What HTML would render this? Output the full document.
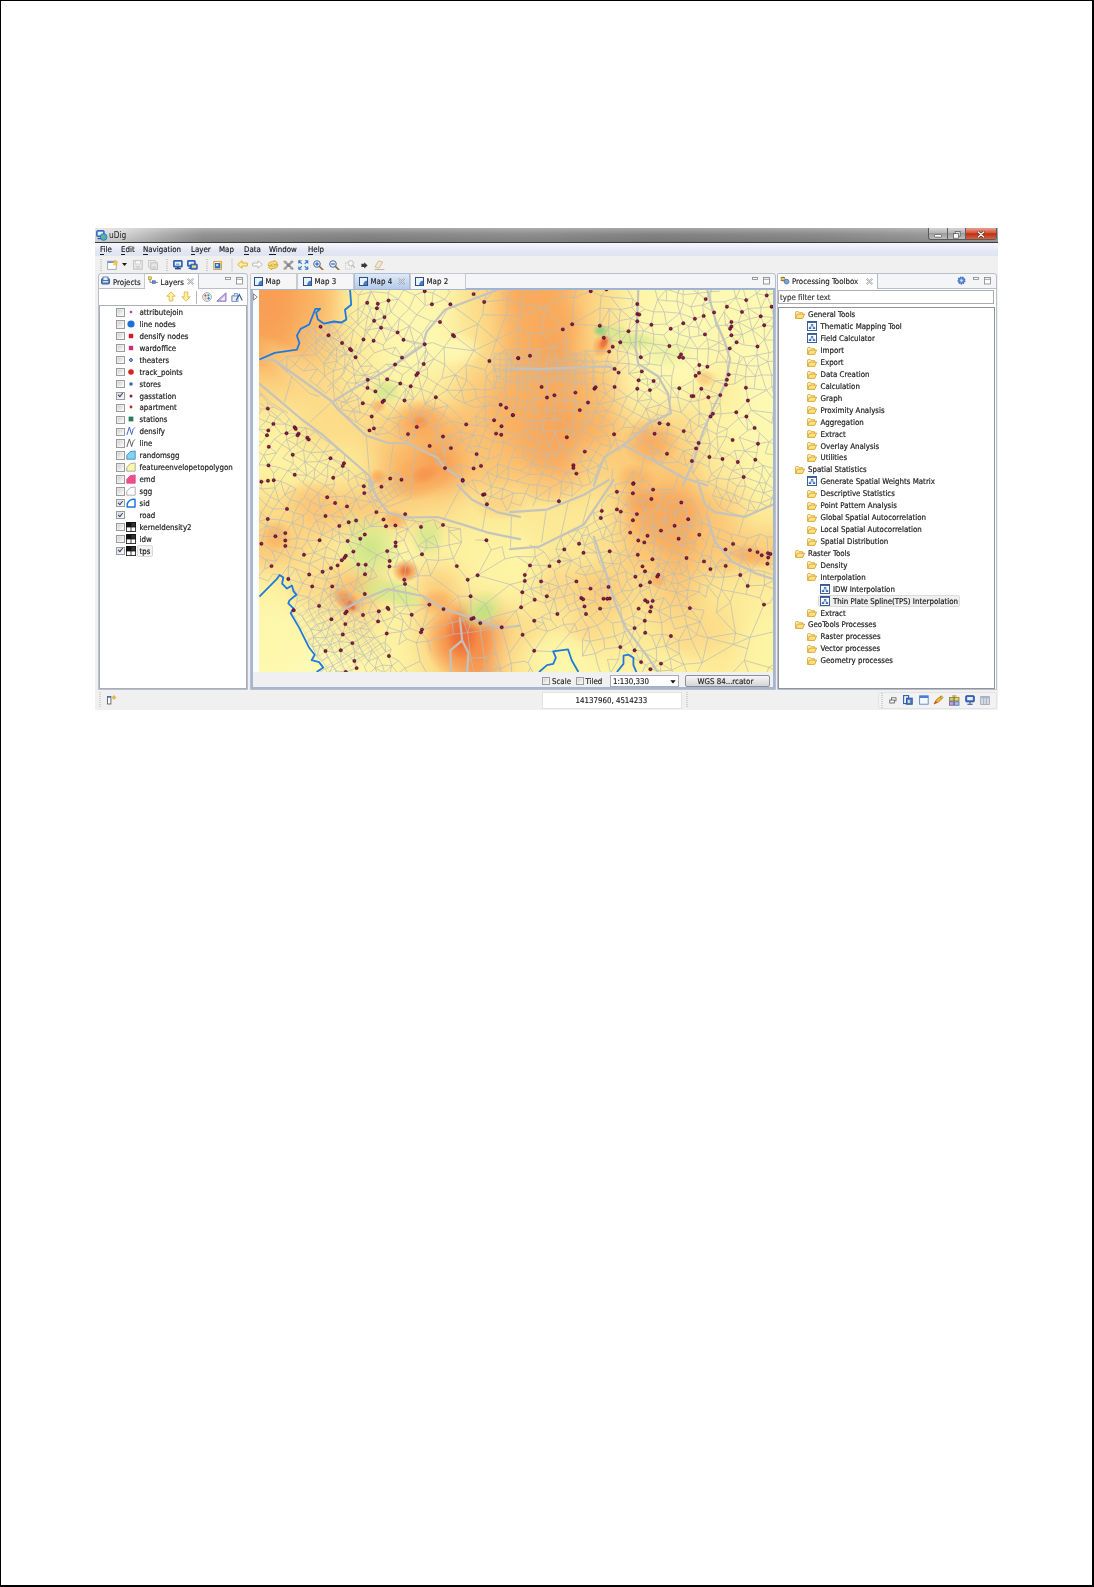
<!DOCTYPE html>
<html lang="en">
<head>
<meta charset="utf-8">
<title>uDig - Thin Plate Spline(TPS) Interpolation</title>
<style>
html,body{margin:0;padding:0;}
body{width:1094px;height:1587px;position:relative;overflow:hidden;background:#fff;
 font-family:"DejaVu Sans Condensed","Liberation Sans",sans-serif;font-size:7.85px;color:#222;}
#page{position:absolute;left:0;top:0;width:1091px;height:1584px;border-style:solid;border-color:#000;border-width:1px 2px 2px 1px;background:#fff;}
#app{position:absolute;left:95px;top:228px;width:903px;height:482px;background:#f0f0f0;overflow:hidden;filter:blur(0.42px);}
#app div,#app span,#app svg{position:absolute;}
#titlebar{left:0;top:0;width:903px;height:15px;
 background:linear-gradient(rgba(255,255,255,.28),rgba(255,255,255,0) 45%,rgba(0,0,0,.10)),linear-gradient(to right,#e0e0e0 0,#d4d4d4 3%,#b0b0b0 7.5%,#939393 12%,#878787 30%,#8e8e8e 48%,#838383 62%,#8b8b8b 80%,#989898 91%,#a2a2a2 100%);
 border-bottom:1px solid #3a3a3a;box-sizing:border-box;}
#titlebar .t{left:14px;top:2px;font-size:8.3px;color:#222;}
#menubar{left:0;top:15px;width:903px;height:13px;background:linear-gradient(#f7f8fc,#e3e7f3 60%,#dfe4f1);}
#menubar span{-webkit-text-stroke:0.15px #1a1a1a;top:1.8px;font-size:7.85px;color:#1a1a1a;white-space:nowrap;}
#menubar u{text-decoration:underline;text-decoration-thickness:0.6px;text-underline-offset:0.5px;}
#toolbar{left:0;top:28px;width:903px;height:17px;background:#f0f0f0;}
.frame{background:#fff;border:1px solid #b4b9c4;box-sizing:border-box;}
.tab{box-sizing:border-box;border:1px solid #b4b9c4;border-bottom:none;border-radius:2px 2px 0 0;}
.tt{-webkit-text-stroke:0.15px #222;font-size:7.85px;white-space:nowrap;color:#222;line-height:10px;}
.row{-webkit-text-stroke:0.18px #1c1c1c;white-space:nowrap;font-size:7.85px;line-height:10px;color:#1c1c1c;}
.cb{border:1px solid #9a9b9b;background:linear-gradient(135deg,#c9c9c9,#f4f4f4 75%);box-shadow:inset 0 0 0 0.6px #f4f4f4;}
.cb.on::after{content:"";position:absolute;left:1px;top:0.5px;width:3.5px;height:2px;border-left:1.2px solid #35457e;border-bottom:1.2px solid #35457e;transform:rotate(-50deg);}
</style>
</head>
<body>
<div id="page"></div>
<div id="app">
<div id="titlebar"><span class="t">uDig</span></div>
<div id="menubar"><span style="left:5px">File</span><div style="left:5.2px;top:10.6px;width:3.7px;height:0.7px;background:#1a1a1a"></div><span style="left:26px">Edit</span><div style="left:26.2px;top:10.6px;width:4.1px;height:0.7px;background:#1a1a1a"></div><span style="left:48px">Navigation</span><div style="left:48.2px;top:10.6px;width:4.9px;height:0.7px;background:#1a1a1a"></div><span style="left:96px">Layer</span><div style="left:96.2px;top:10.6px;width:3.5px;height:0.7px;background:#1a1a1a"></div><span style="left:124px">Map</span><span style="left:149px">Data</span><div style="left:149.2px;top:10.6px;width:5.0px;height:0.7px;background:#1a1a1a"></div><span style="left:174px">Window</span><div style="left:174.2px;top:10.6px;width:6.6px;height:0.7px;background:#1a1a1a"></div><span style="left:213px">Help</span><div style="left:213.2px;top:10.6px;width:4.9px;height:0.7px;background:#1a1a1a"></div></div>
<div id="toolbar"></div>
<svg style="left:4.5px;top:30.5px;" width="2" height="13" viewBox="0 0 2 13"><path d="M1 0V13" stroke="#a9a9a9" stroke-width="1" stroke-dasharray="1 1.2"/></svg>
<svg style="left:70.5px;top:30.5px;" width="2" height="13" viewBox="0 0 2 13"><path d="M1 0V13" stroke="#a9a9a9" stroke-width="1" stroke-dasharray="1 1.2"/></svg>
<svg style="left:110.5px;top:30.5px;" width="2" height="13" viewBox="0 0 2 13"><path d="M1 0V13" stroke="#a9a9a9" stroke-width="1" stroke-dasharray="1 1.2"/></svg>
<svg style="left:135.5px;top:30.5px;" width="2" height="13" viewBox="0 0 2 13"><path d="M1 0V13" stroke="#a9a9a9" stroke-width="1" stroke-dasharray="1 1.2"/></svg>
<svg style="left:12px;top:31.5px;" width="11" height="10" viewBox="0 0 11 10"><rect x="0.6" y="1.2" width="8.6" height="8.2" fill="#fdfdf6" stroke="#9ba7bd" stroke-width="0.9"/><rect x="0.6" y="1.2" width="8.6" height="1.8" fill="#6d8fc6"/><path d="M8.3 0L9.2 1.8L11 2.2L9.6 3.4L10 5.2L8.3 4.2L6.6 5.2L7 3.4L5.6 2.2L7.4 1.8Z" fill="#f5cf4a" stroke="#d9a520" stroke-width="0.4"/></svg>
<svg style="left:27px;top:35px;" width="5" height="3" viewBox="0 0 5 3"><path d="M0 0H5L2.5 3Z" fill="#1a1a1a"/></svg>
<svg style="left:37.5px;top:31.5px;" width="10" height="10" viewBox="0 0 10 10"><rect x="0.6" y="0.6" width="8.6" height="8.6" fill="#eaeaea" stroke="#bdbdbd" stroke-width="0.9"/><rect x="2.4" y="0.8" width="5" height="3.2" fill="#f8f8f8" stroke="#c6c6c6" stroke-width="0.6"/><rect x="2.6" y="5.8" width="4.6" height="3.2" fill="#d5d5d5"/></svg>
<svg style="left:52.5px;top:31.5px;" width="10" height="10" viewBox="0 0 10 10"><rect x="0.6" y="0.6" width="6.6" height="6.6" fill="#eeeeee" stroke="#c4c4c4" stroke-width="0.9"/><rect x="2.8" y="2.8" width="6.6" height="6.6" fill="#e6e6e6" stroke="#bdbdbd" stroke-width="0.9"/><rect x="4.4" y="6.4" width="3.4" height="2.8" fill="#d2d2d2"/></svg>
<svg style="left:77.5px;top:31.5px;" width="10" height="10" viewBox="0 0 10 10"><rect x="0.6" y="0.6" width="8.6" height="6.4" rx="0.3" fill="#3d74c8" stroke="#24509c" stroke-width="0.9"/><rect x="1.8" y="1.8" width="6.2" height="3.8" fill="#e6effc"/><path d="M3 4.2H6.4" stroke="#54688c" stroke-width="0.8"/><path d="M2 8.6H7.8" stroke="#1d4288" stroke-width="1.5"/><path d="M4.9 7V8.2" stroke="#1d4288" stroke-width="1.6"/></svg>
<svg style="left:92px;top:31.5px;" width="11" height="10" viewBox="0 0 11 10"><rect x="0.6" y="0.6" width="7.6" height="5.6" rx="0.3" fill="#3d74c8" stroke="#24509c" stroke-width="0.9"/><rect x="1.8" y="1.8" width="5.2" height="3" fill="#e6effc"/><rect x="3.8" y="4.2" width="6.4" height="5" rx="0.3" fill="#4a80d2" stroke="#24509c" stroke-width="0.9"/><rect x="5" y="5.4" width="4" height="2.4" fill="#f0d98a"/><path d="M1.6 8.2H4" stroke="#1d4288" stroke-width="1.3"/></svg>
<svg style="left:117.5px;top:31.5px;" width="10" height="10" viewBox="0 0 10 10"><rect x="0.8" y="1.4" width="7.6" height="8" fill="#fdf7e0" stroke="#c49a3a" stroke-width="0.9"/><rect x="2.2" y="3.4" width="4.8" height="4.6" fill="#3f78d0" stroke="#244f9c" stroke-width="0.7"/><rect x="3" y="4.3" width="2.2" height="1.6" fill="#dbe8fb"/><path d="M8 0L8.7 1.4L10 1.7L9 2.6L9.3 4L8 3.2L6.8 4L7.1 2.6L6.1 1.7L7.4 1.4Z" fill="#f2c234"/></svg>
<svg style="left:142px;top:32.3px;" width="11" height="9" viewBox="0 0 11 9"><path d="M0.7 4.5L5 0.7V3H10.3V6H5V8.3Z" fill="#fdf0a6" stroke="#dcaa28" stroke-width="0.9" stroke-linejoin="round"/></svg>
<svg style="left:157px;top:32.3px;" width="11" height="9" viewBox="0 0 11 9"><path d="M10.3 4.5L6 0.7V3H0.7V6H6V8.3Z" fill="#fafafa" stroke="#b6b6b6" stroke-width="0.9" stroke-linejoin="round"/></svg>
<svg style="left:171.5px;top:31.8px;" width="12" height="10" viewBox="0 0 12 10"><path d="M1 5.6Q1.2 1.6 5.4 1.6H7.2V0.4L10.6 2.8L7.2 5.2V4H5.6Q3.6 4 3.4 5.6Z" fill="#fce88e" stroke="#cfa024" stroke-width="0.8" stroke-linejoin="round"/><path d="M11 4.6Q10.8 8.6 6.6 8.6H4.8V9.8L1.4 7.4L4.8 5V6.2H6.4Q8.4 6.2 8.6 4.6Z" fill="#f9dc70" stroke="#cfa024" stroke-width="0.8" stroke-linejoin="round"/></svg>
<svg style="left:187.5px;top:31.8px;" width="11" height="10" viewBox="0 0 11 10"><path d="M1.4 1.6L9.6 8.8M9.6 1.6L1.4 8.8" stroke="#9d9d9d" stroke-width="2" stroke-linecap="round"/><circle cx="2.6" cy="2.2" r="1.5" fill="#a4a4a4"/><circle cx="8.4" cy="2" r="1.3" fill="#9a9a9a"/><circle cx="5.5" cy="5.2" r="1.9" fill="#858585"/><circle cx="2.8" cy="8.2" r="1.2" fill="#a0a0a0"/><circle cx="8.4" cy="8.2" r="1.3" fill="#a0a0a0"/></svg>
<svg style="left:203px;top:31.8px;" width="10.5" height="10" viewBox="0 0 10.5 10"><g stroke="#2f7ad4" stroke-width="1.1" fill="none"><path d="M0.8 3.6V0.8H3.6M0.8 0.8L3.8 3.8"/><path d="M9.7 3.6V0.8H6.9M9.7 0.8L6.7 3.8"/><path d="M0.8 6.4V9.2H3.6M0.8 9.2L3.8 6.2"/><path d="M9.7 6.4V9.2H6.9M9.7 9.2L6.7 6.2"/></g></svg>
<svg style="left:218px;top:31.8px;" width="11" height="10.5" viewBox="0 0 11 10.5"><circle cx="4" cy="4" r="3.3" fill="#eaf2fd" stroke="#3d6db8" stroke-width="1"/><path d="M2.2 4H5.8M4 2.2V5.8" stroke="#2450a0" stroke-width="1.1"/><path d="M6.4 6.4L10 10" stroke="#8a6a3a" stroke-width="1.5" stroke-linecap="round"/></svg>
<svg style="left:233.5px;top:31.8px;" width="11" height="10.5" viewBox="0 0 11 10.5"><circle cx="4" cy="4" r="3.3" fill="#eaf2fd" stroke="#3d6db8" stroke-width="1"/><path d="M2.2 4H5.8" stroke="#2450a0" stroke-width="1.1"/><path d="M6.4 6.4L10 10" stroke="#8a6a3a" stroke-width="1.5" stroke-linecap="round"/></svg>
<svg style="left:249.5px;top:31.8px;" width="10.5" height="10.5" viewBox="0 0 10.5 10.5"><rect x="0.6" y="2.6" width="6" height="6.6" fill="none" stroke="#bdbdbd" stroke-width="0.8" stroke-dasharray="1 1"/><circle cx="5.8" cy="3.2" r="2.6" fill="#f6f6f6" stroke="#b4b4b4" stroke-width="0.8"/><path d="M7.6 5.2L9.8 7.8" stroke="#b0b0b0" stroke-width="1.1"/></svg>
<svg style="left:265.5px;top:33.5px;" width="7" height="7" viewBox="0 0 7 7"><path d="M0.4 1.8H3.2V0.3L6.6 3.4L3.2 6.5V5H0.4Z" fill="#3a3a3a"/></svg>
<svg style="left:278.5px;top:31.8px;" width="11" height="10.5" viewBox="0 0 11 10.5"><path d="M4.6 0.8L8.8 2L5 8.2L0.8 7Z" fill="#f1e6d2" stroke="#c9b48c" stroke-width="0.8" stroke-linejoin="round"/><path d="M0.6 9.6H10.4" stroke="#b9a888" stroke-width="0.9"/></svg>
<svg style="left:1px;top:1.5px;" width="12" height="11" viewBox="0 0 12 11"><rect x="0.6" y="0.6" width="7.6" height="6" rx="0.8" fill="#4a86d8" stroke="#2b5aa6" stroke-width="0.9"/><rect x="1.8" y="1.8" width="5.2" height="3.4" fill="#e4eefc"/><circle cx="7.6" cy="7" r="3.4" fill="#43a6e8" stroke="#2c6fb4" stroke-width="0.7"/><path d="M5.2 6Q6.6 4.4 8.4 5.6Q9.6 7 8.2 8.6Q6.4 9.2 5.8 7.6Z" fill="#6cc04a"/><path d="M1.6 8.6H5" stroke="#2b5aa6" stroke-width="1.2"/></svg>
<div style="left:833px;top:0px;width:69px;height:12px;border:1px solid #5a5a5a;border-top:none;border-radius:0 0 3px 3px;box-sizing:border-box;background:linear-gradient(#d4d4d4,#b4b4b4 45%,#9e9e9e 50%,#bcbcbc);"></div>
<div style="left:852px;top:0px;width:1px;height:11.5px;background:#5f5f5f;"></div>
<div style="left:870px;top:0px;width:1px;height:11.5px;background:#5f5f5f;"></div>
<div style="left:871px;top:0px;width:30px;height:11px;background:linear-gradient(#e6a091,#d2553b 45%,#c02f12 52%,#d5623f);border-radius:0 0 2px 0;"></div>
<svg style="left:838.5px;top:5.5px;" width="8" height="4" viewBox="0 0 8 4"><rect x="0.5" y="0.5" width="7" height="2.6" rx="0.6" fill="#fff" stroke="#555" stroke-width="0.7"/></svg>
<svg style="left:857.5px;top:2.5px;" width="8" height="8" viewBox="0 0 8 8"><rect x="2.2" y="0.6" width="5" height="4.6" fill="#ddd" stroke="#555" stroke-width="0.7"/><rect x="0.6" y="2.6" width="5" height="4.6" fill="#fff" stroke="#555" stroke-width="0.7"/></svg>
<svg style="left:882px;top:2.5px;" width="8" height="7" viewBox="0 0 8 7"><path d="M1.2 1L6.8 6M6.8 1L1.2 6" stroke="#5a2a22" stroke-width="2.4" stroke-linecap="round"/><path d="M1.2 1L6.8 6M6.8 1L1.2 6" stroke="#fff" stroke-width="1.3" stroke-linecap="round"/></svg>
<div style="left:3px;top:45px;width:150px;height:417px;background:#f4f5f7;border:1px solid #b9bec8;box-sizing:border-box;border-radius:3px 3px 0 0;"></div>
<div style="left:4px;top:60px;width:148px;height:1px;background:#b9bec8;"></div>
<div class="tab" style="left:49px;top:45px;width:55px;height:16px;background:#fff;"></div>
<div style="left:48.5px;top:46px;width:1px;height:14px;background:#c5c9d1;"></div>
<div style="left:4px;top:61px;width:148px;height:16px;background:#fff;"></div>
<div style="left:4px;top:77px;width:148px;height:384px;background:#fff;border:1px solid #a9adb5;box-sizing:border-box;"></div>
<svg style="left:5.5px;top:48px;" width="9" height="9" viewBox="0 0 9 9"><rect x="0.5" y="2.5" width="8" height="5.5" rx="1" fill="#5b86c9" stroke="#33578f" stroke-width="0.9"/><rect x="2" y="1" width="5" height="3.4" fill="#e8eefb" stroke="#33578f" stroke-width="0.7"/><rect x="2" y="5" width="5" height="1.4" fill="#cfe0fa"/></svg>
<span class="tt" style="left:18px;top:49.7px;">Projects</span>
<svg style="left:52.5px;top:48px;" width="10" height="9" viewBox="0 0 10 9"><rect x="0.4" y="0.8" width="3.2" height="2.6" fill="#f3d35c" stroke="#b58f17" stroke-width="0.6"/><path d="M2 3.5V6.3H4.2" stroke="#555" stroke-width="0.7" fill="none"/><rect x="4.3" y="4.8" width="3" height="2.6" fill="#5d8fd6" stroke="#2f5796" stroke-width="0.6"/><path d="M8 6.4H9.8" stroke="#555" stroke-width="0.8"/></svg>
<span class="tt" style="left:65.5px;top:49.7px;">Layers</span>
<svg style="left:91.5px;top:50px;" width="7" height="7" viewBox="0 0 7 7"><path d="M0.6 1.4L1.4 0.6L3.5 2.7L5.6 0.6L6.4 1.4L4.3 3.5L6.4 5.6L5.6 6.4L3.5 4.3L1.4 6.4L0.6 5.6L2.7 3.5Z" fill="#fbfbfb" stroke="#7d7d7d" stroke-width="0.7" stroke-linejoin="round"/></svg>
<svg style="left:129.5px;top:48.5px;" width="18" height="8" viewBox="0 0 18 8"><rect x="0.5" y="0.5" width="5" height="2" fill="#fff" stroke="#858585" stroke-width="0.8"/><rect x="11.5" y="0.5" width="6" height="6.5" fill="#fff" stroke="#858585" stroke-width="0.8"/><path d="M11.5 2.3H17.5" stroke="#858585" stroke-width="0.8"/></svg>
<svg style="left:71px;top:63px;" width="10" height="11" viewBox="0 0 10 11"><path d="M5 0.8L9.2 5.2H6.8V10H3.2V5.2H0.8Z" fill="#fdf1ac" stroke="#dfae2c" stroke-width="0.8" stroke-linejoin="round"/></svg>
<svg style="left:86px;top:63px;" width="10" height="11" viewBox="0 0 10 11"><path d="M5 10.2L9.2 5.8H6.8V1H3.2V5.8H0.8Z" fill="#fdf1ac" stroke="#dfae2c" stroke-width="0.8" stroke-linejoin="round"/></svg>
<div style="left:101px;top:62.5px;width:1px;height:13px;background:#b5b5b5;"></div>
<svg style="left:107px;top:63.5px;" width="10" height="10" viewBox="0 0 10 10"><circle cx="5" cy="5" r="4.4" fill="#e9edf6" stroke="#9aa6c4" stroke-width="0.9"/><circle cx="3.4" cy="3.6" r="1.1" fill="#e03b3b"/><circle cx="6.4" cy="3.4" r="1.1" fill="#3bb04a"/><circle cx="6.6" cy="6.4" r="1.1" fill="#2f62d6"/><circle cx="3.6" cy="6.6" r="1.1" fill="#e8c32b"/></svg>
<svg style="left:121px;top:64px;" width="11" height="10" viewBox="0 0 11 10"><path d="M0.8 9.2L10 0.8V9.2Z" fill="#c9b8e6" stroke="#8a74c2" stroke-width="1" stroke-linejoin="round"/><path d="M4.5 8.2L8.8 4V8.2Z" fill="#f4f0fb"/></svg>
<svg style="left:136px;top:63.5px;" width="12" height="11" viewBox="0 0 12 11"><path d="M1 9.5V3.8H3.2V1.5H6.5V3.8" fill="#dfe8f6" stroke="#6d87b3" stroke-width="0.8"/><rect x="1" y="4" width="6" height="5.5" fill="#e6eefb" stroke="#6d87b3" stroke-width="0.8"/><path d="M5 8.5L8.3 2.5L11.3 8.5" fill="none" stroke="#3a5f9e" stroke-width="1.2"/></svg>
<div class="cb" style="left:21.3px;top:80.2px;width:6.4px;height:6.4px;"></div>
<svg style="left:31px;top:79px;" width="10" height="10" viewBox="0 0 10 10"><circle cx="5" cy="5" r="1.3" fill="#c2339b"/></svg>
<span class="row" style="left:44.5px;top:80px;">attributejoin</span>
<div class="cb" style="left:21.3px;top:92.13px;width:6.4px;height:6.4px;"></div>
<svg style="left:31px;top:90.93px;" width="10" height="10" viewBox="0 0 10 10"><circle cx="5" cy="5" r="3.6" fill="#1f6fd9"/></svg>
<span class="row" style="left:44.5px;top:91.93px;">line nodes</span>
<div class="cb" style="left:21.3px;top:104.06px;width:6.4px;height:6.4px;"></div>
<svg style="left:31px;top:102.86px;" width="10" height="10" viewBox="0 0 10 10"><rect x="2.8" y="2.8" width="4.4" height="4.4" fill="#d4172a"/></svg>
<span class="row" style="left:44.5px;top:103.86px;">densify nodes</span>
<div class="cb" style="left:21.3px;top:115.99px;width:6.4px;height:6.4px;"></div>
<svg style="left:31px;top:114.79px;" width="10" height="10" viewBox="0 0 10 10"><rect x="2.8" y="2.8" width="4.4" height="4.4" fill="#cc2b7b"/></svg>
<span class="row" style="left:44.5px;top:115.79px;">wardoffice</span>
<div class="cb" style="left:21.3px;top:127.92px;width:6.4px;height:6.4px;"></div>
<svg style="left:31px;top:126.72px;" width="10" height="10" viewBox="0 0 10 10"><circle cx="5" cy="5" r="1.4" fill="#dfe8ff" stroke="#1b3f9c" stroke-width="1"/></svg>
<span class="row" style="left:44.5px;top:127.72px;">theaters</span>
<div class="cb" style="left:21.3px;top:139.85px;width:6.4px;height:6.4px;"></div>
<svg style="left:31px;top:138.65px;" width="10" height="10" viewBox="0 0 10 10"><circle cx="5" cy="5" r="2.8" fill="#d92222"/></svg>
<span class="row" style="left:44.5px;top:139.65px;">track_points</span>
<div class="cb" style="left:21.3px;top:151.78px;width:6.4px;height:6.4px;"></div>
<svg style="left:31px;top:150.58px;" width="10" height="10" viewBox="0 0 10 10"><rect x="3.5" y="3.5" width="3" height="3" fill="#2f5fae"/></svg>
<span class="row" style="left:44.5px;top:151.58px;">stores</span>
<div class="cb on" style="left:21.3px;top:163.71px;width:6.4px;height:6.4px;"></div>
<svg style="left:31px;top:162.51px;" width="10" height="10" viewBox="0 0 10 10"><circle cx="5" cy="5" r="1.5" fill="#8c1c3c"/></svg>
<span class="row" style="left:44.5px;top:163.51px;">gasstation</span>
<div class="cb" style="left:21.3px;top:175.64px;width:6.4px;height:6.4px;"></div>
<svg style="left:31px;top:174.44px;" width="10" height="10" viewBox="0 0 10 10"><circle cx="5" cy="5" r="1.4" fill="#c62121"/></svg>
<span class="row" style="left:44.5px;top:175.44px;">apartment</span>
<div class="cb" style="left:21.3px;top:187.57px;width:6.4px;height:6.4px;"></div>
<svg style="left:31px;top:186.37px;" width="10" height="10" viewBox="0 0 10 10"><rect x="2.6" y="2.6" width="4.8" height="4.8" fill="#2d7a5a"/></svg>
<span class="row" style="left:44.5px;top:187.37px;">stations</span>
<div class="cb" style="left:21.3px;top:199.5px;width:6.4px;height:6.4px;"></div>
<svg style="left:31px;top:198.3px;" width="10" height="10" viewBox="0 0 10 10"><path d="M0.8 9L3.4 1L5.6 8.6L7.2 3.4L9 1.4" fill="none" stroke="#2c58c4" stroke-width="0.9"/></svg>
<span class="row" style="left:44.5px;top:199.3px;">densify</span>
<div class="cb" style="left:21.3px;top:211.43px;width:6.4px;height:6.4px;"></div>
<svg style="left:31px;top:210.23px;" width="10" height="10" viewBox="0 0 10 10"><path d="M0.8 9L3.4 1L5.6 8.6L7.2 3.4L9 1.4" fill="none" stroke="#555555" stroke-width="0.9"/></svg>
<span class="row" style="left:44.5px;top:211.23px;">line</span>
<div class="cb" style="left:21.3px;top:223.36px;width:6.4px;height:6.4px;"></div>
<svg style="left:31px;top:222.16px;" width="10" height="10" viewBox="0 0 10 10"><path d="M0.8 9.2V5.4L4 1.8L9.2 0.9V9.2Z" fill="#7fd6ea" stroke="#3c74c9" stroke-width="0.8" stroke-linejoin="round"/></svg>
<span class="row" style="left:44.5px;top:223.16px;">randomsgg</span>
<div class="cb" style="left:21.3px;top:235.29px;width:6.4px;height:6.4px;"></div>
<svg style="left:31px;top:234.09px;" width="10" height="10" viewBox="0 0 10 10"><path d="M0.8 9.2V5.4L4 1.8L9.2 0.9V9.2Z" fill="#fbf6a8" stroke="#9a9a9a" stroke-width="0.8" stroke-linejoin="round"/></svg>
<span class="row" style="left:44.5px;top:235.09px;">featureenvelopetopolygon</span>
<div class="cb" style="left:21.3px;top:247.22px;width:6.4px;height:6.4px;"></div>
<svg style="left:31px;top:246.02px;" width="10" height="10" viewBox="0 0 10 10"><path d="M0.8 9.2V5.4L4 1.8L9.2 0.9V9.2Z" fill="#ef4f8a" stroke="#e0407c" stroke-width="0.8" stroke-linejoin="round"/></svg>
<span class="row" style="left:44.5px;top:247.02px;">emd</span>
<div class="cb" style="left:21.3px;top:259.15px;width:6.4px;height:6.4px;"></div>
<svg style="left:31px;top:257.95px;" width="10" height="10" viewBox="0 0 10 10"><path d="M0.8 9.2V5.4L4 1.8L9.2 0.9V9.2Z" fill="#ffffff" stroke="#9a9a9a" stroke-width="0.8" stroke-linejoin="round"/></svg>
<span class="row" style="left:44.5px;top:258.95px;">sgg</span>
<div class="cb on" style="left:21.3px;top:271.08px;width:6.4px;height:6.4px;"></div>
<svg style="left:31px;top:269.88px;" width="10" height="10" viewBox="0 0 10 10"><path d="M1.2 9V6Q2.4 2.2 6.6 1.2H9V9Z" fill="#ffffff" stroke="#1f78e0" stroke-width="1.5" stroke-linejoin="round"/></svg>
<span class="row" style="left:44.5px;top:270.88px;">sid</span>
<div class="cb on" style="left:21.3px;top:283.01px;width:6.4px;height:6.4px;"></div>
<span class="row" style="left:44.5px;top:282.81px;">road</span>
<div class="cb" style="left:21.3px;top:294.94px;width:6.4px;height:6.4px;"></div>
<svg style="left:31px;top:293.74px;" width="10" height="10" viewBox="0 0 10 10"><rect x="0" y="0" width="10" height="10" fill="#fff"/><rect x="0" y="0" width="5" height="5" fill="#111"/><rect x="5" y="0" width="5" height="5" fill="#333"/><rect x="5" y="5" width="5" height="5" fill="#fff"/><rect x="0.4" y="0.4" width="9.2" height="9.2" fill="none" stroke="#111" stroke-width="0.8"/><path d="M5 0V10M0 5H10" stroke="#111" stroke-width="0.8"/></svg>
<span class="row" style="left:44.5px;top:294.74px;">kerneldensity2</span>
<div class="cb" style="left:21.3px;top:306.87px;width:6.4px;height:6.4px;"></div>
<svg style="left:31px;top:305.67px;" width="10" height="10" viewBox="0 0 10 10"><rect x="0" y="0" width="10" height="10" fill="#fff"/><rect x="0" y="0" width="5" height="5" fill="#111"/><rect x="5" y="0" width="5" height="5" fill="#333"/><rect x="5" y="5" width="5" height="5" fill="#fff"/><rect x="0.4" y="0.4" width="9.2" height="9.2" fill="none" stroke="#111" stroke-width="0.8"/><path d="M5 0V10M0 5H10" stroke="#111" stroke-width="0.8"/></svg>
<span class="row" style="left:44.5px;top:306.67px;">idw</span>
<div style="left:42px;top:317.1px;width:15.5px;height:11.5px;background:#f3f3f3;border:1px solid #d9d9d9;border-radius:2px;box-sizing:border-box;"></div>
<div class="cb on" style="left:21.3px;top:318.8px;width:6.4px;height:6.4px;"></div>
<svg style="left:31px;top:317.6px;" width="10" height="10" viewBox="0 0 10 10"><rect x="0" y="0" width="10" height="10" fill="#fff"/><rect x="0" y="0" width="5" height="5" fill="#111"/><rect x="5" y="0" width="5" height="5" fill="#333"/><rect x="5" y="5" width="5" height="5" fill="#fff"/><rect x="0.4" y="0.4" width="9.2" height="9.2" fill="none" stroke="#111" stroke-width="0.8"/><path d="M5 0V10M0 5H10" stroke="#111" stroke-width="0.8"/></svg>
<span class="row" style="left:44.5px;top:318.6px;">tps</span>
<div style="left:155px;top:45px;width:526px;height:417px;background:#f4f5f7;border:1px solid #b9bec8;box-sizing:border-box;border-radius:3px 3px 0 0;"></div>
<div style="left:156px;top:60px;width:524px;height:1px;background:#9fb3d1;"></div>
<div class="tab" style="left:155px;top:45px;width:47px;height:16px;background:#f6f6f6;border-color:#c6cad2;"></div>
<div class="tab" style="left:202px;top:45px;width:57px;height:16px;background:#f6f6f6;border-color:#c6cad2;"></div>
<div class="tab" style="left:259px;top:45px;width:56px;height:16px;background:linear-gradient(#dfe9f7,#b3cbea);border-color:#a9bcd8;"></div>
<div class="tab" style="left:315px;top:45px;width:56px;height:16px;background:#f6f6f6;border-color:#c6cad2;"></div>
<svg style="left:159px;top:48.5px;" width="9" height="9" viewBox="0 0 9 9"><rect x="0.5" y="0.5" width="8" height="8" fill="#3f7fd0" stroke="#2c4f86" stroke-width="1"/><path d="M1 1H8V3.6Q4.5 4 4.2 8H1Z" fill="#eaf2fc"/><rect x="0.5" y="0.5" width="8" height="8" fill="none" stroke="#2c4f86" stroke-width="1"/></svg>
<span class="tt" style="left:170.5px;top:49.4px;">Map</span>
<svg style="left:207.5px;top:48.5px;" width="9" height="9" viewBox="0 0 9 9"><rect x="0.5" y="0.5" width="8" height="8" fill="#3f7fd0" stroke="#2c4f86" stroke-width="1"/><path d="M1 1H8V3.6Q4.5 4 4.2 8H1Z" fill="#eaf2fc"/><rect x="0.5" y="0.5" width="8" height="8" fill="none" stroke="#2c4f86" stroke-width="1"/></svg>
<span class="tt" style="left:219.5px;top:49.4px;">Map 3</span>
<svg style="left:263.5px;top:48.5px;" width="9" height="9" viewBox="0 0 9 9"><rect x="0.5" y="0.5" width="8" height="8" fill="#3f7fd0" stroke="#2c4f86" stroke-width="1"/><path d="M1 1H8V3.6Q4.5 4 4.2 8H1Z" fill="#eaf2fc"/><rect x="0.5" y="0.5" width="8" height="8" fill="none" stroke="#2c4f86" stroke-width="1"/></svg>
<span class="tt" style="left:275.5px;top:49.4px;">Map 4</span>
<svg style="left:319.5px;top:48.5px;" width="9" height="9" viewBox="0 0 9 9"><rect x="0.5" y="0.5" width="8" height="8" fill="#3f7fd0" stroke="#2c4f86" stroke-width="1"/><path d="M1 1H8V3.6Q4.5 4 4.2 8H1Z" fill="#eaf2fc"/><rect x="0.5" y="0.5" width="8" height="8" fill="none" stroke="#2c4f86" stroke-width="1"/></svg>
<span class="tt" style="left:331.5px;top:49.4px;">Map 2</span>
<svg style="left:303px;top:50px;" width="7" height="7" viewBox="0 0 7 7"><path d="M0.6 1.4L1.4 0.6L3.5 2.7L5.6 0.6L6.4 1.4L4.3 3.5L6.4 5.6L5.6 6.4L3.5 4.3L1.4 6.4L0.6 5.6L2.7 3.5Z" fill="#fbfbfb" stroke="#7d7d7d" stroke-width="0.7" stroke-linejoin="round"/></svg>
<svg style="left:657px;top:48.5px;" width="18" height="8" viewBox="0 0 18 8"><rect x="0.5" y="0.5" width="5" height="2" fill="#fff" stroke="#858585" stroke-width="0.8"/><rect x="11.5" y="0.5" width="6" height="6.5" fill="#fff" stroke="#858585" stroke-width="0.8"/><path d="M11.5 2.3H17.5" stroke="#858585" stroke-width="0.8"/></svg>
<div style="left:156px;top:61px;width:524px;height:400px;background:#f0f0f0;border:1px solid #9fb3d1;border-width:1px 2px 2px 2px;box-sizing:border-box;border-color:#a3b6d3;"></div>
<div style="left:158px;top:62px;width:6px;height:382px;background:#fbfbfb;"></div>
<svg style="left:158px;top:65px;" width="5" height="8" viewBox="0 0 5 8"><path d="M0.6 0.8L4.2 4L0.6 7.2Z" fill="#fff" stroke="#555" stroke-width="0.7"/></svg>
<div style="left:158px;top:444px;width:520px;height:15px;background:#f0f0f0;"></div>
<div class="cb" style="left:446.5px;top:448.5px;width:6px;height:6px;"></div>
<span class="tt" style="left:457px;top:448.5px;">Scale</span>
<div class="cb" style="left:480.5px;top:448.5px;width:6px;height:6px;"></div>
<span class="tt" style="left:490.5px;top:448.5px;">Tiled</span>
<div style="left:515px;top:446.5px;width:69px;height:12.5px;background:#fff;border:1px solid #abadb3;box-sizing:border-box;"></div>
<span class="tt" style="left:518px;top:449.3px;">1:130,330</span>
<svg style="left:574.5px;top:451.5px;" width="6" height="4" viewBox="0 0 6 4"><path d="M0.3 0.3H5.7L3 3.6Z" fill="#111"/></svg>
<div style="left:589.5px;top:446.5px;width:85px;height:12px;background:linear-gradient(#f6f6f6,#e6e6e6 50%,#d4d4d4);border:1px solid #8e8f8f;border-radius:2px;box-sizing:border-box;"></div>
<span class="tt" style="left:602.5px;top:448.9px;">WGS 84...rcator</span>
<svg style="left:164px;top:62px" width="514" height="382" viewBox="259 290 514 382"><defs><radialGradient id="g_o1"><stop offset="0" stop-color="#fbc476" stop-opacity="1"/><stop offset="0.45" stop-color="#fbc476" stop-opacity="0.75"/><stop offset="1" stop-color="#fbc476" stop-opacity="0"/></radialGradient><radialGradient id="g_o2"><stop offset="0" stop-color="#f9a95c" stop-opacity="1"/><stop offset="0.45" stop-color="#f9a95c" stop-opacity="0.75"/><stop offset="1" stop-color="#f9a95c" stop-opacity="0"/></radialGradient><radialGradient id="g_o3"><stop offset="0" stop-color="#f58a45" stop-opacity="1"/><stop offset="0.45" stop-color="#f58a45" stop-opacity="0.75"/><stop offset="1" stop-color="#f58a45" stop-opacity="0"/></radialGradient><radialGradient id="g_r1"><stop offset="0" stop-color="#ea5a30" stop-opacity="1"/><stop offset="0.45" stop-color="#ea5a30" stop-opacity="0.75"/><stop offset="1" stop-color="#ea5a30" stop-opacity="0"/></radialGradient><radialGradient id="g_r2"><stop offset="0" stop-color="#d93a22" stop-opacity="1"/><stop offset="0.45" stop-color="#d93a22" stop-opacity="0.75"/><stop offset="1" stop-color="#d93a22" stop-opacity="0"/></radialGradient><radialGradient id="g_g1"><stop offset="0" stop-color="#d6e98c" stop-opacity="1"/><stop offset="0.45" stop-color="#d6e98c" stop-opacity="0.75"/><stop offset="1" stop-color="#d6e98c" stop-opacity="0"/></radialGradient><radialGradient id="g_g2"><stop offset="0" stop-color="#bfe07f" stop-opacity="1"/><stop offset="0.45" stop-color="#bfe07f" stop-opacity="0.75"/><stop offset="1" stop-color="#bfe07f" stop-opacity="0"/></radialGradient><radialGradient id="g_g3"><stop offset="0" stop-color="#8fcf7a" stop-opacity="1"/><stop offset="0.45" stop-color="#8fcf7a" stop-opacity="0.75"/><stop offset="1" stop-color="#8fcf7a" stop-opacity="0"/></radialGradient><radialGradient id="g_y1"><stop offset="0" stop-color="#fdf8aa" stop-opacity="1"/><stop offset="0.45" stop-color="#fdf8aa" stop-opacity="0.75"/><stop offset="1" stop-color="#fdf8aa" stop-opacity="0"/></radialGradient><radialGradient id="g_y2"><stop offset="0" stop-color="#fef9b4" stop-opacity="1"/><stop offset="0.45" stop-color="#fef9b4" stop-opacity="0.75"/><stop offset="1" stop-color="#fef9b4" stop-opacity="0"/></radialGradient><radialGradient id="g_po"><stop offset="0" stop-color="#fcd88a" stop-opacity="1"/><stop offset="0.45" stop-color="#fcd88a" stop-opacity="0.75"/><stop offset="1" stop-color="#fcd88a" stop-opacity="0"/></radialGradient><clipPath id="mclip"><rect x="259" y="290" width="514" height="382"/></clipPath></defs><g clip-path="url(#mclip)"><rect x="259" y="290" width="514" height="382" fill="#fde89a"/><filter id="hb" x="-10%" y="-10%" width="120%" height="120%"><feGaussianBlur stdDeviation="13"/></filter><g filter="url(#hb)"><rect x="218.5" y="249.5" width="41" height="41" fill="#f89f55"/><rect x="258.5" y="249.5" width="41" height="41" fill="#f89f55"/><rect x="298.5" y="249.5" width="41" height="41" fill="#fab564"/><rect x="338.5" y="249.5" width="41" height="41" fill="#fdf3a2"/><rect x="378.5" y="249.5" width="41" height="41" fill="#fdf7af"/><rect x="418.5" y="249.5" width="41" height="41" fill="#fdf6ad"/><rect x="458.5" y="249.5" width="41" height="41" fill="#fcdc88"/><rect x="498.5" y="249.5" width="41" height="41" fill="#f9ac5d"/><rect x="538.5" y="249.5" width="41" height="41" fill="#f9ac5d"/><rect x="578.5" y="249.5" width="41" height="41" fill="#fcd884"/><rect x="618.5" y="249.5" width="41" height="41" fill="#fdf5a9"/><rect x="658.5" y="249.5" width="41" height="41" fill="#fdf9b4"/><rect x="698.5" y="249.5" width="41" height="41" fill="#fdf9b4"/><rect x="738.5" y="249.5" width="41" height="41" fill="#fdfab8"/><rect x="778.5" y="249.5" width="41" height="41" fill="#fdfab8"/><rect x="218.5" y="289.5" width="41" height="41" fill="#f89f55"/><rect x="258.5" y="289.5" width="41" height="41" fill="#f89f55"/><rect x="298.5" y="289.5" width="41" height="41" fill="#fab564"/><rect x="338.5" y="289.5" width="41" height="41" fill="#fdf3a2"/><rect x="378.5" y="289.5" width="41" height="41" fill="#fdf7af"/><rect x="418.5" y="289.5" width="41" height="41" fill="#fdf6ad"/><rect x="458.5" y="289.5" width="41" height="41" fill="#fcdc88"/><rect x="498.5" y="289.5" width="41" height="41" fill="#f9ac5d"/><rect x="538.5" y="289.5" width="41" height="41" fill="#f9ac5d"/><rect x="578.5" y="289.5" width="41" height="41" fill="#fcd884"/><rect x="618.5" y="289.5" width="41" height="41" fill="#fdf5a9"/><rect x="658.5" y="289.5" width="41" height="41" fill="#fdf9b4"/><rect x="698.5" y="289.5" width="41" height="41" fill="#fdf9b4"/><rect x="738.5" y="289.5" width="41" height="41" fill="#fdfab8"/><rect x="778.5" y="289.5" width="41" height="41" fill="#fdfab8"/><rect x="218.5" y="329.5" width="41" height="41" fill="#f8a659"/><rect x="258.5" y="329.5" width="41" height="41" fill="#f8a659"/><rect x="298.5" y="329.5" width="41" height="41" fill="#fbc876"/><rect x="338.5" y="329.5" width="41" height="41" fill="#fdec9a"/><rect x="378.5" y="329.5" width="41" height="41" fill="#fdf6ad"/><rect x="418.5" y="329.5" width="41" height="41" fill="#fdf8b1"/><rect x="458.5" y="329.5" width="41" height="41" fill="#fce18d"/><rect x="498.5" y="329.5" width="41" height="41" fill="#f9af60"/><rect x="538.5" y="329.5" width="41" height="41" fill="#f8a257"/><rect x="578.5" y="329.5" width="41" height="41" fill="#fcd481"/><rect x="618.5" y="329.5" width="41" height="41" fill="#fdf8b1"/><rect x="658.5" y="329.5" width="41" height="41" fill="#fdf9b4"/><rect x="698.5" y="329.5" width="41" height="41" fill="#fdf6ab"/><rect x="738.5" y="329.5" width="41" height="41" fill="#fdf9b6"/><rect x="778.5" y="329.5" width="41" height="41" fill="#fdf9b6"/><rect x="218.5" y="369.5" width="41" height="41" fill="#fcd481"/><rect x="258.5" y="369.5" width="41" height="41" fill="#fcd481"/><rect x="298.5" y="369.5" width="41" height="41" fill="#fcdc88"/><rect x="338.5" y="369.5" width="41" height="41" fill="#fce895"/><rect x="378.5" y="369.5" width="41" height="41" fill="#fdf4a4"/><rect x="418.5" y="369.5" width="41" height="41" fill="#fdec9a"/><rect x="458.5" y="369.5" width="41" height="41" fill="#fbc876"/><rect x="498.5" y="369.5" width="41" height="41" fill="#f9af60"/><rect x="538.5" y="369.5" width="41" height="41" fill="#f9ac5d"/><rect x="578.5" y="369.5" width="41" height="41" fill="#fabd6b"/><rect x="618.5" y="369.5" width="41" height="41" fill="#fdf5a9"/><rect x="658.5" y="369.5" width="41" height="41" fill="#fdf6ab"/><rect x="698.5" y="369.5" width="41" height="41" fill="#fdec9a"/><rect x="738.5" y="369.5" width="41" height="41" fill="#fdf9b4"/><rect x="778.5" y="369.5" width="41" height="41" fill="#fdf9b4"/><rect x="218.5" y="409.5" width="41" height="41" fill="#fdf3a2"/><rect x="258.5" y="409.5" width="41" height="41" fill="#fdf3a2"/><rect x="298.5" y="409.5" width="41" height="41" fill="#fcdc88"/><rect x="338.5" y="409.5" width="41" height="41" fill="#fcdc88"/><rect x="378.5" y="409.5" width="41" height="41" fill="#fbc572"/><rect x="418.5" y="409.5" width="41" height="41" fill="#fab262"/><rect x="458.5" y="409.5" width="41" height="41" fill="#fbc16f"/><rect x="498.5" y="409.5" width="41" height="41" fill="#f9af60"/><rect x="538.5" y="409.5" width="41" height="41" fill="#f8a257"/><rect x="578.5" y="409.5" width="41" height="41" fill="#fab262"/><rect x="618.5" y="409.5" width="41" height="41" fill="#fcdc88"/><rect x="658.5" y="409.5" width="41" height="41" fill="#fcd481"/><rect x="698.5" y="409.5" width="41" height="41" fill="#fdf4a4"/><rect x="738.5" y="409.5" width="41" height="41" fill="#fdf8b1"/><rect x="778.5" y="409.5" width="41" height="41" fill="#fdf8b1"/><rect x="218.5" y="449.5" width="41" height="41" fill="#fdf3a2"/><rect x="258.5" y="449.5" width="41" height="41" fill="#fdf3a2"/><rect x="298.5" y="449.5" width="41" height="41" fill="#fdf3a2"/><rect x="338.5" y="449.5" width="41" height="41" fill="#fce895"/><rect x="378.5" y="449.5" width="41" height="41" fill="#fab564"/><rect x="418.5" y="449.5" width="41" height="41" fill="#f7964e"/><rect x="458.5" y="449.5" width="41" height="41" fill="#fbc572"/><rect x="498.5" y="449.5" width="41" height="41" fill="#fbc16f"/><rect x="538.5" y="449.5" width="41" height="41" fill="#f9af60"/><rect x="578.5" y="449.5" width="41" height="41" fill="#fcd481"/><rect x="618.5" y="449.5" width="41" height="41" fill="#fbc876"/><rect x="658.5" y="449.5" width="41" height="41" fill="#fbc876"/><rect x="698.5" y="449.5" width="41" height="41" fill="#fdea98"/><rect x="738.5" y="449.5" width="41" height="41" fill="#fdf5a9"/><rect x="778.5" y="449.5" width="41" height="41" fill="#fdf5a9"/><rect x="218.5" y="489.5" width="41" height="41" fill="#fcdc88"/><rect x="258.5" y="489.5" width="41" height="41" fill="#fcdc88"/><rect x="298.5" y="489.5" width="41" height="41" fill="#fbc16f"/><rect x="338.5" y="489.5" width="41" height="41" fill="#fbc876"/><rect x="378.5" y="489.5" width="41" height="41" fill="#fcd481"/><rect x="418.5" y="489.5" width="41" height="41" fill="#fcdc88"/><rect x="458.5" y="489.5" width="41" height="41" fill="#fce895"/><rect x="498.5" y="489.5" width="41" height="41" fill="#fce895"/><rect x="538.5" y="489.5" width="41" height="41" fill="#fce895"/><rect x="578.5" y="489.5" width="41" height="41" fill="#fce895"/><rect x="618.5" y="489.5" width="41" height="41" fill="#fab564"/><rect x="658.5" y="489.5" width="41" height="41" fill="#f8a257"/><rect x="698.5" y="489.5" width="41" height="41" fill="#fbc876"/><rect x="738.5" y="489.5" width="41" height="41" fill="#fdec9a"/><rect x="778.5" y="489.5" width="41" height="41" fill="#fdec9a"/><rect x="218.5" y="529.5" width="41" height="41" fill="#fbc876"/><rect x="258.5" y="529.5" width="41" height="41" fill="#fbc876"/><rect x="298.5" y="529.5" width="41" height="41" fill="#fce390"/><rect x="338.5" y="529.5" width="41" height="41" fill="#fdf3a2"/><rect x="378.5" y="529.5" width="41" height="41" fill="#fdf4a6"/><rect x="418.5" y="529.5" width="41" height="41" fill="#fdf3a2"/><rect x="458.5" y="529.5" width="41" height="41" fill="#fdf3a2"/><rect x="498.5" y="529.5" width="41" height="41" fill="#fdf3a2"/><rect x="538.5" y="529.5" width="41" height="41" fill="#fce895"/><rect x="578.5" y="529.5" width="41" height="41" fill="#fce895"/><rect x="618.5" y="529.5" width="41" height="41" fill="#fbc572"/><rect x="658.5" y="529.5" width="41" height="41" fill="#fab262"/><rect x="698.5" y="529.5" width="41" height="41" fill="#fbc876"/><rect x="738.5" y="529.5" width="41" height="41" fill="#fbcc7a"/><rect x="778.5" y="529.5" width="41" height="41" fill="#fbcc7a"/><rect x="218.5" y="569.5" width="41" height="41" fill="#fdf3a2"/><rect x="258.5" y="569.5" width="41" height="41" fill="#fdf3a2"/><rect x="298.5" y="569.5" width="41" height="41" fill="#fcdc88"/><rect x="338.5" y="569.5" width="41" height="41" fill="#fab564"/><rect x="378.5" y="569.5" width="41" height="41" fill="#fdf3a2"/><rect x="418.5" y="569.5" width="41" height="41" fill="#fbc876"/><rect x="458.5" y="569.5" width="41" height="41" fill="#fdf3a2"/><rect x="498.5" y="569.5" width="41" height="41" fill="#fdf3a2"/><rect x="538.5" y="569.5" width="41" height="41" fill="#fcdc88"/><rect x="578.5" y="569.5" width="41" height="41" fill="#fbc876"/><rect x="618.5" y="569.5" width="41" height="41" fill="#fcdc88"/><rect x="658.5" y="569.5" width="41" height="41" fill="#fbc876"/><rect x="698.5" y="569.5" width="41" height="41" fill="#fce895"/><rect x="738.5" y="569.5" width="41" height="41" fill="#fdec9a"/><rect x="778.5" y="569.5" width="41" height="41" fill="#fdec9a"/><rect x="218.5" y="609.5" width="41" height="41" fill="#fdf7af"/><rect x="258.5" y="609.5" width="41" height="41" fill="#fdf7af"/><rect x="298.5" y="609.5" width="41" height="41" fill="#fdf3a2"/><rect x="338.5" y="609.5" width="41" height="41" fill="#fce895"/><rect x="378.5" y="609.5" width="41" height="41" fill="#fdf3a2"/><rect x="418.5" y="609.5" width="41" height="41" fill="#fbc876"/><rect x="458.5" y="609.5" width="41" height="41" fill="#f38245"/><rect x="498.5" y="609.5" width="41" height="41" fill="#fcdc88"/><rect x="538.5" y="609.5" width="41" height="41" fill="#fdea98"/><rect x="578.5" y="609.5" width="41" height="41" fill="#fcdc88"/><rect x="618.5" y="609.5" width="41" height="41" fill="#fce895"/><rect x="658.5" y="609.5" width="41" height="41" fill="#fcdc88"/><rect x="698.5" y="609.5" width="41" height="41" fill="#fcdc88"/><rect x="738.5" y="609.5" width="41" height="41" fill="#fdf4a4"/><rect x="778.5" y="609.5" width="41" height="41" fill="#fdf4a4"/><rect x="218.5" y="649.5" width="41" height="41" fill="#fdfab8"/><rect x="258.5" y="649.5" width="41" height="41" fill="#fdfab8"/><rect x="298.5" y="649.5" width="41" height="41" fill="#fdfab8"/><rect x="338.5" y="649.5" width="41" height="41" fill="#fdf6ad"/><rect x="378.5" y="649.5" width="41" height="41" fill="#fdf3a2"/><rect x="418.5" y="649.5" width="41" height="41" fill="#fcdc88"/><rect x="458.5" y="649.5" width="41" height="41" fill="#f7964e"/><rect x="498.5" y="649.5" width="41" height="41" fill="#fce895"/><rect x="538.5" y="649.5" width="41" height="41" fill="#fdf7af"/><rect x="578.5" y="649.5" width="41" height="41" fill="#fdf4a4"/><rect x="618.5" y="649.5" width="41" height="41" fill="#fdf3a2"/><rect x="658.5" y="649.5" width="41" height="41" fill="#fdf3a2"/><rect x="698.5" y="649.5" width="41" height="41" fill="#fdea98"/><rect x="738.5" y="649.5" width="41" height="41" fill="#fdf4a4"/><rect x="778.5" y="649.5" width="41" height="41" fill="#fdf4a4"/><rect x="218.5" y="689.5" width="41" height="41" fill="#fdfab8"/><rect x="258.5" y="689.5" width="41" height="41" fill="#fdfab8"/><rect x="298.5" y="689.5" width="41" height="41" fill="#fdfab8"/><rect x="338.5" y="689.5" width="41" height="41" fill="#fdf6ad"/><rect x="378.5" y="689.5" width="41" height="41" fill="#fdf3a2"/><rect x="418.5" y="689.5" width="41" height="41" fill="#fcdc88"/><rect x="458.5" y="689.5" width="41" height="41" fill="#f7964e"/><rect x="498.5" y="689.5" width="41" height="41" fill="#fce895"/><rect x="538.5" y="689.5" width="41" height="41" fill="#fdf7af"/><rect x="578.5" y="689.5" width="41" height="41" fill="#fdf4a4"/><rect x="618.5" y="689.5" width="41" height="41" fill="#fdf3a2"/><rect x="658.5" y="689.5" width="41" height="41" fill="#fdf3a2"/><rect x="698.5" y="689.5" width="41" height="41" fill="#fdea98"/><rect x="738.5" y="689.5" width="41" height="41" fill="#fdf4a4"/><rect x="778.5" y="689.5" width="41" height="41" fill="#fdf4a4"/></g><ellipse cx="330.0" cy="395.0" rx="95" ry="20" fill="url(#g_po)" opacity="0.55" transform="rotate(37 330.0 395.0)"/><ellipse cx="290.0" cy="365.0" rx="45" ry="18" fill="url(#g_po)" opacity="0.4" transform="rotate(37 290.0 365.0)"/><ellipse cx="386.0" cy="391.0" rx="16" ry="14" fill="url(#g_g1)" opacity="1.0"/><ellipse cx="378.0" cy="406.0" rx="9" ry="7" fill="url(#g_o2)" opacity="0.8"/><ellipse cx="420.0" cy="422.0" rx="30" ry="24" fill="url(#g_o2)" opacity="1.0"/><ellipse cx="420.0" cy="422.0" rx="10" ry="8" fill="url(#g_o3)" opacity="0.6"/><ellipse cx="458.0" cy="350.0" rx="24" ry="18" fill="url(#g_y2)" opacity="0.9"/><ellipse cx="418.0" cy="478.0" rx="34" ry="22" fill="url(#g_o2)" opacity="0.95" transform="rotate(-20 418.0 478.0)"/><ellipse cx="425.0" cy="474.0" rx="16" ry="10" fill="url(#g_o3)" opacity="0.6" transform="rotate(-20 425.0 474.0)"/><ellipse cx="378.0" cy="477.0" rx="10" ry="9" fill="url(#g_o2)" opacity="0.9"/><ellipse cx="395.0" cy="520.0" rx="14" ry="11" fill="url(#g_o2)" opacity="0.8"/><ellipse cx="312.0" cy="500.0" rx="30" ry="20" fill="url(#g_o1)" opacity="0.7"/><ellipse cx="276.0" cy="536.0" rx="16" ry="16" fill="url(#g_o2)" opacity="0.7"/><ellipse cx="307.0" cy="590.0" rx="22" ry="18" fill="url(#g_po)" opacity="0.6"/><ellipse cx="530.0" cy="298.0" rx="30" ry="18" fill="url(#g_o2)" opacity="0.6"/><ellipse cx="561.0" cy="322.0" rx="28" ry="26" fill="url(#g_o2)" opacity="0.5"/><ellipse cx="541.0" cy="443.0" rx="32" ry="30" fill="url(#g_o2)" opacity="0.7"/><ellipse cx="565.0" cy="380.0" rx="34" ry="36" fill="url(#g_o2)" opacity="0.35"/><ellipse cx="500.0" cy="410.0" rx="24" ry="30" fill="url(#g_o2)" opacity="0.35"/><ellipse cx="612.0" cy="333.0" rx="20" ry="9" fill="url(#g_g1)" opacity="0.9" transform="rotate(-5 612.0 333.0)"/><ellipse cx="600.5" cy="330.5" rx="8" ry="6.5" fill="url(#g_g3)" opacity="1.0"/><ellipse cx="603.8" cy="342.8" rx="4.5" ry="8" fill="url(#g_r2)" opacity="1.0" transform="rotate(28 603.8 342.8)"/><ellipse cx="603.8" cy="342.8" rx="2.5" ry="5" fill="url(#g_r2)" opacity="0.9" transform="rotate(28 603.8 342.8)"/><ellipse cx="602.5" cy="345.0" rx="10" ry="13" fill="url(#g_o3)" opacity="0.75" transform="rotate(28 602.5 345.0)"/><ellipse cx="683.0" cy="364.0" rx="34" ry="26" fill="url(#g_y2)" opacity="0.8"/><ellipse cx="634.0" cy="341.0" rx="26" ry="11" fill="url(#g_g1)" opacity="0.95"/><ellipse cx="668.0" cy="352.0" rx="30" ry="18" fill="url(#g_g1)" opacity="0.4"/><ellipse cx="707.0" cy="379.0" rx="12" ry="10" fill="url(#g_po)" opacity="0.8"/><ellipse cx="651.0" cy="442.0" rx="30" ry="26" fill="url(#g_o2)" opacity="0.95"/><ellipse cx="636.0" cy="478.0" rx="20" ry="16" fill="url(#g_o2)" opacity="0.6"/><ellipse cx="704.0" cy="378.0" rx="10" ry="9" fill="url(#g_o1)" opacity="0.7"/><ellipse cx="750.0" cy="320.0" rx="50" ry="36" fill="url(#g_y1)" opacity="0.6"/><ellipse cx="765.0" cy="470.0" rx="22" ry="40" fill="url(#g_y1)" opacity="0.6"/><ellipse cx="370.0" cy="549.0" rx="32" ry="36" fill="url(#g_g1)" opacity="1.0"/><ellipse cx="370.0" cy="549.0" rx="14" ry="16" fill="url(#g_g2)" opacity="0.35"/><ellipse cx="386.0" cy="591.0" rx="36" ry="15" fill="url(#g_g1)" opacity="1.0" transform="rotate(5 386.0 591.0)"/><ellipse cx="405.0" cy="598.0" rx="22" ry="12" fill="url(#g_g1)" opacity="0.9" transform="rotate(20 405.0 598.0)"/><ellipse cx="428.0" cy="537.0" rx="18" ry="23" fill="url(#g_g1)" opacity="0.95"/><ellipse cx="352.0" cy="520.0" rx="10" ry="10" fill="url(#g_g1)" opacity="0.5"/><ellipse cx="405.5" cy="571.0" rx="14" ry="12" fill="url(#g_o3)" opacity="1.0"/><ellipse cx="405.5" cy="571.0" rx="6" ry="6" fill="url(#g_r1)" opacity="0.6"/><ellipse cx="347.0" cy="601.0" rx="18" ry="10" fill="url(#g_o3)" opacity="1.0" transform="rotate(40 347.0 601.0)"/><ellipse cx="351.0" cy="606.0" rx="7" ry="5" fill="url(#g_r1)" opacity="0.9" transform="rotate(40 351.0 606.0)"/><ellipse cx="460.0" cy="640.0" rx="36" ry="40" fill="url(#g_o3)" opacity="1.0"/><ellipse cx="462.0" cy="634.0" rx="17" ry="26" fill="url(#g_r1)" opacity="0.7"/><ellipse cx="438.0" cy="602.0" rx="20" ry="14" fill="url(#g_o2)" opacity="0.7"/><ellipse cx="482.0" cy="610.0" rx="25" ry="20" fill="url(#g_g1)" opacity="1.0" transform="rotate(-25 482.0 610.0)"/><ellipse cx="484.0" cy="611.0" rx="13" ry="10" fill="url(#g_g2)" opacity="0.85" transform="rotate(-25 484.0 611.0)"/><ellipse cx="272.0" cy="645.0" rx="34" ry="44" fill="url(#g_y1)" opacity="0.9"/><ellipse cx="500.0" cy="505.0" rx="30" ry="16" fill="url(#g_o1)" opacity="0.5"/><ellipse cx="560.0" cy="655.0" rx="40" ry="26" fill="url(#g_y1)" opacity="0.8"/><ellipse cx="660.0" cy="517.0" rx="38" ry="32" fill="url(#g_o2)" opacity="0.8"/><ellipse cx="672.0" cy="537.0" rx="28" ry="20" fill="url(#g_o2)" opacity="0.6" transform="rotate(20 672.0 537.0)"/><ellipse cx="640.0" cy="500.0" rx="20" ry="16" fill="url(#g_o3)" opacity="0.35"/><ellipse cx="547.0" cy="488.0" rx="26" ry="16" fill="url(#g_o1)" opacity="0.6"/><ellipse cx="750.0" cy="556.0" rx="26" ry="12" fill="url(#g_o2)" opacity="0.8" transform="rotate(10 750.0 556.0)"/><ellipse cx="725.0" cy="565.0" rx="16" ry="10" fill="url(#g_o1)" opacity="0.6"/><ellipse cx="658.0" cy="580.0" rx="10" ry="9" fill="url(#g_o2)" opacity="0.8"/><ellipse cx="559.0" cy="587.0" rx="24" ry="20" fill="url(#g_po)" opacity="0.7"/><ellipse cx="584.0" cy="628.0" rx="20" ry="16" fill="url(#g_po)" opacity="0.6"/><ellipse cx="663.0" cy="613.0" rx="16" ry="12" fill="url(#g_po)" opacity="0.7"/><ellipse cx="690.0" cy="640.0" rx="30" ry="22" fill="url(#g_po)" opacity="0.6"/><ellipse cx="600.0" cy="545.0" rx="20" ry="14" fill="url(#g_po)" opacity="0.5"/><ellipse cx="520.0" cy="560.0" rx="14" ry="30" fill="url(#g_y1)" opacity="0.5"/><path d="M494.3 353.1L493.7 387.1M500.1 353.2L499.5 387.2M505.9 353.3L505.3 387.3M511.7 353.4L511.1 387.4M517.5 353.5L516.9 387.5M523.3 353.6L522.7 387.6M529.1 353.7L528.5 387.7M534.9 353.8L534.3 387.8M540.7 353.9L540.1 387.9M546.5 354.0L545.9 388.0M552.3 354.1L551.7 388.1M558.1 354.2L557.5 388.2M563.9 354.3L563.3 388.3M569.7 354.4L569.1 388.4M575.5 354.5L574.9 388.5M581.3 354.6L580.7 388.6M587.1 354.7L586.5 388.7M592.9 354.8L592.3 388.8M494.3 353.1L598.3 354.9M494.2 358.9L598.2 360.7M494.1 364.7L598.1 366.5M494.0 370.5L598.0 372.3M493.9 376.3L597.9 378.1M493.8 382.1L597.8 383.9M494.2 353.8L493.8 373.8M500.0 353.9L499.6 373.9M505.8 354.0L505.4 374.0M511.6 354.1L511.2 374.1M494.2 353.8L516.2 354.2M494.1 359.6L516.1 360.0M494.0 365.4L516.0 365.8M493.9 371.2L515.9 371.6M341.2 580.5L290.3 612.3M344.6 586.0L293.7 617.8M348.1 591.5L297.2 623.3M351.5 597.0L300.6 628.8M355.0 602.5L304.1 634.3M358.4 608.0L307.5 639.8M361.9 613.6L311.0 645.4M365.3 619.1L314.4 650.9M368.7 624.6L317.9 656.4M372.2 630.1L321.3 661.9M375.6 635.6L324.7 667.4M379.1 641.1L328.2 672.9M382.5 646.6L331.6 678.4M341.2 580.5L385.7 651.7M335.7 583.9L380.2 655.2M330.2 587.4L374.7 658.6M324.6 590.8L369.2 662.1M319.1 594.3L363.6 665.5M313.6 597.7L358.1 668.9M308.1 601.2L352.6 672.4M302.6 604.6L347.1 675.8M297.1 608.0L341.6 679.3M291.6 611.5L336.1 682.7M330.9 324.3L318.8 337.7M334.6 327.6L322.5 341.0M338.3 331.0L326.3 344.3M342.0 334.3L330.0 347.7M345.7 337.7L333.7 351.0M349.5 341.0L337.4 354.4M353.2 344.3L341.1 357.7M330.9 324.3L353.2 344.3M327.5 328.0L349.8 348.1M324.2 331.7L346.5 351.8M320.8 335.4L343.1 355.5" fill="none" stroke="#bcbcb6" stroke-width="0.55" opacity="0.7"/><path d="M320.0 326.7L329.0 335.7L342.2 343.1L350.4 349.7L355.4 357.1L367.7 379.3L368.5 388.4L375.9 391.7L382.5 401.5M366.9 302.8L374.3 320.9L380.9 327.5L397.3 332.4L403.9 339.8L424.5 343.9M377.6 303.6L385.0 317.6L374.3 320.9L362.8 339.8L355.4 357.1M388.3 300.3L385.0 317.6L373.5 340.7M337.3 339.0L360.3 317.6L370.2 292.9M301.1 332.4L309.3 325.8L334.0 348.9L327.4 360.4L320.8 353.8L304.4 337.4L301.1 332.4M304.4 327.5L337.3 357.1L347.1 353.8M347.1 363.7L360.3 373.6L380.0 380.1M327.4 386.7L343.8 373.6L347.1 363.7L357.0 343.9M276.4 362.0L309.3 393.3L319.2 396.6M340.6 403.2L357.0 394.9L360.3 413.0L342.2 409.8L340.6 403.2M394.9 364.5L402.3 357.9L419.5 345.6M387.4 379.3L400.6 383.4L410.5 386.7L404.7 400.7M410.5 386.7L417.9 373.6L423.6 363.7L427.8 353.8L424.5 343.9M383.3 401.5L394.9 386.7L400.6 383.4M259.9 403.2L268.2 408.9L281.3 420.0M261.6 393.3L271.5 403.2L287.9 413.0M367.2 302.8L371.4 291.7M367.2 302.8L357.9 309.1M367.2 302.8L371.4 307.9M377.8 303.8L376.9 308.2M377.8 303.8L388.5 300.5M377.8 303.8L371.4 291.7M376.9 308.2L384.5 317.1M376.9 308.2L374.1 320.8M376.9 308.2L371.4 307.9M388.5 300.5L388.1 293.1M388.5 300.5L398.3 299.2M388.5 300.5L390.8 311.9M384.5 317.1L374.1 320.8M384.5 317.1L381.1 327.7M384.5 317.1L390.8 311.9M384.5 317.1L391.7 328.2M374.1 320.8L381.1 327.7M374.1 320.8L367.6 316.1M374.1 320.8L365.3 330.3M381.1 327.7L373.6 340.8M381.1 327.7L365.3 330.3M381.1 327.7L391.7 328.2M381.1 327.7L386.2 340.9M397.6 332.4L403.5 339.8M397.6 332.4L399.3 318.4M397.6 332.4L391.7 328.2M397.6 332.4L386.2 340.9M397.6 332.4L409.4 326.1M403.5 339.8L409.4 326.1M403.5 339.8L414.2 343.6M363.5 339.5L353.4 329.9M363.5 339.5L365.3 330.3M363.5 339.5L359.5 353.6M373.6 340.8L365.3 330.3M373.6 340.8L368.7 344.7M373.6 340.8L383.2 345.1M342.1 343.0L350.0 348.9M342.1 343.0L328.5 335.3M342.1 343.0L337.4 331.1M342.1 343.0L353.4 329.9M342.1 343.0L336.5 348.3M342.1 343.0L345.2 353.4M350.0 348.9L353.4 329.9M350.0 348.9L345.2 353.4M350.0 348.9L359.5 353.6M355.6 357.3L345.2 353.4M355.6 357.3L359.5 353.6M355.6 357.3L352.2 361.3M355.6 357.3L360.8 366.4M328.5 335.3L330.4 323.5M328.5 335.3L316.1 342.3M328.5 335.3L337.4 331.1M328.5 335.3L322.3 348.0M328.5 335.3L336.5 348.3M320.6 326.7L314.6 326.9M320.6 326.7L330.4 323.5M320.6 326.7L323.3 331.4M424.7 291.2L415.2 295.1M424.7 291.2L433.1 293.1M424.7 291.2L425.1 305.4M431.9 304.3L433.1 293.1M431.9 304.3L425.1 305.4M431.9 304.3L444.6 299.4M450.4 304.3L440.0 322.0M450.4 304.3L444.6 299.4M450.4 304.3L477.9 324.2M473.6 294.1L484.2 302.0M473.6 294.1L489.1 282.7M484.2 302.0L489.1 282.7M484.2 302.0L482.6 314.7M484.2 302.0L496.4 287.4M484.2 302.0L508.1 299.3M440.0 322.0L452.9 334.9M440.0 322.0L430.9 320.9M452.9 334.9L444.1 347.2M452.9 334.9L477.9 324.2M452.9 334.9L473.7 350.6M424.7 344.2L421.7 334.1M424.7 344.2L414.2 343.6M424.7 344.2L432.5 342.5M424.7 344.2L425.8 350.3M402.0 357.6L395.1 364.5M402.0 357.6L395.6 347.4M402.0 357.6L414.2 343.6M402.0 357.6L391.8 354.1M402.0 357.6L411.1 368.2M395.1 364.5L386.2 364.1M395.1 364.5L393.9 369.6M395.1 364.5L411.1 368.2M423.7 364.0L417.8 373.1M423.7 364.0L425.8 350.3M423.7 364.0L418.5 362.2M423.7 364.0L433.9 358.9M423.7 364.0L427.5 368.5M417.8 373.1L410.7 386.2M417.8 373.1L418.5 362.2M417.8 373.1L427.5 368.5M417.8 373.1L411.1 368.2M417.8 373.1L427.3 377.6M417.8 373.1L421.3 389.1M367.7 379.8L367.5 387.9M367.7 379.8L364.2 375.6M367.7 379.8L355.8 383.2M367.7 379.8L378.1 370.8M367.7 379.8L380.2 386.4M387.2 379.3L400.3 383.5M387.2 379.3L378.1 370.8M387.2 379.3L393.9 369.6M387.2 379.3L380.2 386.4M400.3 383.5L402.6 374.7M400.3 383.5L389.4 394.1M400.3 383.5L405.7 389.1M410.7 386.2L405.7 389.1M410.7 386.2L421.3 389.1M410.7 386.2L413.6 399.1M367.5 387.9L375.4 391.4M367.5 387.9L355.8 383.2M367.5 387.9L360.0 398.6M375.4 391.4L380.2 386.4M384.0 400.5L389.4 394.1M384.0 400.5L376.9 412.0M384.0 400.5L394.2 409.0M362.8 403.2L360.0 398.6M362.8 403.2L353.2 409.3M362.8 403.2L371.1 405.1M404.5 400.5L405.7 389.1M404.5 400.5L399.6 398.1M404.5 400.5L413.6 399.1M404.5 400.5L409.1 405.2M435.8 397.3L431.9 393.2M435.8 397.3L425.2 403.9M435.8 397.3L447.2 390.1M435.8 397.3L434.0 409.2M435.8 397.3L448.2 405.6M489.4 361.0L473.7 350.6M489.4 361.0L496.6 340.0M489.4 361.0L485.3 369.7M489.4 361.0L495.1 368.4M489.4 361.0L505.9 349.9M518.3 358.1L530.0 355.8M518.3 358.1L508.7 358.7M518.3 358.1L517.6 368.9M518.3 358.1L526.7 369.3M500.7 404.7L506.2 407.7M500.7 404.7L494.1 420.2M500.7 404.7L485.3 406.6M500.7 404.7L497.0 397.5M500.7 404.7L505.7 398.8M506.2 407.7L512.8 415.1M506.2 407.7L505.7 398.8M506.2 407.7L515.1 407.5M512.8 415.1L504.4 418.4M512.8 415.1L515.1 407.5M512.8 415.1L524.3 421.0M494.1 420.2L485.4 419.2M494.1 420.2L504.4 418.4M494.1 420.2L487.0 426.3M501.5 426.2L496.1 433.6M501.5 426.2L501.2 434.8M501.5 426.2L504.4 418.4M501.5 426.2L506.5 431.5M496.1 433.6L501.2 434.8M496.1 433.6L487.0 426.3M496.1 433.6L493.2 441.2M501.2 434.8L506.5 431.5M501.2 434.8L504.0 442.5M466.2 424.4L475.6 416.3M466.2 424.4L459.9 431.7M466.2 424.4L457.5 415.1M466.2 424.4L451.6 421.5M466.2 424.4L476.5 425.4M416.8 426.9L408.0 434.1M416.8 426.9L412.8 420.4M416.8 426.9L427.6 420.3M416.8 426.9L414.4 437.5M408.0 434.1L406.6 441.4M408.0 434.1L398.2 424.4M408.0 434.1L400.7 438.9M408.0 434.1L414.4 437.5M443.0 436.5L450.9 448.1M443.0 436.5L437.4 439.6M443.0 436.5L444.3 451.0M443.0 436.5L450.0 435.1M443.0 436.5L434.6 426.9M429.7 445.9L420.3 447.6M429.7 445.9L433.9 452.0M429.7 445.9L437.4 439.6M450.9 448.1L444.3 451.0M450.9 448.1L450.0 435.1M450.9 448.1L456.2 454.3M450.9 448.1L462.3 440.7M476.6 454.1L481.0 465.9M476.6 454.1L473.6 468.4M476.6 454.1L465.2 450.5M476.6 454.1L468.0 446.2M476.6 454.1L479.3 446.5M476.6 454.1L488.0 459.6M481.0 465.9L473.6 468.4M481.0 465.9L488.0 459.6M481.0 465.9L487.2 472.2M473.6 468.4L459.8 464.8M445.0 468.1L436.2 463.6M445.0 468.1L445.3 460.8M445.0 468.1L450.2 468.6M462.7 480.0L450.2 468.6M462.7 480.0L459.8 464.8M462.7 480.0L467.7 484.2M371.7 416.5L373.9 428.4M371.7 416.5L364.9 414.3M371.7 416.5L376.9 412.0M373.9 428.4L382.3 427.2M373.9 428.4L376.4 434.8M369.5 430.4L356.4 422.3M369.5 430.4L376.4 434.8M267.8 408.6L267.5 402.4M267.8 408.6L261.4 409.3M267.8 408.6L273.5 407.0M267.8 408.6L269.6 414.8M273.4 423.9L268.3 430.4M273.4 423.9L265.9 421.4M273.4 423.9L275.8 418.0M273.4 423.9L285.7 424.2M273.4 423.9L281.3 433.8M268.3 430.4L267.0 435.3M268.3 430.4L258.4 428.8M267.0 435.3L258.4 428.8M267.0 435.3L262.2 442.4M286.5 433.3L294.7 427.2M286.5 433.3L298.6 433.6M286.5 433.3L285.7 424.2M286.5 433.3L281.3 433.8M286.5 433.3L286.5 439.5M294.7 427.2L298.6 433.6M294.7 427.2L289.0 418.7M294.7 427.2L285.7 424.2M294.7 427.2L306.0 427.8M298.6 433.6L307.3 437.8M298.6 433.6L286.5 439.5M298.6 433.6L306.0 427.8M298.6 433.6L296.6 444.7M307.3 437.8L306.0 427.8M307.3 437.8L296.6 444.7M307.3 437.8L315.3 431.6M307.3 437.8L303.5 450.3M307.3 437.8L315.6 445.2M268.8 446.7L274.3 439.1M268.8 446.7L263.6 455.3M268.8 446.7L276.4 452.8M292.7 454.8L290.1 449.8M292.7 454.8L303.5 450.3M292.7 454.8L293.2 463.5M292.7 454.8L304.9 462.0M268.5 465.4L263.6 455.3M268.5 465.4L258.9 464.8M268.5 465.4L276.4 452.8M268.5 465.4L279.3 467.5M268.5 465.4L273.6 473.5M294.7 474.8L287.9 470.7M294.7 474.8L298.2 468.5M294.7 474.8L306.8 475.3M294.7 474.8L302.7 482.7M330.5 458.3L344.0 463.2M330.5 458.3L342.8 465.9M330.5 458.3L323.8 452.0M330.5 458.3L319.0 461.6M330.5 458.3L338.1 449.3M330.5 458.3L327.6 465.2M344.0 463.2L342.8 465.9M344.0 463.2L344.7 453.8M342.8 465.9L336.1 469.6M342.8 465.9L348.9 469.7M342.8 465.9L341.8 474.4M333.2 477.8L336.1 469.6M333.2 477.8L341.8 474.4M333.2 477.8L334.8 484.1M261.4 481.7L268.0 480.7M261.4 481.7L252.2 472.3M261.4 481.7L253.0 484.6M261.4 481.7L261.3 489.1M273.7 480.2L273.6 473.5M273.7 480.2L280.6 481.1M273.7 480.2L275.1 487.7M590.7 291.2L574.0 297.9M590.7 291.2L601.1 295.7M606.5 289.4L601.1 295.7M606.5 289.4L613.7 285.9M637.3 304.0L637.3 313.9M637.3 304.0L632.9 298.9M637.3 304.0L631.8 307.3M637.3 304.0L644.9 309.3M637.3 313.9L631.8 307.3M637.3 313.9L630.8 318.5M637.3 313.9L644.9 309.3M637.3 321.3L651.4 324.7M637.3 321.3L628.5 331.2M637.3 321.3L630.8 318.5M637.3 321.3L643.6 330.8M651.4 324.7L643.6 330.8M651.4 324.7L653.7 311.8M651.4 324.7L653.7 334.2M651.4 324.7L666.4 324.1M628.5 331.2L620.3 342.3M628.5 331.2L619.4 331.5M628.5 331.2L630.8 318.5M628.5 331.2L631.0 342.8M628.5 331.2L643.6 330.8M620.3 342.3L609.4 339.4M620.3 342.3L619.4 331.5M620.3 342.3L617.3 351.1M620.3 342.3L631.0 342.8M620.3 342.3L627.4 352.5M612.7 346.7L609.2 351.6M612.7 346.7L609.4 339.4M612.7 346.7L617.3 351.1M609.2 351.6L585.8 350.8M609.2 351.6L606.6 360.9M599.8 325.7L603.8 337.8M599.8 325.7L572.2 324.2M599.8 325.7L600.1 308.0M599.8 325.7L609.5 308.6M599.8 325.7L608.4 327.3M603.8 337.8L608.4 327.3M603.8 337.8L609.4 339.4M572.2 324.2L562.8 329.4M572.2 324.2L574.0 297.9M572.2 324.2L600.1 308.0M562.8 329.4L545.6 307.0M562.8 329.4L540.9 332.7M562.8 329.4L567.1 338.8M530.0 355.8L529.1 348.5M530.0 355.8L526.7 369.3M530.0 355.8L538.8 349.7M530.0 355.8L536.1 360.9M541.6 386.9L537.6 378.1M541.6 386.9L547.1 380.8M541.6 386.9L547.5 391.9M547.0 397.5L554.4 395.3M547.0 397.5L534.6 399.7M547.0 397.5L547.5 391.9M547.0 397.5L546.7 410.3M554.4 395.3L547.5 391.9M554.4 395.3L553.8 402.6M554.4 395.3L565.3 389.6M554.4 395.3L565.9 400.6M575.4 392.6L565.3 389.6M575.4 392.6L565.9 400.6M575.4 392.6L576.5 382.6M575.4 392.6L575.5 401.7M594.4 388.7L587.0 389.9M594.4 388.7L605.8 393.9M594.4 388.7L598.6 404.2M594.4 388.7L593.6 371.0M594.4 388.7L603.1 383.1M614.6 386.9L618.6 372.6M614.6 386.9L605.8 393.9M614.6 386.9L614.0 400.6M614.6 386.9L627.5 396.3M614.6 386.9L603.1 383.1M588.0 402.5L579.8 410.1M588.0 402.5L575.5 401.7M588.0 402.5L587.0 389.9M588.0 402.5L586.8 413.3M588.0 402.5L598.6 404.2M588.0 402.5L594.9 411.9M579.8 410.1L575.5 401.7M579.8 410.1L574.7 410.0M579.8 410.1L586.8 413.3M566.8 437.3L566.5 430.1M566.8 437.3L573.6 432.3M566.8 437.3L560.3 446.7M584.8 451.6L577.3 442.9M584.8 451.6L589.0 447.7M584.8 451.6L582.0 455.9M584.8 451.6L591.3 460.0M614.1 434.3L613.3 424.3M614.1 434.3L622.8 427.8M614.1 434.3L615.7 439.6M573.4 465.2L573.4 467.9M573.4 465.2L568.3 459.2M573.4 465.2L579.7 461.6M573.4 467.9L576.4 473.6M573.4 467.9L566.1 472.6M576.4 473.6L587.1 470.3M576.4 473.6L566.1 472.6M576.4 473.6L582.6 486.1M633.4 483.2L633.3 470.9M633.4 483.2L627.6 481.3M633.4 483.2L643.5 479.7M633.4 483.2L635.6 488.2M614.6 368.9L618.6 372.6M614.6 368.9L606.6 360.9M614.6 368.9L603.3 373.5M614.6 368.9L618.2 363.0M618.6 372.6L629.1 363.7M640.8 357.3L631.0 342.8M640.8 357.3L627.4 352.5M640.8 357.3L639.8 341.7M640.8 357.3L650.3 353.4M640.8 357.3L649.1 363.9M641.8 371.4L638.6 380.3M641.8 371.4L628.6 373.8M641.8 371.4L638.4 365.6M641.8 371.4L649.1 363.9M641.8 371.4L647.4 378.4M638.6 380.3L637.3 388.7M638.6 380.3L647.5 385.6M638.6 380.3L628.6 373.8M638.6 380.3L647.4 378.4M637.3 388.7L627.5 396.3M637.3 388.7L644.5 392.0M637.3 388.7L637.8 401.3M649.9 390.1L647.5 385.6M649.9 390.1L644.5 392.0M649.9 390.1L656.6 387.4M649.9 390.1L651.5 399.0M653.6 381.0L661.4 375.7M653.6 381.0L659.0 384.9M653.6 381.0L647.5 385.6M653.6 381.0L656.6 387.4M653.6 381.0L647.4 378.4M654.6 433.8L659.6 423.2M654.6 433.8L650.0 420.5M654.6 433.8L646.2 431.8M654.6 433.8L650.3 446.7M654.6 433.8L667.3 433.1M654.6 433.8L664.8 442.4M659.6 423.2L668.2 424.2M659.6 423.2L656.6 414.4M659.6 423.2L650.0 420.5M659.6 423.2L666.3 416.4M668.2 424.2L683.7 431.1M668.2 424.2L667.3 433.1M683.7 431.1L689.9 420.0M683.7 431.1L678.0 437.4M683.7 431.1L691.6 432.7M683.7 431.1L686.5 441.0M667.0 453.8L657.3 449.7M667.0 453.8L671.2 445.8M667.0 453.8L662.6 463.1M667.0 453.8L677.9 462.1M696.1 448.4L698.6 443.0M696.1 448.4L686.5 441.0M696.1 448.4L683.4 450.9M696.1 448.4L692.0 455.8M696.1 448.4L704.5 455.2M698.6 443.0L691.6 432.7M698.6 443.0L686.5 441.0M698.6 443.0L707.1 429.2M698.6 443.0L710.2 443.6M691.9 461.0L692.0 455.8M691.9 461.0L686.1 465.7M691.9 461.0L699.2 462.2M691.9 461.0L693.3 473.3M709.4 457.0L710.2 443.6M709.4 457.0L704.5 455.2M709.4 457.0L714.3 458.4M709.4 457.0L709.0 467.0M722.5 459.0L718.2 451.3M722.5 459.0L714.3 458.4M722.5 459.0L729.7 454.7M722.5 459.0L723.6 465.1M737.8 462.0L732.4 470.6M737.8 462.0L742.1 468.4M737.8 462.0L734.7 450.3M737.8 462.0L744.6 450.9M737.8 462.0L729.7 454.7M755.3 459.7L752.4 468.7M755.3 459.7L763.0 465.4M755.3 459.7L744.6 450.9M755.3 459.7L757.1 452.7M758.0 443.7L739.2 437.4M758.0 443.7L744.6 450.9M758.0 443.7L759.5 432.9M758.0 443.7L757.1 452.7M758.0 443.7L769.0 441.8M732.6 440.0L726.4 436.5M743.7 477.0L732.4 470.6M743.7 477.0L728.6 479.5M743.7 477.0L742.1 468.4M743.7 477.0L737.4 486.2M743.7 477.0L752.4 468.7M743.7 477.0L745.3 486.1M743.7 477.0L759.2 482.4M754.6 427.9L746.4 416.5M754.6 427.9L747.9 430.4M754.6 427.9L759.5 432.9M746.4 416.5L738.5 418.5M746.4 416.5L751.2 410.2M746.4 416.5L747.9 430.4M736.3 412.3L747.9 400.5M736.3 412.3L721.1 413.8M736.3 412.3L738.5 418.5M747.9 400.5L745.9 387.7M747.9 400.5L754.3 397.0M747.9 400.5L751.2 410.2M745.9 387.7L745.6 376.7M745.9 387.7L754.2 388.9M712.9 413.8L710.6 416.5M712.9 413.8L710.8 403.3M712.9 413.8L720.0 403.8M712.9 413.8L721.1 413.8M710.6 416.5L699.5 413.0M710.6 416.5L707.4 422.5M710.6 416.5L718.1 426.0M720.3 395.1L708.4 397.3M720.3 395.1L726.0 384.7M720.3 395.1L710.5 391.1M720.3 395.1L720.0 403.8M708.4 397.3L701.3 388.7M708.4 397.3L698.6 400.7M708.4 397.3L710.8 403.3M693.4 396.1L701.3 388.7M693.4 396.1L679.3 388.2M693.4 396.1L693.3 380.6M693.4 396.1L689.8 401.5M693.4 396.1L698.6 400.7M701.3 388.7L698.6 400.7M701.3 388.7L710.5 391.1M679.3 388.2L671.2 387.9M679.3 388.2L677.7 397.4M679.3 388.2L693.3 380.6M695.6 375.8L699.0 372.9M695.6 375.8L693.2 368.7M695.6 375.8L693.3 380.6M699.0 372.9L699.3 365.0M699.0 372.9L707.4 366.7M699.0 372.9L693.2 368.7M699.0 372.9L714.7 380.9M699.3 365.0L707.4 366.7M699.3 365.0L697.4 359.0M699.3 365.0L693.2 368.7M707.4 366.7L708.6 348.8M707.4 366.7L716.1 362.3M681.0 354.4L679.3 357.3M681.0 354.4L683.0 357.8M681.0 354.4L676.7 344.2M681.0 354.4L685.1 347.5M679.3 357.3L683.0 357.8M679.3 357.3L665.4 352.7M683.0 357.8L697.4 359.0M683.0 357.8L693.2 368.7M669.4 346.0L665.4 352.7M669.4 346.0L676.7 344.2M669.4 346.0L653.4 344.0M669.4 346.0L663.8 334.9M670.7 328.7L678.1 326.0M670.7 328.7L678.8 334.3M670.7 328.7L666.4 324.1M670.7 328.7L663.8 334.9M683.3 323.3L679.8 313.2M683.3 323.3L678.1 326.0M683.3 323.3L688.5 326.2M694.9 318.8L703.7 315.9M694.9 318.8L679.8 313.2M694.9 318.8L690.9 306.9M694.9 318.8L688.5 326.2M694.9 318.8L698.6 327.5M703.7 315.9L698.6 327.5M703.7 315.9L711.7 328.3M703.7 315.9L702.6 305.0M705.7 299.1L697.9 293.3M705.7 299.1L702.6 305.0M705.7 299.1L710.8 291.7M705.7 299.1L710.7 302.1M714.1 312.4L702.6 305.0M714.1 312.4L710.7 302.1M714.1 312.4L715.8 325.7M726.9 306.7L742.0 311.9M726.9 306.7L724.5 301.8M726.9 306.7L724.1 311.7M726.9 306.7L735.8 297.7M742.0 311.9L735.8 297.7M742.0 311.9L738.5 322.2M742.0 311.9L748.2 308.5M742.0 311.9L749.6 318.9M746.2 300.1L735.8 297.7M746.2 300.1L742.3 285.5M746.2 300.1L748.2 308.5M746.2 300.1L756.4 293.6M766.7 295.4L771.6 306.7M766.7 295.4L756.4 293.6M766.7 295.4L761.0 307.8M766.7 295.4L767.0 283.8M766.7 295.4L779.4 291.2M760.7 316.3L764.2 325.2M760.7 316.3L748.2 308.5M760.7 316.3L749.6 318.9M760.7 316.3L752.2 329.7M760.7 316.3L761.0 307.8M760.7 316.3L773.6 317.6M764.2 325.2L752.2 329.7M764.2 325.2L764.4 339.9M764.2 325.2L773.6 317.6M764.2 325.2L772.8 326.3M757.5 346.5L744.2 345.0M757.5 346.5L752.2 329.7M757.5 346.5L756.8 355.0M757.5 346.5L764.4 339.9M736.6 342.3L729.7 348.4M736.6 342.3L731.4 335.3M736.6 342.3L742.5 334.5M736.6 342.3L744.2 345.0M729.7 348.4L718.9 342.5M729.7 348.4L718.9 351.4M729.7 348.4L726.5 362.0M729.7 348.4L740.2 355.7M731.4 335.3L730.1 328.7M731.4 335.3L718.9 342.5M731.4 335.3L742.5 334.5M730.1 328.7L731.4 326.5M730.1 328.7L725.7 325.2M731.4 326.5L731.4 322.0M731.4 326.5L725.7 325.2M731.4 326.5L738.5 322.2M731.4 326.5L742.5 334.5M731.4 322.0L724.1 311.7M731.4 322.0L725.7 325.2M731.4 322.0L738.5 322.2M728.7 374.6L726.9 379.8M728.7 374.6L726.5 362.0M728.7 374.6L735.9 374.1M726.9 379.8L726.0 384.7M726.9 379.8L714.7 380.9M726.0 384.7L714.7 380.9M726.0 384.7L734.6 384.0M705.0 334.4L698.6 327.5M705.0 334.4L698.8 335.9M705.0 334.4L711.7 328.3M705.0 334.4L707.5 339.1M771.6 306.7L761.0 307.8M771.6 306.7L773.6 317.6M771.6 306.7L782.9 301.2M771.6 306.7L784.0 313.2M363.8 486.2L364.3 493.1M363.8 486.2L358.4 485.2M363.8 486.2L367.1 480.5M363.8 486.2L372.5 490.8M364.3 493.1L356.2 499.3M364.3 493.1L370.6 501.8M364.3 493.1L372.5 490.8M327.2 497.3L318.0 493.2M327.2 497.3L331.8 490.3M327.2 497.3L320.5 507.0M327.2 497.3L337.3 496.7M335.1 503.0L320.5 507.0M335.1 503.0L337.3 496.7M335.1 503.0L339.7 509.9M347.0 506.4L339.7 509.9M347.0 506.4L344.4 495.9M347.0 506.4L350.9 510.9M347.0 506.4L356.2 499.3M287.0 508.9L278.9 501.0M287.0 508.9L273.1 509.0M287.0 508.9L290.3 499.7M287.0 508.9L294.2 512.9M287.0 508.9L279.9 519.9M325.5 516.0L320.5 507.0M325.5 516.0L313.9 514.3M325.5 516.0L316.2 521.0M325.5 516.0L331.1 515.5M267.8 519.0L261.3 512.9M267.8 519.0L273.1 509.0M267.8 519.0L258.8 521.3M267.8 519.0L266.7 525.7M267.8 519.0L279.9 519.9M376.4 512.1L365.1 516.9M376.4 512.1L370.4 526.6M376.4 512.1L370.6 501.8M376.4 512.1L382.2 505.0M376.4 512.1L389.7 513.3M383.5 519.5L370.4 526.6M383.5 519.5L389.7 513.3M386.0 526.2L395.4 525.4M386.0 526.2L370.4 526.6M395.4 525.4L396.9 533.7M395.4 525.4L407.8 529.0M405.2 514.1L402.9 518.9M405.2 514.1L416.1 521.4M421.0 526.9L423.3 522.2M421.0 526.9L416.1 521.4M421.0 526.9L421.1 532.8M443.0 524.9L433.8 519.6M443.0 524.9L437.4 529.1M443.0 524.9L448.7 527.1M483.0 494.8L486.9 504.2M483.0 494.8L477.9 493.3M483.0 494.8L491.3 486.7M483.0 494.8L491.0 496.9M486.9 504.2L491.0 496.9M486.4 540.2L475.2 540.0M486.4 540.2L491.2 549.9M339.3 525.9L348.7 522.2M339.3 525.9L332.8 529.2M339.3 525.9L331.1 515.5M339.3 525.9L339.0 533.0M339.3 525.9L344.5 518.1M348.7 522.2L356.1 520.5M348.7 522.2L344.5 518.1M348.7 522.2L352.2 535.3M356.1 520.5L352.2 535.3M356.1 520.5L350.9 510.9M356.1 520.5L363.7 529.6M285.3 533.1L275.4 536.3M285.3 533.1L285.3 540.5M285.3 533.1L277.6 528.7M285.3 533.1L292.3 522.9M275.4 536.3L285.3 540.5M275.4 536.3L266.7 525.7M275.4 536.3L263.2 536.6M275.4 536.3L277.6 528.7M285.3 540.5L297.5 537.9M285.3 545.9L281.2 553.0M285.3 545.9L295.3 548.3M285.3 545.9L290.4 558.1M261.4 543.7L251.7 543.1M261.4 543.7L263.2 536.6M261.4 543.7L271.5 550.3M319.6 540.2L307.1 540.4M319.6 540.2L321.8 534.9M319.6 540.2L314.0 552.8M319.6 540.2L326.6 547.1M347.7 541.0L353.4 551.6M347.7 541.0L340.2 542.8M347.7 541.0L339.0 533.0M347.7 541.0L352.2 535.3M347.7 541.0L360.5 545.2M360.3 538.7L364.8 534.5M360.3 538.7L352.2 535.3M360.3 538.7L360.5 545.2M304.0 554.8L302.0 548.3M304.0 554.8L299.5 560.9M304.0 554.8L314.0 552.8M353.4 551.6L345.8 555.8M353.4 551.6L354.0 558.7M353.4 551.6L360.5 545.2M345.8 555.8L341.8 560.2M345.8 555.8L354.0 558.7M341.8 560.2L337.6 565.4M341.8 560.2L336.5 552.3M341.8 560.2L334.8 559.1M337.6 565.4L339.7 575.6M331.0 568.1L322.6 571.8M331.0 568.1L323.9 557.3M331.0 568.1L334.8 559.1M331.0 568.1L326.6 579.5M331.0 568.1L339.7 575.6M322.6 571.8L309.2 563.8M322.6 571.8L323.9 557.3M322.6 571.8L315.3 576.8M322.6 571.8L326.6 579.5M309.2 574.5L295.6 568.6M309.2 574.5L309.2 563.8M309.2 574.5L302.8 583.4M309.2 574.5L315.3 576.8M271.5 566.1L265.9 559.7M271.5 566.1L264.7 568.7M271.5 566.1L276.1 561.0M288.3 579.0L288.4 566.3M288.3 579.0L295.6 568.6M288.3 579.0L302.8 583.4M288.3 579.0L297.3 594.7M312.2 586.4L302.8 583.4M312.2 586.4L315.3 576.8M312.2 586.4L308.7 597.2M312.2 586.4L323.5 589.5M332.2 586.4L337.8 591.3M332.2 586.4L329.7 595.6M332.2 586.4L326.6 579.5M332.2 586.4L323.5 589.5M332.2 586.4L336.9 584.6M358.3 564.4L365.7 564.7M358.3 564.4L365.0 574.3M358.3 564.4L357.5 579.1M358.3 564.4L339.7 575.6M358.3 564.4L354.0 558.7M365.7 564.7L365.0 574.3M365.7 564.7L372.5 569.1M365.7 564.7L376.8 554.8M365.0 574.3L357.5 579.1M365.0 574.3L369.8 579.6M365.0 574.3L372.5 569.1M387.2 551.1L389.7 561.0M387.2 551.1L395.6 546.1M387.2 551.1L376.8 554.8M387.2 551.1L399.2 554.1M389.7 561.0L376.8 554.8M389.7 561.0L399.2 554.1M389.4 566.4L387.7 572.6M389.4 566.4L394.6 567.3M395.6 542.4L395.6 546.1M395.6 542.4L396.9 533.7M395.6 542.4L404.1 540.1M395.6 546.1L399.2 554.1M422.0 554.3L426.5 548.0M422.0 554.3L426.4 559.5M422.0 554.3L412.4 558.2M422.0 554.3L417.9 546.1M404.3 579.7L405.0 583.9M404.3 579.7L418.1 575.8M404.3 579.7L406.0 563.7M405.0 583.9L393.8 587.8M405.0 583.9L407.2 605.4M405.0 583.9L417.5 590.3M456.8 566.1L467.7 579.7M456.8 566.1L453.5 558.5M477.6 575.3L467.7 579.7M477.6 575.3L491.2 549.9M477.6 575.3L504.8 558.9M477.6 575.3L510.0 584.5M467.7 579.7L470.6 596.2M470.6 596.2L471.4 618.9M470.6 596.2L458.3 596.3M470.6 596.2L485.5 604.1M364.8 594.0L361.1 585.3M364.8 594.0L354.3 588.8M364.8 594.0L361.1 599.3M364.8 594.0L372.6 601.6M319.1 605.9L329.7 595.6M319.1 605.9L308.9 609.3M319.1 605.9L328.3 610.0M319.1 605.9L318.6 613.8M319.1 605.9L308.7 597.2M319.1 605.9L323.5 589.5M293.7 610.3L302.2 616.4M293.7 610.3L296.8 601.9M346.7 611.5L345.2 606.2M346.7 611.5L339.5 610.4M346.7 611.5L351.7 613.9M346.7 611.5L341.5 619.0M363.0 615.0L362.9 604.3M363.0 615.0L356.7 609.1M363.0 615.0L368.4 612.8M363.0 615.0L355.0 619.7M363.0 615.0L366.2 624.0M378.8 611.3L387.5 607.8M378.8 611.3L378.1 621.4M378.8 611.3L372.6 601.6M378.8 611.3L368.4 612.8M378.8 611.3L373.2 619.1M378.8 611.3L383.6 620.9M387.5 607.8L394.1 616.7M378.1 621.4L373.2 619.1M378.1 621.4L383.6 620.9M378.1 621.4L369.4 629.9M411.7 614.8L429.4 604.6M411.7 614.8L422.0 629.6M411.7 614.8L399.8 613.2M411.7 614.8L409.7 628.5M411.7 614.8L407.2 605.4M429.4 604.6L422.0 629.6M429.4 604.6L407.2 605.4M429.4 604.6L417.5 590.3M443.5 609.1L422.0 629.6M443.5 609.1L452.4 622.7M443.5 609.1L458.3 596.3M471.4 618.9L480.3 623.1M471.4 618.9L463.0 619.9M471.4 618.9L467.7 632.7M471.4 618.9L485.5 604.1M480.3 623.1L480.4 630.9M480.3 623.1L490.8 617.4M480.3 623.1L491.6 629.2M501.7 627.3L490.8 617.4M501.7 627.3L491.6 629.2M501.7 627.3L508.8 653.7M501.7 627.3L516.1 610.6M331.4 619.2L328.3 610.0M331.4 619.2L339.5 610.4M331.4 619.2L324.6 621.8M331.4 619.2L335.2 622.8M331.4 619.2L329.0 627.6M345.3 624.1L342.8 634.5M345.3 624.1L351.7 613.9M345.3 624.1L341.5 619.0M345.3 624.1L355.0 619.7M345.3 624.1L353.4 631.3M342.8 634.5L352.4 643.1M342.8 634.5L335.2 622.8M342.8 634.5L333.8 634.1M342.8 634.5L353.4 631.3M342.8 634.5L338.7 641.0M352.4 643.1L340.8 650.3M352.4 643.1L338.7 641.0M352.4 643.1L357.7 640.4M352.4 643.1L359.8 647.4M352.4 643.1L354.9 651.5M325.5 651.0L320.0 645.0M325.5 651.0L330.5 644.8M325.5 651.0L333.9 652.5M325.5 651.0L327.9 656.5M340.8 650.3L338.7 641.0M340.8 650.3L333.9 652.5M340.8 650.3L347.9 655.8M340.8 650.3L340.9 660.9M386.7 633.5L387.8 627.4M386.7 633.5L374.6 638.1M386.7 633.5L401.4 631.6M386.7 633.5L385.2 642.5M422.0 629.6L421.0 632.3M422.0 629.6L452.4 622.7M421.0 632.3L409.7 628.5M421.0 632.3L416.4 642.7M421.0 632.3L428.0 641.1M388.9 656.0L391.2 649.3M388.9 656.0L398.7 660.7M388.9 656.0L391.7 665.7M354.4 660.9L356.6 668.1M354.4 660.9L354.9 651.5M354.4 660.9L347.9 655.8M354.4 660.9L363.9 655.6M356.6 668.1L345.8 672.0M345.8 672.0L340.9 660.9M345.8 672.0L335.9 670.8M345.8 672.0L341.0 679.2M345.8 672.0L352.4 684.0M632.9 493.3L622.6 492.0M632.9 493.3L635.6 488.2M632.9 493.3L625.0 504.9M632.9 493.3L641.3 501.2M616.9 491.8L614.4 485.0M616.9 491.8L607.6 495.6M616.9 491.8L622.6 492.0M616.9 491.8L619.0 499.6M653.1 489.6L651.4 499.0M653.1 489.6L650.0 484.3M653.1 489.6L646.5 492.3M653.1 489.6L662.0 489.1M651.4 499.0L644.1 511.0M651.4 499.0L658.6 507.5M651.4 499.0L641.3 501.2M681.3 502.5L673.4 490.3M681.3 502.5L669.0 501.8M681.3 502.5L675.1 512.5M681.3 502.5L691.4 498.8M681.3 502.5L686.5 508.1M558.9 501.2L548.0 501.1M558.9 501.2L560.9 493.0M601.8 510.9L600.8 518.0M601.8 510.9L593.2 512.8M601.8 510.9L601.9 504.1M600.8 518.0L593.2 512.8M600.8 518.0L595.1 521.6M600.8 518.0L606.5 526.8M600.8 518.0L613.5 513.1M616.9 509.4L620.8 511.6M616.9 509.4L613.5 513.1M616.9 509.4L619.0 499.6M620.8 511.6L636.9 514.1M620.8 511.6L616.5 521.3M620.8 511.6L620.3 521.6M620.8 511.6L625.0 504.9M636.9 514.1L632.9 520.2M636.9 514.1L643.7 521.8M636.9 514.1L625.0 504.9M632.9 520.2L629.2 525.5M688.2 519.2L675.1 512.5M688.2 519.2L686.5 508.1M688.2 519.2L683.2 525.9M688.2 519.2L693.3 518.4M688.2 519.2L690.2 527.6M674.6 525.7L664.5 519.2M674.6 525.7L675.1 512.5M674.6 525.7L669.8 531.9M674.6 525.7L683.2 525.9M674.6 525.7L678.2 533.3M661.0 530.6L653.0 525.7M661.0 530.6L664.5 519.2M661.0 530.6L656.1 534.5M661.0 530.6L669.8 531.9M661.0 530.6L664.5 539.0M647.5 535.8L644.3 542.4M647.5 535.8L641.2 528.9M647.5 535.8L653.0 525.7M647.5 535.8L656.1 534.5M647.5 535.8L654.6 543.5M630.2 532.6L638.3 540.5M630.2 532.6L629.2 525.5M630.2 532.6L626.3 535.8M638.3 540.5L644.3 542.4M638.3 540.5L641.2 528.9M638.3 540.5L633.0 549.3M644.3 542.4L637.8 554.8M644.3 542.4L654.6 543.5M644.3 542.4L652.6 553.8M678.6 538.7L678.2 533.3M678.6 538.7L676.3 544.1M678.6 538.7L682.6 544.5M699.3 534.8L690.2 527.6M699.3 534.8L702.5 522.5M699.3 534.8L694.6 542.2M699.3 534.8L706.4 543.5M733.1 543.9L725.5 549.4M733.1 543.9L730.6 533.8M733.1 543.9L726.0 540.6M733.1 543.9L730.4 553.3M733.1 543.9L742.4 548.9M725.5 549.4L712.4 546.1M725.5 549.4L730.4 553.3M749.9 550.1L757.5 552.1M749.9 550.1L742.4 548.9M749.9 550.1L742.7 557.6M749.9 550.1L754.8 543.3M757.5 552.1L761.7 555.3M757.5 552.1L754.8 543.3M761.7 555.3L767.9 553.1M761.7 555.3L751.6 569.7M767.9 553.1L770.4 554.0M767.9 553.1L768.2 557.5M767.9 553.1L767.2 537.1M770.4 554.0L768.2 557.5M770.4 554.0L776.3 536.6M770.4 554.0L784.5 551.3M768.2 557.5L767.4 563.7M767.4 563.7L782.2 565.8M767.4 563.7L779.9 577.5M725.7 565.9L720.0 559.8M725.7 565.9L716.1 567.0M725.7 565.9L729.0 561.0M725.7 565.9L723.8 577.3M710.4 569.1L704.0 561.4M710.4 569.1L710.8 557.2M710.4 569.1L704.1 575.1M710.4 569.1L716.1 567.0M710.4 569.1L713.8 577.0M704.0 561.4L701.8 554.1M704.0 561.4L698.8 562.9M704.0 561.4L710.8 557.2M686.5 558.0L681.4 554.6M686.5 558.0L678.6 562.6M686.5 558.0L693.8 549.9M686.5 558.0L687.4 568.6M686.5 558.0L698.8 562.9M740.3 575.0L747.7 585.9M740.3 575.0L723.8 577.3M740.3 575.0L739.2 565.3M740.3 575.0L733.5 591.9M740.3 575.0L751.6 569.7M747.7 585.9L751.6 569.7M747.7 585.9L746.1 594.3M747.7 585.9L764.5 585.1M764.0 604.6L759.8 597.9M764.0 604.6L750.1 637.3M764.0 604.6L769.9 603.0M689.9 608.1L687.1 598.0M689.9 608.1L704.1 610.4M689.9 608.1L700.3 622.1M689.9 608.1L680.5 605.0M689.9 608.1L684.7 615.3M579.1 543.7L572.7 539.1M579.1 543.7L581.9 535.9M579.1 543.7L584.7 545.3M564.3 549.4L555.8 549.2M564.3 549.4L558.8 556.4M564.3 549.4L560.9 537.4M564.3 549.4L571.6 560.5M564.3 549.4L572.7 539.1M583.5 552.8L579.5 557.4M583.5 552.8L584.7 545.3M583.5 552.8L591.6 565.5M583.5 552.8L596.6 552.9M609.7 551.3L596.6 552.9M609.7 551.3L599.1 562.1M609.7 551.3L612.4 563.7M609.7 551.3L619.7 554.2M558.9 561.4L550.1 560.8M558.9 561.4L558.8 556.4M558.9 561.4L560.0 567.1M558.9 561.4L571.6 560.5M549.5 566.1L539.1 565.1M549.5 566.1L542.3 571.5M549.5 566.1L550.1 560.8M549.5 566.1L554.2 570.4M530.0 565.4L524.8 575.0M530.0 565.4L517.1 556.5M530.0 565.4L535.5 576.2M530.0 565.4L535.1 556.9M530.0 565.4L539.1 565.1M524.8 575.0L524.8 580.9M524.8 580.9L522.3 592.3M524.8 580.9L510.0 584.5M524.8 580.9L530.7 588.5M524.8 580.9L535.5 576.2M541.1 581.4L535.5 576.2M541.1 581.4L540.6 586.9M541.1 581.4L542.3 571.5M541.1 581.4L548.3 583.1M522.3 592.3L534.7 599.7M522.3 592.3L521.1 607.3M522.3 592.3L510.0 584.5M522.3 592.3L530.7 588.5M534.7 599.7L521.1 607.3M534.7 599.7L530.7 588.5M534.7 599.7L544.9 603.2M546.8 596.2L541.8 594.8M546.8 596.2L544.9 603.2M546.8 596.2L549.9 591.3M546.8 596.2L554.3 598.9M521.1 607.3L534.2 620.7M521.1 607.3L516.1 610.6M557.4 614.0L549.6 612.5M557.4 614.0L554.3 598.9M557.4 614.0L567.6 605.3M534.2 620.7L537.1 628.2M534.2 620.7L541.4 617.0M534.2 620.7L543.9 623.3M522.6 634.7L534.2 650.8M522.6 634.7L508.8 653.7M522.6 634.7L516.1 610.6M522.6 634.7L537.1 628.2M534.2 650.8L528.0 662.7M534.2 650.8L547.3 631.2M534.2 650.8L553.6 651.7M576.4 581.4L565.6 575.4M576.4 581.4L567.7 584.0M576.4 581.4L579.6 588.3M590.5 588.6L579.6 588.3M590.5 588.6L585.4 575.4M590.5 588.6L594.9 591.9M590.5 588.6L600.0 580.6M608.5 586.9L607.2 598.7M608.5 586.9L600.0 580.6M608.5 586.9L600.7 588.5M608.5 586.9L609.2 578.5M608.5 586.9L613.9 595.8M581.3 598.0L584.5 606.4M581.3 598.0L574.2 593.1M581.3 598.0L574.8 602.3M581.3 598.0L579.6 588.3M581.3 598.0L595.4 601.2M603.5 598.7L607.2 598.7M603.5 598.7L594.9 591.9M603.5 598.7L600.7 588.5M607.2 598.7L610.9 608.0M607.2 598.7L613.9 595.8M584.5 606.4L586.0 614.0M584.5 606.4L578.2 608.7M584.5 606.4L595.4 601.2M600.1 608.6L590.1 616.9M600.1 608.6L595.4 601.2M600.1 608.6L606.1 619.1M600.1 608.6L610.9 608.0M586.0 614.0L578.2 608.7M586.0 614.0L581.5 617.4M586.0 614.0L590.1 616.9M637.8 554.8L628.7 556.7M637.8 554.8L633.0 549.3M637.8 554.8L639.0 560.6M652.4 559.2L652.6 553.8M652.4 559.2L647.7 561.3M652.4 559.2L659.8 558.8M652.4 559.2L658.2 564.6M645.0 571.3L635.4 576.7M645.0 571.3L649.9 582.2M645.0 571.3L640.6 585.4M645.0 571.3L652.8 573.5M635.4 576.7L640.6 585.4M635.4 576.7L626.1 571.5M635.4 576.7L627.1 580.7M635.4 576.7L634.0 567.4M658.3 574.8L658.2 564.6M658.3 574.8L652.8 573.5M658.3 574.8L663.8 570.4M658.3 574.8L663.2 577.2M649.9 582.2L640.6 585.4M649.9 582.2L652.8 573.5M649.9 582.2L658.6 587.7M649.9 582.2L649.5 587.2M640.6 585.4L632.9 590.0M640.6 585.4L639.9 592.2M640.6 585.4L649.5 587.2M645.2 600.2L647.5 601.9M645.2 600.2L638.6 608.6M645.2 600.2L639.9 592.2M647.5 601.9L652.7 600.9M647.5 601.9L651.2 606.9M652.7 600.9L651.2 606.9M652.7 600.9L658.6 587.7M652.7 600.9L649.5 587.2M652.7 600.9L664.2 597.5M651.2 606.9L650.2 611.5M651.2 606.9L658.7 610.8M638.6 608.6L633.1 615.8M638.6 608.6L645.5 613.9M650.2 611.5L645.5 613.9M644.8 620.7L634.6 628.1M644.8 620.7L645.2 632.8M644.8 620.7L633.1 615.8M644.8 620.7L645.5 613.9M644.8 620.7L661.7 622.7M634.6 628.1L622.3 621.7M634.6 628.1L624.5 631.7M634.6 628.1L630.1 642.0M634.6 628.1L633.1 615.8M634.6 628.1L640.4 638.1M645.2 632.8L640.4 638.1M645.2 632.8L651.6 635.6M670.9 636.0L662.3 633.9M670.9 636.0L665.6 646.0M670.9 636.0L678.8 640.6M620.3 647.1L604.6 648.9M620.3 647.1L614.9 636.3M620.3 647.1L618.6 659.3M620.3 647.1L624.5 631.7M620.3 647.1L630.1 642.0M620.3 647.1L630.5 655.9M634.6 650.3L641.1 662.1M634.6 650.3L630.1 642.0M634.6 650.3L630.5 655.9M634.6 650.3L640.4 638.1M634.6 650.3L643.2 651.4M641.1 662.1L630.5 655.9M641.1 662.1L643.2 651.4M641.1 662.1L645.5 665.1M661.0 663.6L650.4 669.3M661.0 663.6L656.7 660.3M661.0 663.6L660.3 670.9M661.0 663.6L670.1 658.5M661.0 663.6L671.8 670.2M650.4 669.3L645.5 665.1M650.4 669.3L656.7 660.3M650.4 669.3L660.3 670.9M254.2 282.8L268.8 284.3M268.8 284.3L282.8 281.2M255.3 301.2L247.6 306.5M247.6 306.5L252.7 314.4M282.8 281.2L298.4 283.8M252.7 314.4L249.0 323.6M298.4 283.8L305.9 288.9M256.3 328.8L257.0 343.0M313.4 280.3L326.5 279.0M313.4 280.3L319.4 287.0M305.9 288.9L319.4 287.0M257.0 343.0L249.8 352.7M249.8 352.7L256.6 359.1M326.5 279.0L319.4 287.0M326.5 279.0L335.1 286.2M256.6 359.1L251.3 366.2M251.3 366.2L256.9 372.7M341.6 281.7L335.1 286.2M341.6 281.7L350.7 287.4M270.5 356.5L277.7 363.9M256.9 372.7L250.6 381.7M250.6 381.7L257.4 387.0M250.6 381.7L247.3 397.0M350.7 287.4L365.6 286.4M350.7 287.4L358.3 295.4M314.6 326.9L307.1 333.3M314.6 326.9L316.1 342.3M307.1 333.3L301.8 340.0M307.1 333.3L316.1 342.3M301.8 340.0L308.7 347.2M287.0 356.4L277.7 363.9M287.0 356.4L301.7 355.4M287.0 356.4L295.1 364.3M287.0 356.4L286.7 371.4M277.7 363.9L286.7 371.4M257.4 387.0L261.4 394.8M371.6 279.5L365.6 286.4M371.6 279.5L393.9 281.5M365.6 286.4L358.3 295.4M365.6 286.4L371.4 291.7M358.3 295.4L371.4 291.7M358.3 295.4L357.9 309.1M330.4 323.5L323.3 331.4M330.4 323.5L343.0 323.4M330.4 323.5L337.4 331.1M323.3 331.4L316.1 342.3M316.1 342.3L308.7 347.2M316.1 342.3L322.3 348.0M316.1 342.3L315.9 354.7M308.7 347.2L301.7 355.4M308.7 347.2L315.9 354.7M301.7 355.4L295.1 364.3M301.7 355.4L315.9 354.7M301.7 355.4L310.5 362.8M295.1 364.3L286.7 371.4M295.1 364.3L303.6 371.1M371.4 291.7L388.1 293.1M357.9 309.1L349.3 315.1M357.9 309.1L367.6 316.1M357.9 309.1L358.1 324.7M349.3 315.1L343.0 323.4M349.3 315.1L358.1 324.7M343.0 323.4L337.4 331.1M343.0 323.4L353.4 329.9M322.3 348.0L315.9 354.7M322.3 348.0L330.1 353.2M315.9 354.7L323.6 363.4M310.5 362.8L303.6 371.1M310.5 362.8L317.4 368.9M303.6 371.1L317.4 368.9M371.4 307.9L367.6 316.1M367.6 316.1L358.1 324.7M367.6 316.1L365.3 330.3M358.1 324.7L353.4 329.9M358.1 324.7L365.3 330.3M336.5 348.3L330.1 353.2M336.5 348.3L345.2 353.4M336.5 348.3L336.7 361.5M330.1 353.2L323.6 363.4M330.1 353.2L336.7 361.5M323.6 363.4L336.7 361.5M323.6 363.4L333.4 370.8M323.6 363.4L324.9 375.6M317.4 368.9L309.6 380.0M317.4 368.9L324.9 375.6M309.6 380.0L316.9 385.8M345.2 353.4L336.7 361.5M345.2 353.4L352.2 361.3M345.2 353.4L344.6 367.7M336.7 361.5L333.4 370.8M336.7 361.5L344.6 367.7M333.4 370.8L324.9 375.6M333.4 370.8L344.6 367.7M333.4 370.8L333.0 385.4M324.9 375.6L316.9 385.8M324.9 375.6L333.0 385.4M316.9 385.8L325.7 393.4M368.7 344.7L359.5 353.6M368.7 344.7L374.5 352.9M359.5 353.6L366.8 360.1M352.2 361.3L344.6 367.7M352.2 361.3L354.3 374.9M344.6 367.7L341.0 377.3M344.6 367.7L354.3 374.9M341.0 377.3L333.0 385.4M341.0 377.3L346.8 382.7M333.0 385.4L325.7 393.4M333.0 385.4L341.7 393.3M333.0 385.4L334.5 399.0M383.2 345.1L386.2 340.9M383.2 345.1L384.0 349.6M374.5 352.9L366.8 360.1M374.5 352.9L384.0 349.6M366.8 360.1L360.8 366.4M366.8 360.1L372.1 365.9M360.8 366.4L354.3 374.9M360.8 366.4L372.1 365.9M354.3 374.9L346.8 382.7M354.3 374.9L364.2 375.6M354.3 374.9L355.8 383.2M346.8 382.7L341.7 393.3M346.8 382.7L355.8 383.2M346.8 382.7L352.1 392.2M341.7 393.3L346.5 403.1M334.5 399.0L346.5 403.1M334.5 399.0L339.4 409.3M393.9 281.5L388.1 293.1M388.1 293.1L398.3 299.2M403.6 290.1L398.3 299.2M403.6 290.1L415.2 295.1M398.3 299.2L390.8 311.9M398.3 299.2L409.3 308.5M390.8 311.9L399.3 318.4M415.2 295.1L409.3 308.5M415.2 295.1L425.1 305.4M409.3 308.5L399.3 318.4M409.3 308.5L416.8 314.7M399.3 318.4L391.7 328.2M399.3 318.4L409.4 326.1M391.7 328.2L386.2 340.9M440.7 282.1L433.1 293.1M440.7 282.1L459.4 281.6M440.7 282.1L449.9 292.2M433.1 293.1L444.6 299.4M425.1 305.4L416.8 314.7M416.8 314.7L409.4 326.1M416.8 314.7L430.9 320.9M409.4 326.1L421.7 334.1M409.4 326.1L414.2 343.6M395.6 347.4L384.0 349.6M395.6 347.4L391.8 354.1M459.4 281.6L468.3 288.3M449.9 292.2L444.6 299.4M430.9 320.9L421.7 334.1M421.7 334.1L414.2 343.6M414.2 343.6L418.5 362.2M432.5 342.5L444.1 347.2M425.8 350.3L418.5 362.2M425.8 350.3L433.9 358.9M418.5 362.2L411.1 368.2M489.1 282.7L496.4 287.4M444.1 347.2L433.9 358.9M444.1 347.2L444.7 364.4M444.1 347.2L473.7 350.6M433.9 358.9L427.5 368.5M433.9 358.9L444.7 364.4M427.5 368.5L427.3 377.6M482.6 314.7L477.9 324.2M482.6 314.7L506.2 315.3M477.9 324.2L473.7 350.6M477.9 324.2L496.6 340.0M444.7 364.4L455.3 374.9M444.7 364.4L441.8 378.5M473.7 350.6L465.9 364.8M473.7 350.6L496.6 340.0M465.9 364.8L455.3 374.9M465.9 364.8L466.7 380.1M465.9 364.8L485.3 369.7M455.3 374.9L466.7 380.1M455.3 374.9L441.8 378.5M455.3 374.9L447.2 390.1M455.3 374.9L461.4 390.4M496.6 340.0L505.9 349.9M496.6 340.0L506.2 315.3M496.6 340.0L518.6 328.5M466.7 380.1L475.6 389.1M466.7 380.1L461.4 390.4M247.3 397.0L261.4 394.8M247.3 397.0L252.8 403.4M261.4 394.8L252.8 403.4M261.4 394.8L267.5 402.4M252.8 403.4L247.4 410.8M252.8 403.4L261.4 409.3M247.4 410.8L257.2 417.8M247.4 410.8L250.2 423.3M267.5 402.4L273.5 407.0M261.4 409.3L257.2 417.8M257.2 417.8L250.2 423.3M257.2 417.8L265.9 421.4M257.2 417.8L258.4 428.8M250.2 423.3L258.4 428.8M273.5 407.0L283.3 411.7M269.6 414.8L265.9 421.4M269.6 414.8L275.8 418.0M265.9 421.4L258.4 428.8M258.4 428.8L253.2 438.0M253.2 438.0L248.9 446.9M253.2 438.0L262.2 442.4M248.9 446.9L255.6 450.1M248.9 446.9L249.7 460.2M283.3 411.7L275.8 418.0M283.3 411.7L289.0 418.7M275.8 418.0L285.7 424.2M262.2 442.4L255.6 450.1M255.6 450.1L249.7 460.2M255.6 450.1L263.6 455.3M249.7 460.2L258.9 464.8M249.7 460.2L252.2 472.3M289.0 418.7L285.7 424.2M281.3 433.8L274.3 439.1M274.3 439.1L282.0 444.7M263.6 455.3L258.9 464.8M263.6 455.3L276.4 452.8M258.9 464.8L252.2 472.3M252.2 472.3L253.0 484.6M286.5 439.5L282.0 444.7M286.5 439.5L296.6 444.7M286.5 439.5L290.1 449.8M282.0 444.7L276.4 452.8M282.0 444.7L290.1 449.8M253.0 484.6L248.7 490.8M253.0 484.6L261.3 489.1M248.7 490.8L257.5 496.1M306.0 427.8L315.3 431.6M296.6 444.7L290.1 449.8M296.6 444.7L303.5 450.3M290.1 449.8L282.8 458.2M282.8 458.2L293.2 463.5M279.3 467.5L273.6 473.5M279.3 467.5L287.9 470.7M261.3 489.1L275.1 487.7M261.3 489.1L270.3 496.8M257.5 496.1L253.0 505.3M257.5 496.1L266.2 505.1M253.0 505.3L261.3 512.9M253.0 505.3L248.6 519.5M315.3 431.6L320.9 437.2M303.5 450.3L310.8 452.6M303.5 450.3L304.9 462.0M293.2 463.5L287.9 470.7M293.2 463.5L298.2 468.5M287.9 470.7L280.6 481.1M287.9 470.7L298.2 468.5M280.6 481.1L275.1 487.7M280.6 481.1L290.1 485.6M280.6 481.1L284.9 494.8M275.1 487.7L270.3 496.8M275.1 487.7L278.9 501.0M270.3 496.8L266.2 505.1M270.3 496.8L278.9 501.0M266.2 505.1L261.3 512.9M266.2 505.1L273.1 509.0M261.3 512.9L258.8 521.3M320.9 437.2L315.6 445.2M320.9 437.2L330.2 442.8M315.6 445.2L310.8 452.6M315.6 445.2L323.8 452.0M310.8 452.6L304.9 462.0M310.8 452.6L323.8 452.0M310.8 452.6L319.0 461.6M304.9 462.0L298.2 468.5M304.9 462.0L319.0 461.6M304.9 462.0L314.8 468.9M304.9 462.0L306.8 475.3M298.2 468.5L306.8 475.3M290.1 485.6L284.9 494.8M290.1 485.6L296.2 489.2M284.9 494.8L278.9 501.0M284.9 494.8L296.2 489.2M284.9 494.8L290.3 499.7M278.9 501.0L273.1 509.0M330.2 442.8L323.8 452.0M330.2 442.8L338.1 449.3M323.8 452.0L319.0 461.6M323.8 452.0L338.1 449.3M319.0 461.6L314.8 468.9M319.0 461.6L327.6 465.2M314.8 468.9L306.8 475.3M314.8 468.9L320.8 473.8M314.8 468.9L314.1 479.0M306.8 475.3L302.7 482.7M306.8 475.3L314.1 479.0M302.7 482.7L309.1 487.6M296.2 489.2L290.3 499.7M290.3 499.7L299.9 502.4M338.1 449.3L344.7 453.8M327.6 465.2L320.8 473.8M327.6 465.2L336.1 469.6M327.6 465.2L327.8 476.7M320.8 473.8L314.1 479.0M320.8 473.8L327.8 476.7M314.1 479.0L309.1 487.6M314.1 479.0L324.8 485.6M309.1 487.6L304.3 497.2M309.1 487.6L318.0 493.2M304.3 497.2L299.9 502.4M304.3 497.2L310.8 501.3M299.9 502.4L294.2 512.9M299.9 502.4L308.2 510.7M294.2 512.9L292.3 522.9M294.2 512.9L303.7 515.2M336.1 469.6L341.8 474.4M327.8 476.7L324.8 485.6M324.8 485.6L318.0 493.2M324.8 485.6L334.8 484.1M324.8 485.6L331.8 490.3M318.0 493.2L310.8 501.3M318.0 493.2L320.5 507.0M310.8 501.3L308.2 510.7M310.8 501.3L320.5 507.0M308.2 510.7L313.9 514.3M308.2 510.7L303.7 515.2M348.9 469.7L341.8 474.4M348.9 469.7L348.2 480.9M348.9 469.7L355.2 476.2M341.8 474.4L348.2 480.9M334.8 484.1L331.8 490.3M331.8 490.3L337.3 496.7M320.5 507.0L313.9 514.3M313.9 514.3L316.2 521.0M348.2 480.9L348.1 482.7M348.2 480.9L355.2 476.2M337.3 496.7L344.4 495.9M254.2 635.8L256.0 640.2M254.2 635.8L257.0 623.2M254.2 635.8L249.6 633.0M357.5 579.1L350.1 583.4M357.5 579.1L361.1 585.3M357.5 579.1L354.3 588.8M350.1 583.4L343.5 585.9M350.1 583.4L354.3 588.8M343.5 585.9L337.8 591.3M343.5 585.9L349.8 596.7M343.5 585.9L339.7 575.6M343.5 585.9L336.9 584.6M337.8 591.3L329.7 595.6M337.8 591.3L339.5 598.2M337.8 591.3L336.9 584.6M329.7 595.6L339.5 598.2M329.7 595.6L331.9 602.5M329.7 595.6L323.5 589.5M308.9 609.3L302.2 616.4M308.9 609.3L313.6 619.2M308.9 609.3L308.7 597.2M302.2 616.4L306.0 622.7M256.0 640.2L251.5 646.1M251.5 646.1L255.8 651.5M369.8 579.6L361.1 585.3M369.8 579.6L372.5 569.1M369.8 579.6L377.2 576.7M361.1 585.3L354.3 588.8M354.3 588.8L349.8 596.7M349.8 596.7L339.5 598.2M349.8 596.7L353.4 602.3M349.8 596.7L345.2 606.2M339.5 598.2L331.9 602.5M339.5 598.2L345.2 606.2M331.9 602.5L328.3 610.0M331.9 602.5L339.5 610.4M328.3 610.0L318.6 613.8M328.3 610.0L339.5 610.4M318.6 613.8L313.6 619.2M318.6 613.8L324.6 621.8M313.6 619.2L306.0 622.7M313.6 619.2L316.9 624.3M306.0 622.7L310.7 629.1M255.8 651.5L258.4 661.6M361.1 599.3L353.4 602.3M361.1 599.3L362.9 604.3M353.4 602.3L345.2 606.2M353.4 602.3L362.9 604.3M353.4 602.3L356.7 609.1M345.2 606.2L339.5 610.4M339.5 610.4L341.5 619.0M324.6 621.8L316.9 624.3M324.6 621.8L329.0 627.6M324.6 621.8L321.1 630.9M316.9 624.3L310.7 629.1M316.9 624.3L321.1 630.9M310.7 629.1L321.1 630.9M310.7 629.1L313.7 637.3M258.4 661.6L250.1 665.0M258.4 661.6L256.5 672.9M250.1 665.0L256.5 672.9M250.1 665.0L250.7 676.6M393.8 587.8L372.6 601.6M393.8 587.8L394.0 607.5M393.8 587.8L407.2 605.4M393.8 587.8L387.7 572.6M372.6 601.6L362.9 604.3M372.6 601.6L368.4 612.8M362.9 604.3L356.7 609.1M356.7 609.1L351.7 613.9M351.7 613.9L355.0 619.7M341.5 619.0L335.2 622.8M335.2 622.8L329.0 627.6M329.0 627.6L321.1 630.9M329.0 627.6L333.8 634.1M329.0 627.6L326.2 637.9M321.1 630.9L313.7 637.3M321.1 630.9L326.2 637.9M313.7 637.3L307.6 641.3M313.7 637.3L326.2 637.9M313.7 637.3L320.0 645.0M313.7 637.3L312.7 647.0M307.6 641.3L312.7 647.0M256.5 672.9L250.7 676.6M256.5 672.9L261.2 678.1M368.4 612.8L373.2 619.1M355.0 619.7L366.2 624.0M355.0 619.7L353.4 631.3M333.8 634.1L326.2 637.9M333.8 634.1L338.7 641.0M333.8 634.1L330.5 644.8M326.2 637.9L320.0 645.0M326.2 637.9L330.5 644.8M320.0 645.0L312.7 647.0M320.0 645.0L330.5 644.8M320.0 645.0L317.0 656.9M312.7 647.0L317.0 656.9M268.7 676.3L261.2 678.1M268.7 676.3L273.4 681.9M394.0 607.5L399.8 613.2M394.0 607.5L394.1 616.7M394.0 607.5L407.2 605.4M373.2 619.1L366.2 624.0M366.2 624.0L359.8 628.0M366.2 624.0L369.4 629.9M359.8 628.0L353.4 631.3M359.8 628.0L369.4 629.9M359.8 628.0L363.6 636.5M353.4 631.3L363.6 636.5M353.4 631.3L357.7 640.4M338.7 641.0L330.5 644.8M330.5 644.8L333.9 652.5M317.0 656.9L321.6 660.8M285.2 672.8L280.9 677.7M285.2 672.8L298.2 676.2M285.2 672.8L291.7 681.4M280.9 677.7L273.4 681.9M399.8 613.2L394.1 616.7M399.8 613.2L403.1 620.3M399.8 613.2L407.2 605.4M394.1 616.7L383.6 620.9M394.1 616.7L403.1 620.3M394.1 616.7L387.8 627.4M383.6 620.9L387.8 627.4M369.4 629.9L363.6 636.5M369.4 629.9L374.6 638.1M363.6 636.5L357.7 640.4M363.6 636.5L374.6 638.1M363.6 636.5L368.1 643.2M357.7 640.4L359.8 647.4M333.9 652.5L340.9 660.9M327.9 656.5L321.6 660.8M327.9 656.5L332.9 665.5M298.2 676.2L291.7 681.4M298.2 676.2L301.6 682.5M291.7 681.4L301.6 682.5M403.1 620.3L409.7 628.5M403.1 620.3L401.4 631.6M387.8 627.4L401.4 631.6M374.6 638.1L368.1 643.2M374.6 638.1L380.3 643.9M368.1 643.2L359.8 647.4M368.1 643.2L372.3 649.7M359.8 647.4L354.9 651.5M359.8 647.4L363.9 655.6M354.9 651.5L347.9 655.8M354.9 651.5L363.9 655.6M347.9 655.8L340.9 660.9M340.9 660.9L332.9 665.5M332.9 665.5L325.3 668.7M332.9 665.5L335.9 670.8M332.9 665.5L328.1 675.0M325.3 668.7L315.6 675.0M325.3 668.7L328.1 675.0M315.6 675.0L311.2 680.4M315.6 675.0L328.1 675.0M315.6 675.0L321.5 682.8M311.2 680.4L301.6 682.5M311.2 680.4L321.5 682.8M409.7 628.5L401.4 631.6M401.4 631.6L406.8 639.0M401.4 631.6L398.7 644.5M385.2 642.5L380.3 643.9M385.2 642.5L391.2 649.3M385.2 642.5L385.5 652.0M380.3 643.9L372.3 649.7M380.3 643.9L385.5 652.0M372.3 649.7L363.9 655.6M372.3 649.7L377.7 657.3M372.3 649.7L368.4 661.2M363.9 655.6L368.4 661.2M335.9 670.8L341.0 679.2M335.9 670.8L334.2 683.0M328.1 675.0L321.5 682.8M328.1 675.0L334.2 683.0M321.5 682.8L334.2 683.0M406.8 639.0L398.7 644.5M406.8 639.0L416.4 642.7M391.2 649.3L385.5 652.0M385.5 652.0L377.7 657.3M377.7 657.3L368.4 661.2M377.7 657.3L382.5 665.1M377.7 657.3L375.1 668.1M368.4 661.2L364.4 666.9M368.4 661.2L375.1 668.1M364.4 666.9L367.9 674.4M341.0 679.2L334.2 683.0M341.0 679.2L352.4 684.0M416.4 642.7L420.2 661.2M416.4 642.7L428.0 641.1M382.5 665.1L375.1 668.1M382.5 665.1L391.7 665.7M382.5 665.1L384.6 672.8M375.1 668.1L367.9 674.4M375.1 668.1L384.6 672.8M375.1 668.1L378.7 677.0M367.9 674.4L361.4 677.6M361.4 677.6L352.4 684.0M398.7 660.7L391.7 665.7M398.7 660.7L405.1 668.3M391.7 665.7L384.6 672.8M391.7 665.7L398.1 673.3M391.7 665.7L389.2 677.1M384.6 672.8L389.2 677.1M378.7 677.0L384.6 683.3M420.2 661.2L405.1 668.3M420.2 661.2L424.3 668.7M405.1 668.3L398.1 673.3M405.1 668.3L409.6 677.4M398.1 673.3L400.4 680.2M389.2 677.1L400.4 680.2M424.3 668.7L431.5 682.1M409.6 677.4L400.4 680.2M409.6 677.4L413.1 683.2M413.1 683.2L431.5 682.1M431.5 682.1L448.0 677.2M248.6 519.5L258.8 521.3M258.8 521.3L266.7 525.7M256.0 533.5L251.7 543.1M256.0 533.5L266.7 525.7M256.0 533.5L263.2 536.6M251.7 543.1L247.4 550.4M247.4 550.4L258.0 555.0M247.4 550.4L251.5 564.1M266.7 525.7L263.2 536.6M266.7 525.7L277.6 528.7M258.0 555.0L251.5 564.1M258.0 555.0L265.9 559.7M251.5 564.1L249.7 575.0M249.7 575.0L255.4 586.9M279.9 519.9L277.6 528.7M279.9 519.9L292.3 522.9M271.5 550.3L281.2 553.0M271.5 550.3L276.1 561.0M265.9 559.7L264.7 568.7M265.9 559.7L276.1 561.0M264.7 568.7L258.0 577.1M258.0 577.1L255.4 586.9M258.0 577.1L268.6 581.1M255.4 586.9L250.8 598.0M250.8 598.0L249.6 607.4M249.6 607.4L257.9 613.0M292.3 522.9L303.7 515.2M292.3 522.9L302.7 526.7M292.3 522.9L297.5 537.9M281.2 553.0L276.1 561.0M281.2 553.0L290.4 558.1M272.9 573.8L268.6 581.1M272.9 573.8L281.4 575.7M257.9 613.0L257.0 623.2M303.7 515.2L302.7 526.7M302.7 526.7L297.5 537.9M302.7 526.7L310.3 529.6M297.5 537.9L295.3 548.3M297.5 537.9L307.1 540.4M295.3 548.3L290.4 558.1M295.3 548.3L302.0 548.3M290.4 558.1L288.4 566.3M290.4 558.1L299.5 560.9M288.4 566.3L281.4 575.7M288.4 566.3L295.6 568.6M316.2 521.0L310.3 529.6M316.2 521.0L325.2 523.0M316.2 521.0L321.8 534.9M310.3 529.6L307.1 540.4M310.3 529.6L321.8 534.9M307.1 540.4L302.0 548.3M307.1 540.4L314.0 552.8M299.5 560.9L309.2 563.8M295.6 568.6L302.8 583.4M325.2 523.0L321.8 534.9M325.2 523.0L332.8 529.2M321.8 534.9L332.8 529.2M321.8 534.9L331.5 538.6M314.0 552.8L309.2 563.8M314.0 552.8L326.6 547.1M314.0 552.8L323.9 557.3M309.2 563.8L323.9 557.3M302.8 583.4L297.3 594.7M297.3 594.7L296.8 601.9M297.3 594.7L308.7 597.2M296.8 601.9L308.7 597.2M332.8 529.2L331.5 538.6M332.8 529.2L339.0 533.0M331.5 538.6L326.6 547.1M331.5 538.6L340.2 542.8M331.5 538.6L339.0 533.0M326.6 547.1L323.9 557.3M326.6 547.1L336.5 552.3M323.9 557.3L334.8 559.1M315.3 576.8L326.6 579.5M340.2 542.8L336.5 552.3M340.2 542.8L339.0 533.0M336.5 552.3L334.8 559.1M326.6 579.5L323.5 589.5M326.6 579.5L339.7 575.6M339.7 575.6L336.9 584.6M475.6 389.1L476.5 398.7M475.6 389.1L484.9 390.1M475.6 389.1L461.4 390.4M476.5 398.7L485.1 396.6M476.5 398.7L485.3 406.6M476.5 398.7L464.5 403.2M473.5 407.2L485.3 406.6M473.5 407.2L464.5 403.2M475.6 416.3L485.3 406.6M475.6 416.3L485.4 419.2M475.6 416.3L476.5 425.4M485.3 369.7L486.3 376.8M486.3 376.8L484.9 390.1M486.3 376.8L495.1 368.4M486.3 376.8L494.8 388.7M484.9 390.1L485.1 396.6M484.9 390.1L494.8 388.7M485.1 396.6L485.3 406.6M485.1 396.6L497.0 397.5M485.3 406.6L485.4 419.2M485.3 406.6L497.0 397.5M485.4 419.2L476.5 425.4M485.4 419.2L487.0 426.3M495.1 368.4L496.9 377.5M495.1 368.4L506.4 370.4M496.9 377.5L494.8 388.7M496.9 377.5L506.4 370.4M496.9 377.5L506.3 380.1M494.8 388.7L505.8 387.4M497.0 397.5L505.8 387.4M505.9 349.9L508.7 358.7M505.9 349.9L517.4 349.7M508.7 358.7L506.4 370.4M508.7 358.7L517.4 349.7M508.7 358.7L517.6 368.9M506.4 370.4L506.3 380.1M506.4 370.4L517.6 368.9M506.3 380.1L505.8 387.4M506.3 380.1L518.1 380.9M505.8 387.4L505.7 398.8M505.7 398.8L516.8 399.4M517.4 349.7L529.1 348.5M517.4 349.7L518.6 328.5M517.6 368.9L518.1 380.9M517.6 368.9L526.7 369.3M518.1 380.9L517.4 388.7M518.1 380.9L526.4 378.0M518.1 380.9L524.5 388.0M517.4 388.7L516.8 399.4M517.4 388.7L524.5 388.0M516.8 399.4L515.1 407.5M516.8 399.4L527.2 401.4M515.1 407.5L525.7 409.7M529.1 348.5L538.8 349.7M529.1 348.5L528.0 332.7M526.7 369.3L526.4 378.0M526.7 369.3L536.1 360.9M526.7 369.3L536.0 369.8M526.4 378.0L524.5 388.0M526.4 378.0L536.0 369.8M526.4 378.0L537.6 378.1M524.5 388.0L537.5 391.0M524.5 388.0L534.6 399.7M527.2 401.4L525.7 409.7M527.2 401.4L534.6 399.7M527.2 401.4L534.3 409.4M525.7 409.7L524.3 421.0M525.7 409.7L534.3 409.4M524.3 421.0L533.3 420.7M526.2 429.1L533.3 420.7M526.2 429.1L535.1 428.1M526.2 429.1L518.6 436.0M526.2 429.1L530.3 438.0M538.8 349.7L536.1 360.9M538.8 349.7L553.6 346.6M536.1 360.9L536.0 369.8M536.0 369.8L537.6 378.1M536.0 369.8L546.0 372.0M537.6 378.1L546.0 372.0M537.6 378.1L547.1 380.8M537.5 391.0L534.6 399.7M534.6 399.7L534.3 409.4M534.3 409.4L533.3 420.7M534.3 409.4L546.7 410.3M534.3 409.4L544.1 420.5M533.3 420.7L535.1 428.1M533.3 420.7L544.1 420.5M535.1 428.1L544.1 420.5M535.1 428.1L542.8 430.5M547.3 359.8L546.0 372.0M547.3 359.8L557.0 361.7M547.3 359.8L553.6 346.6M546.0 372.0L557.0 361.7M546.0 372.0L558.4 371.6M546.0 372.0L556.3 379.5M547.1 380.8L547.5 391.9M547.1 380.8L556.3 379.5M546.7 410.3L544.1 420.5M546.7 410.3L553.8 402.6M546.7 410.3L554.5 410.3M546.7 410.3L554.3 419.9M544.1 420.5L542.8 430.5M544.1 420.5L554.3 419.9M542.8 430.5L555.1 432.1M542.8 430.5L537.3 441.6M542.8 430.5L550.2 444.7M557.0 361.7L558.4 371.6M557.0 361.7L565.9 359.3M557.0 361.7L565.3 369.3M557.0 361.7L553.6 346.6M558.4 371.6L556.3 379.5M558.4 371.6L565.3 369.3M558.4 371.6L564.8 380.0M556.3 379.5L564.8 380.0M553.8 402.6L554.5 410.3M553.8 402.6L565.9 400.6M554.5 410.3L554.3 419.9M554.5 410.3L564.3 411.6M554.3 419.9L555.1 432.1M554.3 419.9L564.3 411.6M554.3 419.9L564.7 420.1M555.1 432.1L566.5 430.1M555.1 432.1L550.2 444.7M555.1 432.1L560.3 446.7M565.9 359.3L565.3 369.3M565.9 359.3L576.9 360.1M565.9 359.3L566.5 350.4M565.9 359.3L577.0 354.2M565.3 369.3L564.8 380.0M565.3 369.3L576.9 360.1M565.3 369.3L575.1 372.8M564.8 380.0L575.1 372.8M564.8 380.0L576.5 382.6M565.3 389.6L565.9 400.6M565.3 389.6L576.5 382.6M565.9 400.6L564.3 411.6M565.9 400.6L575.5 401.7M564.3 411.6L574.7 410.0M564.7 420.1L566.5 430.1M566.5 430.1L573.5 422.3M566.5 430.1L573.6 432.3M576.9 360.1L575.1 372.8M576.9 360.1L577.0 354.2M576.9 360.1L584.1 361.7M575.1 372.8L576.5 382.6M575.1 372.8L585.4 373.2M575.1 372.8L584.1 361.7M576.5 382.6L584.7 381.6M575.5 401.7L574.7 410.0M574.7 410.0L573.5 422.3M573.5 422.3L573.6 432.3M573.5 422.3L583.1 422.2M573.6 432.3L583.2 431.3M573.6 432.3L573.8 439.4M585.4 373.2L584.7 381.6M585.4 373.2L584.1 361.7M585.4 373.2L593.6 371.0M584.7 381.6L587.0 389.9M586.8 413.3L583.1 422.2M586.8 413.3L594.9 411.9M586.8 413.3L590.9 422.3M583.1 422.2L590.9 422.3M583.1 422.2L583.2 431.3M496.4 287.4L512.0 287.7M496.4 287.4L508.1 299.3M512.0 287.7L508.1 299.3M508.1 299.3L506.2 315.3M508.1 299.3L520.4 304.0M506.2 315.3L520.4 316.1M506.2 315.3L518.6 328.5M524.8 289.0L520.4 304.0M524.8 289.0L536.7 291.0M520.4 304.0L520.4 316.1M520.4 304.0L545.6 307.0M520.4 316.1L518.6 328.5M520.4 316.1L545.6 307.0M518.6 328.5L528.0 332.7M540.1 279.0L536.7 291.0M540.1 279.0L551.7 281.7M528.0 332.7L540.9 332.7M551.7 281.7L563.7 296.3M545.6 307.0L540.9 332.7M545.6 307.0L563.7 296.3M540.9 332.7L553.6 346.6M563.7 296.3L574.0 297.9M553.6 346.6L567.1 338.8M553.6 346.6L566.5 350.4M577.4 285.1L574.0 297.9M567.1 338.8L566.5 350.4M566.5 350.4L577.0 354.2M577.0 354.2L585.8 350.8M418.1 575.8L417.5 590.3M418.1 575.8L426.4 559.5M418.1 575.8L430.6 575.7M418.1 575.8L406.0 563.7M418.1 575.8L412.4 558.2M428.0 641.1L430.9 651.4M428.0 641.1L453.4 634.2M426.5 548.0L438.6 547.1M426.5 548.0L417.9 546.1M426.5 548.0L426.1 540.2M426.4 559.5L430.6 575.7M426.4 559.5L438.6 560.4M430.6 575.7L438.6 560.4M430.6 575.7L458.3 596.3M448.0 677.2L461.5 676.0M438.6 547.1L438.6 560.4M438.6 547.1L449.1 544.9M438.6 547.1L426.1 540.2M438.6 547.1L434.0 535.5M438.6 560.4L453.5 558.5M452.4 622.7L453.4 634.2M452.4 622.7L463.0 619.9M453.4 634.2L467.7 632.7M461.5 676.0L470.8 658.0M461.5 676.0L474.5 673.8M448.9 531.1L449.1 544.9M448.9 531.1L460.4 528.9M448.9 531.1L461.5 542.4M448.9 531.1L448.7 527.1M449.1 544.9L453.5 558.5M449.1 544.9L461.5 542.4M453.5 558.5L461.5 542.4M458.3 596.3L463.0 619.9M463.0 619.9L467.7 632.7M467.7 632.7L470.8 658.0M467.7 632.7L480.4 630.9M470.8 658.0L474.5 673.8M470.8 658.0L484.2 657.5M474.5 673.8L485.4 670.7M460.4 528.9L461.5 542.4M460.4 528.9L448.7 527.1M480.4 630.9L484.2 657.5M480.4 630.9L491.6 629.2M484.2 657.5L485.4 670.7M484.2 657.5L495.9 653.2M484.2 657.5L500.3 668.7M485.4 670.7L489.8 683.8M485.4 670.7L500.3 668.7M489.8 683.8L502.2 678.6M485.5 604.1L490.8 617.4M485.5 604.1L510.0 584.5M490.8 617.4L491.6 629.2M490.8 617.4L516.1 610.6M491.6 629.2L495.9 653.2M495.9 653.2L500.3 668.7M500.3 668.7L502.2 678.6M500.3 668.7L511.1 663.3M491.2 549.9L502.1 546.7M508.8 653.7L511.1 663.3M511.1 663.3L512.1 678.3M511.1 663.3L524.1 661.2M512.1 678.3L525.5 676.2M502.1 546.7L504.8 558.9M504.8 558.9L517.1 556.5M524.1 661.2L528.0 662.7M525.5 676.2L526.8 683.9M525.5 676.2L530.6 668.0M525.5 676.2L536.1 678.3M517.1 556.5L535.1 556.9M529.6 544.9L534.7 547.0M526.8 683.9L536.1 678.3M528.0 662.7L530.6 668.0M530.6 668.0L536.1 678.3M536.1 678.3L542.6 675.9M542.6 675.9L550.4 674.9M537.1 628.2L543.9 623.3M537.1 628.2L547.3 631.2M530.7 588.5L535.5 576.2M530.7 588.5L540.6 586.9M530.7 588.5L541.8 594.8M541.4 617.0L543.9 623.3M541.4 617.0L549.6 612.5M541.4 617.0L551.2 620.1M543.9 623.3L547.3 631.2M547.3 631.2L557.3 627.6M553.6 651.7L570.2 632.6M535.5 576.2L542.3 571.5M540.6 586.9L541.8 594.8M540.6 586.9L548.3 583.1M540.6 586.9L549.9 591.3M544.9 603.2L549.6 612.5M544.9 603.2L554.3 598.9M549.6 612.5L551.2 620.1M549.6 612.5L554.3 598.9M551.2 620.1L557.3 627.6M557.3 627.6L563.9 624.4M534.7 547.0L535.1 556.9M534.7 547.0L544.0 551.7M535.1 556.9L539.1 565.1M535.1 556.9L544.0 551.7M539.1 565.1L542.3 571.5M548.3 583.1L549.9 591.3M548.3 583.1L555.3 576.3M548.3 583.1L558.9 586.7M549.9 591.3L558.9 586.7M554.3 598.9L558.9 586.7M554.3 598.9L564.1 596.7M562.4 618.7L563.9 624.4M562.4 618.7L569.9 611.7M563.9 624.4L570.2 632.6M563.9 624.4L574.8 623.8M570.2 632.6L574.8 623.8M570.2 632.6L577.4 631.3M544.0 551.7L550.1 560.8M550.1 560.8L558.8 556.4M554.2 570.4L555.3 576.3M554.2 570.4L560.0 567.1M555.3 576.3L558.9 586.7M558.9 586.7L564.1 596.7M558.9 586.7L567.7 584.0M564.1 596.7L567.6 605.3M564.1 596.7L567.7 584.0M564.1 596.7L574.2 593.1M567.6 605.3L569.9 611.7M567.6 605.3L574.8 602.3M569.9 611.7L578.2 608.7M574.8 623.8L577.4 631.3M574.8 623.8L581.5 617.4M577.4 631.3L588.5 628.0M582.4 639.8L588.5 628.0M582.4 639.8L582.6 656.1M582.4 639.8L589.9 641.2M555.8 549.2L558.8 556.4M555.8 549.2L560.9 537.4M558.8 556.4L571.6 560.5M560.0 567.1L571.6 560.5M565.6 575.4L567.7 584.0M565.6 575.4L571.6 560.5M567.7 584.0L574.2 593.1M574.2 593.1L574.8 602.3M574.8 602.3L578.2 608.7M578.2 608.7L581.5 617.4M581.5 617.4L588.5 628.0M588.5 628.0L597.1 625.5M588.5 628.0L589.9 641.2M560.9 537.4L567.4 533.0M571.6 560.5L579.5 557.4M571.6 560.5L581.0 567.4M575.2 572.6L581.0 567.4M575.2 572.6L585.4 575.4M590.1 616.9L597.1 625.5M597.1 625.5L606.1 619.1M597.1 625.5L603.8 638.6M567.4 533.0L572.7 539.1M567.4 533.0L577.8 529.7M572.7 539.1L577.8 529.7M579.5 557.4L581.0 567.4M581.0 567.4L585.4 575.4M581.0 567.4L591.6 565.5M585.4 575.4L591.6 565.5M585.4 575.4L595.2 572.7M594.9 591.9L595.4 601.2M594.9 591.9L600.7 588.5M606.1 619.1L610.9 608.0M606.1 619.1L612.4 622.9M577.8 529.7L581.9 535.9M577.8 529.7L587.1 526.4M581.9 535.9L584.7 545.3M581.9 535.9L587.1 526.4M581.9 535.9L589.2 534.5M584.7 545.3L589.2 534.5M584.7 545.3L593.9 541.8M584.7 545.3L596.6 552.9M591.6 565.5L595.2 572.7M595.2 572.7L600.0 580.6M595.2 572.7L604.1 570.4M600.0 580.6L600.7 588.5M600.0 580.6L604.1 570.4M600.0 580.6L609.2 578.5M610.9 608.0L619.2 605.2M587.1 526.4L589.2 534.5M587.1 526.4L595.1 521.6M589.2 534.5L593.9 541.8M589.2 534.5L599.5 528.7M593.9 541.8L596.6 552.9M593.9 541.8L602.8 538.7M596.6 552.9L599.1 562.1M599.1 562.1L604.1 570.4M599.1 562.1L612.4 563.7M604.1 570.4L609.2 578.5M604.1 570.4L612.4 563.7M609.2 578.5L617.0 574.4M609.2 578.5L618.8 581.4M613.9 595.8L619.2 605.2M613.9 595.8L621.7 591.3M619.2 605.2L627.2 599.0M619.2 605.2L620.9 608.4M593.2 512.8L595.1 521.6M595.1 521.6L599.5 528.7M599.5 528.7L602.8 538.7M599.5 528.7L606.5 526.8M602.8 538.7L606.5 526.8M602.8 538.7L611.6 535.1M602.8 538.7L612.9 542.6M612.4 563.7L617.0 574.4M612.4 563.7L619.7 554.2M612.4 563.7L620.6 563.8M617.0 574.4L618.8 581.4M617.0 574.4L620.6 563.8M617.0 574.4L626.1 571.5M618.8 581.4L621.7 591.3M621.7 591.3L627.2 599.0M621.7 591.3L627.1 580.7M621.7 591.3L632.9 590.0M627.2 599.0L632.9 590.0M627.2 599.0L630.5 604.9M606.5 526.8L611.6 535.1M606.5 526.8L616.5 521.3M611.6 535.1L612.9 542.6M611.6 535.1L616.5 521.3M611.6 535.1L620.3 533.1M612.9 542.6L619.7 554.2M612.9 542.6L624.4 539.8M619.7 554.2L620.6 563.8M619.7 554.2L626.1 548.5M619.7 554.2L628.7 556.7M620.6 563.8L626.1 571.5M620.6 563.8L628.7 556.7M626.1 571.5L627.1 580.7M627.1 580.7L632.9 590.0M613.5 513.1L616.5 521.3M616.5 521.3L620.3 521.6M620.3 533.1L624.4 539.8M620.3 533.1L620.3 521.6M620.3 533.1L629.2 525.5M624.4 539.8L626.1 548.5M624.4 539.8L626.3 535.8M626.1 548.5L628.7 556.7M628.7 556.7L634.0 567.4M628.7 556.7L633.0 549.3M634.0 567.4L639.0 560.6M620.3 521.6L629.2 525.5M644.1 511.0L643.7 521.8M644.1 511.0L658.6 507.5M644.1 511.0L653.1 516.8M644.1 511.0L641.3 501.2M643.7 521.8L641.2 528.9M643.7 521.8L653.1 516.8M641.2 528.9L653.0 525.7M662.8 495.6L658.6 507.5M662.8 495.6L673.4 490.3M662.8 495.6L669.0 501.8M662.8 495.6L662.0 489.1M658.6 507.5L653.1 516.8M658.6 507.5L665.4 508.7M653.1 516.8L653.0 525.7M653.0 525.7L664.5 519.2M653.0 525.7L656.1 534.5M639.0 560.6L647.7 561.3M673.4 490.3L662.0 489.1M669.0 501.8L665.4 508.7M665.4 508.7L664.5 519.2M665.4 508.7L675.1 512.5M664.5 519.2L675.1 512.5M664.5 519.2L669.8 531.9M656.1 534.5L654.6 543.5M656.1 534.5L664.5 539.0M654.6 543.5L652.6 553.8M654.6 543.5L662.2 547.0M652.6 553.8L662.2 547.0M652.6 553.8L659.8 558.8M675.1 512.5L686.5 508.1M669.8 531.9L664.5 539.0M669.8 531.9L678.2 533.3M664.5 539.0L676.3 544.1M662.2 547.0L659.8 558.8M662.2 547.0L673.1 551.6M659.8 558.8L658.2 564.6M659.8 558.8L667.0 562.3M658.2 564.6L652.8 573.5M658.2 564.6L667.0 562.3M658.2 564.6L663.8 570.4M698.0 479.8L707.7 482.2M698.0 479.8L693.3 473.3M691.4 498.8L698.6 511.8M683.2 525.9L678.2 533.3M683.2 525.9L690.2 527.6M683.2 525.9L685.4 537.2M678.2 533.3L685.4 537.2M676.3 544.1L673.1 551.6M676.3 544.1L682.6 544.5M673.1 551.6L667.0 562.3M673.1 551.6L681.4 554.6M667.0 562.3L663.8 570.4M667.0 562.3L678.6 562.6M667.0 562.3L674.1 573.5M663.8 570.4L663.2 577.2M663.8 570.4L674.1 573.5M663.2 577.2L658.6 587.7M663.2 577.2L674.1 573.5M663.2 577.2L671.4 583.4M663.2 577.2L666.3 589.9M658.6 587.7L666.3 589.9M711.5 474.3L707.7 482.2M711.5 474.3L717.1 478.3M711.5 474.3L709.0 467.0M711.5 474.3L723.6 465.1M707.7 482.2L717.1 478.3M707.7 482.2L716.0 486.5M698.6 511.8L693.3 518.4M698.6 511.8L702.5 522.5M693.3 518.4L690.2 527.6M693.3 518.4L702.5 522.5M690.2 527.6L685.4 537.2M690.2 527.6L702.5 522.5M685.4 537.2L682.6 544.5M685.4 537.2L694.6 542.2M682.6 544.5L681.4 554.6M682.6 544.5L694.6 542.2M682.6 544.5L693.8 549.9M681.4 554.6L678.6 562.6M678.6 562.6L674.1 573.5M678.6 562.6L687.4 568.6M678.6 562.6L681.7 574.3M674.1 573.5L671.4 583.4M674.1 573.5L681.7 574.3M674.1 573.5L678.6 583.3M671.4 583.4L666.3 589.9M671.4 583.4L678.6 583.3M671.4 583.4L676.4 592.4M666.3 589.9L676.4 592.4M717.1 478.3L716.0 486.5M717.1 478.3L728.6 479.5M717.1 478.3L723.6 465.1M716.0 486.5L712.6 495.6M716.0 486.5L726.5 491.7M716.0 486.5L722.3 498.3M712.6 495.6L722.3 498.3M712.6 495.6L719.5 506.7M702.5 522.5L710.9 526.8M694.6 542.2L693.8 549.9M693.8 549.9L701.8 554.1M687.4 568.6L681.7 574.3M687.4 568.6L690.2 578.4M681.7 574.3L690.2 578.4M678.6 583.3L676.4 592.4M678.6 583.3L690.2 578.4M678.6 583.3L687.9 590.0M676.4 592.4L687.9 590.0M676.4 592.4L687.1 598.0M676.4 592.4L670.3 606.1M676.4 592.4L680.5 605.0M732.4 470.6L728.6 479.5M732.4 470.6L742.1 468.4M732.4 470.6L723.6 465.1M728.6 479.5L726.5 491.7M728.6 479.5L737.4 486.2M726.5 491.7L722.3 498.3M726.5 491.7L734.2 494.6M726.5 491.7L731.1 501.8M722.3 498.3L719.5 506.7M722.3 498.3L731.1 501.8M719.5 506.7L726.4 510.9M710.9 526.8L709.4 532.8M710.9 526.8L719.8 529.4M709.4 532.8L706.4 543.5M709.4 532.8L717.3 537.7M706.4 543.5L701.8 554.1M701.8 554.1L698.8 562.9M701.8 554.1L710.8 557.2M698.8 562.9L697.2 569.0M697.2 569.0L690.2 578.4M697.2 569.0L704.1 575.1M690.2 578.4L687.9 590.0M690.2 578.4L704.1 575.1M690.2 578.4L700.3 583.8M687.9 590.0L687.1 598.0M687.9 590.0L698.9 591.8M687.1 598.0L698.9 591.8M687.1 598.0L680.5 605.0M742.1 468.4L752.4 468.7M737.4 486.2L734.2 494.6M737.4 486.2L745.3 486.1M734.2 494.6L731.1 501.8M734.2 494.6L741.7 498.2M734.2 494.6L737.8 503.7M731.1 501.8L726.4 510.9M731.1 501.8L737.8 503.7M726.4 510.9L735.3 514.2M719.8 529.4L717.3 537.7M719.8 529.4L730.6 533.8M717.3 537.7L712.4 546.1M717.3 537.7L726.0 540.6M712.4 546.1L710.8 557.2M710.8 557.2L716.1 567.0M704.1 575.1L713.8 577.0M704.1 575.1L710.5 583.9M700.3 583.8L698.9 591.8M700.3 583.8L708.0 586.1M698.9 591.8L705.7 597.4M752.4 468.7L763.0 465.4M752.4 468.7L761.7 474.8M745.3 486.1L741.7 498.2M745.3 486.1L754.6 490.3M741.7 498.2L737.8 503.7M741.7 498.2L749.5 500.7M737.8 503.7L748.0 510.3M735.3 514.2L744.1 516.5M730.6 533.8L748.1 538.3M720.0 559.8L716.1 567.0M720.0 559.8L729.0 561.0M716.1 567.0L713.8 577.0M716.1 567.0L723.8 577.3M713.8 577.0L710.5 583.9M713.8 577.0L723.8 577.3M710.5 583.9L708.0 586.1M710.5 583.9L721.4 589.7M763.0 465.4L761.7 474.8M763.0 465.4L774.4 468.7M763.0 465.4L769.9 475.6M761.7 474.8L759.2 482.4M761.7 474.8L766.1 483.3M759.2 482.4L754.6 490.3M759.2 482.4L766.1 483.3M759.2 482.4L763.5 492.9M754.6 490.3L749.5 500.7M754.6 490.3L763.5 492.9M749.5 500.7L748.0 510.3M749.5 500.7L760.7 503.1M749.5 500.7L756.6 511.3M748.0 510.3L744.1 516.5M748.0 510.3L756.6 511.3M730.4 553.3L729.0 561.0M730.4 553.3L742.4 548.9M730.4 553.3L742.7 557.6M729.0 561.0L739.2 565.3M774.4 468.7L769.9 475.6M774.4 468.7L780.6 470.7M774.4 468.7L775.8 455.1M769.9 475.6L766.1 483.3M769.9 475.6L778.3 479.4M766.1 483.3L763.5 492.9M766.1 483.3L774.5 489.6M763.5 492.9L760.7 503.1M763.5 492.9L774.5 489.6M763.5 492.9L772.2 498.1M760.7 503.1L756.6 511.3M760.7 503.1L772.2 498.1M760.7 503.1L769.2 507.2M748.1 538.3L742.4 548.9M748.1 538.3L760.5 534.1M742.4 548.9L742.7 557.6M742.7 557.6L739.2 565.3M742.7 557.6L751.6 569.7M780.6 470.7L778.3 479.4M778.3 479.4L774.5 489.6M778.3 479.4L784.9 490.7M774.5 489.6L772.2 498.1M774.5 489.6L784.9 490.7M774.5 489.6L783.1 499.9M772.2 498.1L769.2 507.2M772.2 498.1L783.1 499.9M772.2 498.1L778.4 508.4M760.5 534.1L754.8 543.3M760.5 534.1L767.2 537.1M784.9 490.7L783.1 499.9M783.1 499.9L778.4 508.4M778.4 508.4L774.8 517.0M774.8 517.0L784.1 522.7M767.2 537.1L776.3 536.6M784.1 522.7L780.2 529.6M780.2 529.6L776.3 536.6M665.4 352.7L661.3 365.5M665.4 352.7L674.4 365.9M665.4 352.7L653.4 344.0M665.4 352.7L650.3 353.4M661.3 365.5L661.4 375.7M661.3 365.5L649.1 363.9M661.4 375.7L659.0 384.9M661.4 375.7L672.0 375.8M661.4 375.7L671.2 387.9M659.0 384.9L656.6 387.4M682.9 294.7L683.3 303.2M682.9 294.7L684.2 282.9M682.9 294.7L697.9 293.3M682.9 294.7L677.9 292.7M683.3 303.2L679.8 313.2M683.3 303.2L690.9 306.9M683.3 303.2L676.9 301.2M679.8 313.2L664.2 311.9M679.8 313.2L666.4 324.1M679.8 313.2L676.9 301.2M678.1 326.0L678.8 334.3M678.8 334.3L676.7 344.2M678.8 334.3L688.5 326.2M678.8 334.3L689.9 337.4M676.7 344.2L685.1 347.5M674.4 365.9L672.0 375.8M672.0 375.8L671.2 387.9M671.2 387.9L670.6 397.1M671.2 387.9L677.7 397.4M670.6 397.1L677.7 397.4M670.6 397.1L656.6 387.4M670.6 397.1L659.9 404.8M670.6 397.1L669.3 409.5M690.9 306.9L697.9 293.3M690.9 306.9L702.6 305.0M688.5 326.2L689.9 337.4M688.5 326.2L698.6 327.5M689.9 337.4L685.1 347.5M689.9 337.4L698.8 335.9M689.9 337.4L697.5 348.9M685.1 347.5L697.5 348.9M677.7 397.4L689.8 401.5M677.7 397.4L681.1 412.6M698.6 327.5L698.8 335.9M697.5 348.9L697.4 359.0M697.5 348.9L707.5 339.1M697.5 348.9L708.6 348.8M689.8 401.5L698.6 400.7M689.8 401.5L699.5 413.0M689.8 401.5L681.1 412.6M711.7 328.3L715.8 325.7M707.5 339.1L708.6 348.8M707.5 339.1L718.9 342.5M708.6 348.8L718.9 342.5M708.6 348.8L718.9 351.4M698.6 400.7L699.5 413.0M699.5 413.0L707.4 422.5M699.5 413.0L689.9 420.0M699.5 413.0L698.5 426.3M718.9 330.6L718.9 342.5M718.9 330.6L715.8 325.7M718.9 342.5L718.9 351.4M718.9 351.4L716.1 362.3M718.9 351.4L726.5 362.0M716.1 362.3L726.5 362.0M714.7 380.9L710.5 391.1M710.8 403.3L720.0 403.8M707.4 422.5L698.5 426.3M707.4 422.5L707.1 429.2M726.5 362.0L738.2 363.9M720.0 403.8L721.1 413.8M721.1 413.8L718.1 426.0M718.1 426.0L716.7 434.1M718.1 426.0L727.3 428.5M716.7 434.1L727.3 428.5M716.7 434.1L707.1 429.2M716.7 434.1L717.0 436.8M740.2 355.7L738.2 363.9M740.2 355.7L743.8 357.1M738.2 363.9L735.9 374.1M738.2 363.9L746.4 365.6M738.2 363.9L743.8 357.1M735.9 374.1L734.6 384.0M735.9 374.1L745.6 376.7M734.6 384.0L745.6 376.7M727.3 428.5L726.4 436.5M727.3 428.5L738.5 418.5M726.4 436.5L717.0 436.8M726.4 436.5L718.2 451.3M746.4 365.6L745.6 376.7M746.4 365.6L755.3 376.4M746.4 365.6L743.8 357.1M746.4 365.6L756.8 355.0M746.4 365.6L758.5 366.1M745.6 376.7L755.3 376.4M738.5 418.5L747.9 430.4M739.2 437.4L747.9 430.4M739.2 437.4L744.6 450.9M734.7 450.3L744.6 450.9M734.7 450.3L729.7 454.7M755.3 376.4L754.2 388.9M755.3 376.4L758.5 366.1M755.3 376.4L761.5 374.9M754.2 388.9L766.5 390.3M754.3 397.0L766.5 390.3M751.2 410.2L773.5 413.1M751.2 410.2L771.7 423.0M744.6 450.9L757.1 452.7M766.5 390.3L775.9 401.5M766.5 390.3L761.5 374.9M766.5 390.3L771.8 386.6M759.5 432.9L769.0 441.8M775.9 401.5L773.5 413.1M775.9 401.5L783.3 412.6M775.9 401.5L771.8 386.6M773.5 413.1L771.7 423.0M773.5 413.1L783.3 412.6M771.7 423.0L780.6 425.4M769.0 441.8L765.3 453.6M769.0 441.8L779.2 434.6M769.0 441.8L777.4 445.4M765.3 453.6L775.8 455.1M783.3 412.6L780.6 425.4M780.6 425.4L779.2 434.6M779.2 434.6L777.4 445.4M777.4 445.4L775.8 455.1M684.2 282.9L698.3 280.9M684.2 282.9L697.9 293.3M684.2 282.9L681.2 281.2M684.2 282.9L677.9 292.7M698.3 280.9L697.9 293.3M698.3 280.9L709.1 279.9M697.9 293.3L710.8 291.7M702.6 305.0L710.7 302.1M709.1 279.9L710.8 291.7M709.1 279.9L719.0 279.7M710.8 291.7L710.7 302.1M710.8 291.7L719.0 279.7M710.8 291.7L720.0 291.1M710.7 302.1L724.5 301.8M715.8 325.7L724.1 311.7M715.8 325.7L725.7 325.2M724.5 301.8L735.8 297.7M724.1 311.7L725.7 325.2M733.1 286.8L735.8 297.7M733.1 286.8L742.3 285.5M735.8 297.7L742.3 285.5M738.5 322.2L742.5 334.5M738.5 322.2L749.6 318.9M738.5 322.2L752.2 329.7M742.5 334.5L744.2 345.0M742.5 334.5L752.2 329.7M743.8 357.1L756.8 355.0M742.3 285.5L754.4 283.8M748.2 308.5L749.6 318.9M748.2 308.5L761.0 307.8M749.6 318.9L752.2 329.7M752.2 329.7L764.4 339.9M756.8 355.0L758.5 366.1M756.8 355.0L769.0 352.7M756.8 355.0L767.7 361.7M758.5 366.1L761.5 374.9M758.5 366.1L767.7 361.7M761.5 374.9L771.7 375.1M754.4 283.8L756.4 293.6M756.4 293.6L761.0 307.8M756.4 293.6L767.0 283.8M764.4 339.9L769.0 352.7M764.4 339.9L772.8 326.3M764.4 339.9L776.5 340.3M769.0 352.7L767.7 361.7M769.0 352.7L778.4 350.3M767.7 361.7L771.7 375.1M767.7 361.7L782.0 360.4M771.7 375.1L771.8 386.6M771.7 375.1L784.4 371.8M771.7 375.1L784.8 384.8M771.8 386.6L784.8 384.8M767.0 283.8L779.0 279.3M767.0 283.8L779.4 291.2M773.6 317.6L772.8 326.3M773.6 317.6L784.0 313.2M773.6 317.6L784.9 324.9M772.8 326.3L776.5 340.3M772.8 326.3L784.9 324.9M776.5 340.3L778.4 350.3M778.4 350.3L782.0 360.4M782.0 360.4L784.4 371.8M784.4 371.8L784.8 384.8M779.0 279.3L779.4 291.2M779.4 291.2L782.9 301.2M782.9 301.2L784.0 313.2M784.0 313.2L784.9 324.9M708.0 586.1L705.7 597.4M708.0 586.1L718.1 599.0M704.1 610.4L700.3 622.1M700.3 622.1L696.6 634.8M700.3 622.1L707.8 637.8M700.3 622.1L684.7 615.3M700.3 622.1L686.9 625.7M696.6 634.8L707.8 637.8M696.6 634.8L686.9 625.7M696.6 634.8L691.1 639.0M723.8 577.3L721.4 589.7M721.4 589.7L718.1 599.0M721.4 589.7L733.5 591.9M721.4 589.7L730.5 602.5M718.1 599.0L716.4 612.6M716.4 612.6L730.5 602.5M716.4 612.6L735.5 633.1M707.8 637.8L702.3 662.7M707.8 637.8L735.5 633.1M707.8 637.8L733.5 644.5M702.3 662.7L733.5 644.5M702.3 662.7L683.8 664.3M702.3 662.7L691.1 639.0M702.3 662.7L697.1 672.9M739.2 565.3L751.6 569.7M733.5 591.9L730.5 602.5M733.5 591.9L746.1 594.3M730.5 602.5L735.5 633.1M711.5 680.1L723.4 682.5M751.6 569.7L764.2 571.5M746.1 594.3L759.8 597.9M735.5 633.1L733.5 644.5M735.5 633.1L750.1 637.3M733.5 644.5L750.1 637.3M733.5 644.5L747.5 648.7M723.4 682.5L744.3 660.3M723.4 682.5L749.9 676.7M764.2 571.5L764.5 585.1M764.2 571.5L779.9 577.5M764.5 585.1L759.8 597.9M764.5 585.1L779.9 577.5M764.5 585.1L777.0 590.3M750.1 637.3L747.5 648.7M750.1 637.3L776.5 631.2M747.5 648.7L744.3 660.3M744.3 660.3L749.9 676.7M744.3 660.3L768.9 667.4M784.5 551.3L782.2 565.8M782.2 565.8L779.9 577.5M779.9 577.5L777.0 590.3M777.0 590.3L769.9 603.0M749.9 676.7L764.2 679.1M781.2 617.9L776.5 631.2M776.5 631.2L783.1 659.7M768.9 667.4L764.2 679.1M768.9 667.4L783.1 659.7M768.9 667.4L780.4 673.0M783.1 659.7L780.4 673.0M605.8 393.9L598.6 404.2M605.8 393.9L614.0 400.6M605.8 393.9L603.1 383.1M598.6 404.2L594.9 411.9M598.6 404.2L614.0 400.6M598.6 404.2L607.3 410.4M594.9 411.9L590.9 422.3M594.9 411.9L607.3 410.4M594.9 411.9L603.7 417.5M590.9 422.3L583.2 431.3M590.9 422.3L598.1 427.4M583.2 431.3L577.3 442.9M583.2 431.3L594.4 437.6M577.3 442.9L573.8 439.4M577.3 442.9L572.2 450.4M614.0 400.6L607.3 410.4M614.0 400.6L627.5 396.3M614.0 400.6L622.6 406.1M607.3 410.4L603.7 417.5M607.3 410.4L619.7 415.7M603.7 417.5L598.1 427.4M603.7 417.5L613.3 424.3M598.1 427.4L613.3 424.3M598.1 427.4L608.0 435.1M594.4 437.6L589.0 447.7M594.4 437.6L608.0 435.1M594.4 437.6L601.0 443.8M589.0 447.7L596.1 451.9M582.0 455.9L572.2 450.4M582.0 455.9L579.7 461.6M627.5 396.3L622.6 406.1M627.5 396.3L637.8 401.3M622.6 406.1L619.7 415.7M622.6 406.1L633.1 412.4M619.7 415.7L613.3 424.3M619.7 415.7L626.5 418.9M608.0 435.1L611.1 447.2M601.0 443.8L596.1 451.9M601.0 443.8L611.1 447.2M596.1 451.9L591.3 460.0M596.1 451.9L604.7 457.5M591.3 460.0L587.1 470.3M591.3 460.0L599.1 465.4M591.3 460.0L579.7 461.6M587.1 470.3L599.1 465.4M587.1 470.3L596.0 475.7M587.1 470.3L590.5 483.5M587.1 470.3L579.7 461.6M647.5 385.6L647.4 378.4M644.5 392.0L637.8 401.3M644.5 392.0L651.5 399.0M637.8 401.3L633.1 412.4M637.8 401.3L651.5 399.0M637.8 401.3L646.0 408.8M633.1 412.4L626.5 418.9M633.1 412.4L642.1 416.8M626.5 418.9L622.8 427.8M626.5 418.9L634.3 427.0M622.8 427.8L634.3 427.0M615.7 439.6L611.1 447.2M615.7 439.6L627.3 442.7M615.7 439.6L618.9 451.3M611.1 447.2L604.7 457.5M604.7 457.5L599.1 465.4M604.7 457.5L608.1 470.0M599.1 465.4L596.0 475.7M599.1 465.4L608.1 470.0M596.0 475.7L590.5 483.5M590.5 483.5L582.6 486.1M651.5 399.0L646.0 408.8M651.5 399.0L659.9 404.8M646.0 408.8L642.1 416.8M646.0 408.8L659.9 404.8M646.0 408.8L656.6 414.4M646.0 408.8L650.0 420.5M642.1 416.8L634.3 427.0M642.1 416.8L650.0 420.5M634.3 427.0L632.1 433.1M634.3 427.0L646.2 431.8M632.1 433.1L627.3 442.7M632.1 433.1L646.2 431.8M632.1 433.1L641.5 441.8M627.3 442.7L618.9 451.3M627.3 442.7L635.3 447.2M659.9 404.8L656.6 414.4M659.9 404.8L669.3 409.5M656.6 414.4L650.0 420.5M656.6 414.4L666.3 416.4M650.0 420.5L646.2 431.8M646.2 431.8L641.5 441.8M641.5 441.8L635.3 447.2M641.5 441.8L650.3 446.7M614.4 485.0L627.6 481.3M607.6 495.6L601.9 504.1M607.6 495.6L619.0 499.6M669.3 409.5L666.3 416.4M669.3 409.5L681.1 412.6M650.3 446.7L657.3 449.7M650.3 446.7L652.6 458.3M633.3 470.9L627.6 481.3M633.3 470.9L643.5 479.7M627.6 481.3L622.6 492.0M622.6 492.0L619.0 499.6M619.0 499.6L625.0 504.9M681.1 412.6L689.9 420.0M667.3 433.1L664.8 442.4M667.3 433.1L678.0 437.4M664.8 442.4L671.2 445.8M657.3 449.7L652.6 458.3M657.3 449.7L662.6 463.1M652.6 458.3L662.6 463.1M643.5 479.7L635.6 488.2M643.5 479.7L650.0 484.3M635.6 488.2L646.5 492.3M625.0 504.9L641.3 501.2M689.9 420.0L698.5 426.3M689.9 420.0L691.6 432.7M678.0 437.4L671.2 445.8M678.0 437.4L686.5 441.0M671.2 445.8L683.4 450.9M662.6 463.1L677.9 462.1M650.0 484.3L646.5 492.3M646.5 492.3L641.3 501.2M698.5 426.3L691.6 432.7M698.5 426.3L707.1 429.2M691.6 432.7L686.5 441.0M683.4 450.9L677.9 462.1M683.4 450.9L692.0 455.8M683.4 450.9L686.1 465.7M677.9 462.1L686.1 465.7M707.1 429.2L710.2 443.6M686.1 465.7L693.3 473.3M717.0 436.8L710.2 443.6M717.0 436.8L718.2 451.3M710.2 443.6L704.5 455.2M710.2 443.6L718.2 451.3M704.5 455.2L699.2 462.2M699.2 462.2L693.3 473.3M699.2 462.2L709.0 467.0M718.2 451.3L714.3 458.4M718.2 451.3L729.7 454.7M423.3 522.2L433.8 519.6M423.3 522.2L416.1 521.4M406.6 441.4L400.7 438.9M406.6 441.4L414.4 437.5M433.8 519.6L437.4 529.1M433.9 452.0L436.2 463.6M433.9 452.0L444.3 451.0M436.2 463.6L445.3 460.8M437.4 439.6L444.3 451.0M437.4 439.6L434.6 426.9M444.3 451.0L445.3 460.8M450.2 468.6L459.8 464.8M450.0 435.1L459.9 431.7M450.0 435.1L462.3 440.7M467.7 484.2L471.9 479.8M467.7 484.2L477.9 493.3M459.9 431.7L462.3 440.7M459.9 431.7L451.6 421.5M459.9 431.7L473.2 434.9M462.3 440.7L473.2 434.9M462.3 440.7L468.0 446.2M465.2 450.5L468.0 446.2M384.0 349.6L391.8 354.1M372.1 365.9L364.2 375.6M372.1 365.9L378.1 370.8M364.2 375.6L355.8 383.2M364.2 375.6L378.1 370.8M355.8 383.2L352.1 392.2M352.1 392.2L346.5 403.1M352.1 392.2L360.0 398.6M346.5 403.1L339.4 409.3M346.5 403.1L360.0 398.6M346.5 403.1L353.2 409.3M339.4 409.3L348.0 417.0M386.2 364.1L378.1 370.8M386.2 364.1L393.9 369.6M378.1 370.8L380.2 386.4M353.2 409.3L348.0 417.0M353.2 409.3L364.9 414.3M353.2 409.3L356.4 422.3M348.0 417.0L356.4 422.3M393.9 369.6L402.6 374.7M380.2 386.4L389.4 394.1M375.5 398.2L371.1 405.1M371.1 405.1L364.9 414.3M371.1 405.1L376.9 412.0M364.9 414.3L356.4 422.3M411.1 368.2L402.6 374.7M389.4 394.1L399.6 398.1M376.9 412.0L387.4 419.1M405.7 389.1L399.6 398.1M405.7 389.1L413.6 399.1M399.6 398.1L394.2 409.0M394.2 409.0L387.4 419.1M394.2 409.0L402.0 416.3M387.4 419.1L382.3 427.2M387.4 419.1L402.0 416.3M387.4 419.1L398.2 424.4M382.3 427.2L376.4 434.8M382.3 427.2L388.9 432.7M376.4 434.8L388.9 432.7M427.3 377.6L421.3 389.1M427.3 377.6L436.9 384.0M421.3 389.1L413.6 399.1M421.3 389.1L431.9 393.2M421.3 389.1L425.2 403.9M413.6 399.1L409.1 405.2M409.1 405.2L419.6 414.1M409.1 405.2L412.8 420.4M402.0 416.3L398.2 424.4M402.0 416.3L412.8 420.4M398.2 424.4L388.9 432.7M398.2 424.4L400.7 438.9M388.9 432.7L400.7 438.9M441.8 378.5L436.9 384.0M436.9 384.0L431.9 393.2M436.9 384.0L447.2 390.1M431.9 393.2L425.2 403.9M425.2 403.9L419.6 414.1M425.2 403.9L434.0 409.2M419.6 414.1L412.8 420.4M419.6 414.1L434.0 409.2M419.6 414.1L427.6 420.3M447.2 390.1L461.4 390.4M447.2 390.1L453.7 398.2M434.0 409.2L427.6 420.3M434.0 409.2L448.2 405.6M434.0 409.2L443.2 415.0M427.6 420.3L434.6 426.9M461.4 390.4L453.7 398.2M461.4 390.4L464.5 403.2M453.7 398.2L464.5 403.2M448.2 405.6L443.2 415.0M448.2 405.6L457.5 415.1M443.2 415.0L434.6 426.9M443.2 415.0L451.6 421.5M434.6 426.9L451.6 421.5M585.8 350.8L584.1 361.7M585.8 350.8L594.0 362.6M584.1 361.7L594.0 362.6M601.1 295.7L600.1 308.0M601.1 295.7L611.0 297.2M600.1 308.0L609.5 308.6M594.0 362.6L593.6 371.0M594.0 362.6L606.6 360.9M593.6 371.0L603.3 373.5M613.7 285.9L625.7 286.5M611.0 297.2L620.5 309.5M611.0 297.2L632.9 298.9M609.5 308.6L608.4 327.3M609.5 308.6L620.5 309.5M609.5 308.6L619.1 320.7M608.4 327.3L609.4 339.4M608.4 327.3L619.1 320.7M608.4 327.3L619.4 331.5M609.4 339.4L619.4 331.5M606.6 360.9L603.3 373.5M606.6 360.9L618.2 363.0M603.3 373.5L603.1 383.1M625.7 286.5L636.0 289.0M625.7 286.5L632.9 298.9M620.5 309.5L619.1 320.7M620.5 309.5L631.8 307.3M620.5 309.5L630.8 318.5M619.1 320.7L619.4 331.5M619.1 320.7L630.8 318.5M617.3 351.1L618.2 363.0M617.3 351.1L627.4 352.5M618.2 363.0L627.4 352.5M618.2 363.0L629.1 363.7M636.0 289.0L644.9 287.3M632.9 298.9L631.8 307.3M631.0 342.8L627.4 352.5M631.0 342.8L639.8 341.7M627.4 352.5L629.1 363.7M629.1 363.7L628.6 373.8M629.1 363.7L638.4 365.6M628.6 373.8L638.4 365.6M646.7 278.7L644.9 287.3M646.7 278.7L655.0 288.7M644.9 287.3L655.0 288.7M644.9 309.3L653.7 311.8M643.6 330.8L639.8 341.7M643.6 330.8L653.7 334.2M639.8 341.7L653.4 344.0M639.8 341.7L650.3 353.4M638.4 365.6L649.1 363.9M655.0 288.7L657.6 299.5M655.0 288.7L666.6 289.4M657.6 299.5L653.7 311.8M657.6 299.5L666.6 289.4M657.6 299.5L666.6 300.9M657.6 299.5L664.2 311.9M653.7 311.8L664.2 311.9M653.7 334.2L653.4 344.0M653.7 334.2L663.8 334.9M653.4 344.0L650.3 353.4M650.3 353.4L649.1 363.9M668.1 280.8L666.6 289.4M666.6 289.4L666.6 300.9M666.6 289.4L677.9 292.7M666.6 300.9L676.9 301.2M664.2 311.9L666.4 324.1M681.2 281.2L677.9 292.7M677.9 292.7L676.9 301.2M476.5 425.4L473.2 434.9M476.5 425.4L487.0 426.3M473.2 434.9L468.0 446.2M473.2 434.9L482.5 436.1M473.2 434.9L479.3 446.5M468.0 446.2L479.3 446.5M487.0 426.3L482.5 436.1M482.5 436.1L479.3 446.5M482.5 436.1L493.2 441.2M479.3 446.5L490.0 449.9M471.9 479.8L481.2 481.1M471.9 479.8L477.9 493.3M493.2 441.2L490.0 449.9M493.2 441.2L504.0 442.5M490.0 449.9L488.0 459.6M488.0 459.6L501.3 454.5M487.2 472.2L481.2 481.1M487.2 472.2L497.8 464.3M487.2 472.2L497.0 476.7M487.2 472.2L491.3 486.7M481.2 481.1L491.3 486.7M506.5 431.5L518.6 436.0M504.0 442.5L501.3 454.5M504.0 442.5L518.6 436.0M504.0 442.5L516.7 446.8M501.3 454.5L497.8 464.3M497.8 464.3L497.0 476.7M497.8 464.3L508.3 467.2M497.0 476.7L491.3 486.7M497.0 476.7L508.3 467.2M497.0 476.7L508.3 479.2M491.3 486.7L491.0 496.9M491.3 486.7L503.0 488.9M491.0 496.9L503.0 488.9M491.0 496.9L501.4 499.4M518.6 436.0L530.3 438.0M516.7 446.8L511.0 457.4M516.7 446.8L523.8 448.3M511.0 457.4L508.3 467.2M511.0 457.4L523.0 457.7M508.3 467.2L508.3 479.2M508.3 467.2L520.3 470.7M508.3 479.2L503.0 488.9M508.3 479.2L516.0 481.1M503.0 488.9L501.4 499.4M503.0 488.9L513.5 493.0M501.4 499.4L513.5 493.0M501.4 499.4L507.2 510.9M530.3 438.0L523.8 448.3M530.3 438.0L537.3 441.6M523.8 448.3L523.0 457.7M523.8 448.3L535.9 450.5M523.0 457.7L535.9 450.5M523.0 457.7L532.1 463.5M520.3 470.7L532.1 463.5M520.3 470.7L528.9 474.5M516.0 481.1L528.9 474.5M516.0 481.1L529.4 484.5M513.5 493.0L511.0 502.5M513.5 493.0L525.5 493.4M511.0 502.5L507.2 510.9M511.0 502.5L520.5 505.6M537.3 441.6L535.9 450.5M537.3 441.6L550.2 444.7M535.9 450.5L532.1 463.5M535.9 450.5L546.9 453.9M532.1 463.5L528.9 474.5M532.1 463.5L546.9 453.9M532.1 463.5L545.2 466.9M532.1 463.5L542.9 474.3M528.9 474.5L542.9 474.3M529.4 484.5L525.5 493.4M529.4 484.5L537.2 484.9M525.5 493.4L520.5 505.6M525.5 493.4L536.1 498.5M550.2 444.7L546.9 453.9M550.2 444.7L557.2 456.5M546.9 453.9L545.2 466.9M546.9 453.9L557.2 456.5M546.9 453.9L553.9 466.5M545.2 466.9L542.9 474.3M545.2 466.9L553.9 466.5M542.9 474.3L537.2 484.9M542.9 474.3L551.4 477.2M537.2 484.9L536.1 498.5M537.2 484.9L550.8 487.4M536.1 498.5L532.8 506.4M536.1 498.5L550.8 487.4M536.1 498.5L548.0 501.1M560.3 446.7L557.2 456.5M560.3 446.7L572.2 450.4M560.3 446.7L568.3 459.2M553.9 466.5L551.4 477.2M553.9 466.5L566.1 472.6M551.4 477.2L561.6 481.6M550.8 487.4L548.0 501.1M550.8 487.4L561.6 481.6M572.2 450.4L568.3 459.2M566.1 472.6L561.6 481.6M566.1 472.6L572.2 482.8M561.6 481.6L560.9 493.0M561.6 481.6L572.2 482.8M560.9 493.0L572.2 482.8M560.9 493.0L572.1 496.2M572.2 482.8L572.1 496.2M572.2 482.8L582.6 486.1M572.1 496.2L582.6 486.1M331.1 515.5L339.7 509.9M331.1 515.5L344.5 518.1M339.0 533.0L352.2 535.3M339.7 509.9L344.5 518.1M344.5 518.1L350.9 510.9M352.2 535.3L363.7 529.6M360.5 545.2L376.8 554.8M372.5 569.1L377.2 576.7M372.5 569.1L376.8 554.8M344.4 495.9L351.7 490.2M344.4 495.9L356.2 499.3M350.9 510.9L356.2 499.3M363.7 529.6L365.1 516.9M363.7 529.6L370.4 526.6M348.1 482.7L351.7 490.2M351.7 490.2L356.2 499.3M351.7 490.2L358.4 485.2M356.2 499.3L360.0 509.3M356.2 499.3L370.6 501.8M360.0 509.3L370.6 501.8M365.1 516.9L370.4 526.6M394.6 567.3L399.2 554.1M394.6 567.3L406.0 563.7M355.2 476.2L358.4 485.2M355.2 476.2L364.4 471.8M355.2 476.2L367.1 480.5M370.6 501.8L378.2 499.5M399.2 554.1L406.0 563.7M399.2 554.1L408.8 551.3M406.0 563.7L412.4 558.2M364.4 471.8L367.1 480.5M367.1 480.5L372.5 490.8M372.5 490.8L378.2 499.5M378.2 499.5L382.2 505.0M382.2 505.0L389.7 513.3M389.7 513.3L402.9 518.9M396.9 533.7L404.1 540.1M396.9 533.7L407.8 529.0M404.1 540.1L408.8 551.3M404.1 540.1L407.8 529.0M408.8 551.3L412.4 558.2M402.9 518.9L407.8 529.0M402.9 518.9L416.1 521.4M407.8 529.0L413.4 537.2M407.8 529.0L416.1 521.4M413.4 537.2L417.9 546.1M417.9 546.1L426.1 540.2M421.1 532.8L426.1 540.2M426.1 540.2L434.0 535.5M550.4 674.9L560.5 672.5M560.5 672.5L564.2 683.4M576.2 682.0L589.6 679.4M582.6 656.1L589.9 641.2M582.6 656.1L595.3 653.6M589.6 679.4L601.3 674.8M589.9 641.2L595.3 653.6M589.9 641.2L603.8 638.6M595.3 653.6L597.2 663.2M595.3 653.6L604.6 648.9M597.2 663.2L601.3 674.8M601.3 674.8L610.6 673.1M603.8 638.6L604.6 648.9M603.8 638.6L614.9 636.3M607.4 659.4L610.6 673.1M607.4 659.4L618.6 659.3M610.6 673.1L618.6 659.3M610.6 673.1L626.9 680.1M612.4 622.9L614.9 636.3M612.4 622.9L622.3 621.7M614.9 636.3L624.5 631.7M626.9 680.1L639.3 678.5M620.9 608.4L622.3 621.7M620.9 608.4L630.5 604.9M622.3 621.7L624.5 631.7M622.3 621.7L633.1 615.8M624.5 631.7L630.1 642.0M639.3 678.5L645.5 665.1M630.5 604.9L633.1 615.8M630.5 604.9L639.9 592.2M643.2 651.4L656.3 647.9M643.2 651.4L656.7 660.3M645.5 665.1L656.7 660.3M639.9 592.2L649.5 587.2M651.6 635.6L656.3 647.9M651.6 635.6L662.3 633.9M656.3 647.9L656.7 660.3M656.3 647.9L662.3 633.9M656.3 647.9L665.6 646.0M660.3 670.9L663.8 682.1M660.3 670.9L671.8 670.2M663.8 682.1L676.0 680.1M658.7 610.8L661.7 622.7M658.7 610.8L664.2 597.5M658.7 610.8L670.3 606.1M658.7 610.8L670.8 618.1M661.7 622.7L662.3 633.9M661.7 622.7L670.8 618.1M662.3 633.9L665.6 646.0M665.6 646.0L670.1 658.5M665.6 646.0L678.8 640.6M665.6 646.0L679.3 653.4M670.1 658.5L671.8 670.2M670.1 658.5L679.3 653.4M670.1 658.5L683.8 664.3M671.8 670.2L676.0 680.1M671.8 670.2L683.8 664.3M676.0 680.1L688.0 676.3M664.2 597.5L670.3 606.1M670.3 606.1L670.8 618.1M670.3 606.1L680.5 605.0M670.8 618.1L674.7 629.1M670.8 618.1L684.7 615.3M674.7 629.1L686.9 625.7M678.8 640.6L679.3 653.4M678.8 640.6L686.9 625.7M678.8 640.6L691.1 639.0M679.3 653.4L683.8 664.3M683.8 664.3L688.0 676.3M688.0 676.3L697.1 672.9M680.5 605.0L684.7 615.3M684.7 615.3L686.9 625.7M686.9 625.7L691.1 639.0M368.0 492.9L377.5 508.2M373.1 489.7L382.6 505.0M378.1 486.5L387.7 501.8M383.2 483.4L392.8 498.6M388.3 480.2L397.9 495.5M393.4 477.0L402.9 492.3M398.5 473.8L408.0 489.1M368.0 492.9L398.5 473.8M371.1 498.0L401.7 478.9M374.3 503.1L404.9 484.0M377.5 508.2L408.0 489.1M368.4 485.2L393.1 472.4L412.8 481.3L410.4 498.0L388.1 506.9L372.3 498.0L368.4 485.2M331.4 402.3L310.2 422.0M366.4 436.8L369.4 473.4M393.1 445.2L389.1 472.4M415.3 448.2L411.8 481.3M462.2 484.7L443.4 520.2M486.9 503.5L482.4 530.1M511.5 514.3L510.5 547.4M546.1 510.9L541.6 542.5M568.3 502.0L560.9 535.5M590.5 493.6L582.1 525.7M612.7 468.9L611.2 487.2M644.8 455.1L639.9 474.8M679.4 472.4L673.4 490.1M710.0 502.0L706.5 515.3M743.5 518.3L738.6 535.5M291.9 376.1L284.5 402.3" fill="none" stroke="#bcbcb6" stroke-width="0.85" stroke-linejoin="round" opacity="0.85"/><path d="M259.4 358.5L274.7 360.5L331.4 401.0L336.9 408.4L366.0 435.5L388.2 443.0L408.0 443.4L437.6 457.8L445.0 468.1L459.8 477.5L464.7 485.4M259.4 383.7L301.8 419.5L324.0 436.0L348.7 457.8L368.5 475.0L373.4 485.4M333.9 401.0L348.7 391.6L388.2 369.4L422.8 345.5L426.5 331.9L445.0 309.7L464.7 302.3L496.8 289.9M638.3 289.9L637.3 317.1L635.4 346.7L638.3 364.0L658.1 376.3L668.0 393.6L670.9 413.3L648.2 423.2L633.4 438.0L618.6 447.9L603.8 457.8L593.9 485.4M707.4 289.9L711.1 304.7L716.1 322.0L724.7 341.8L730.1 359.0L725.2 383.7L712.9 408.4L702.5 433.1L693.1 462.7L682.8 485.4M623.5 445.4L648.2 457.8L682.8 477.5L707.4 485.4M510.0 368.4L539.6 368.9L571.7 367.9L608.7 366.4L616.1 370.1M368.5 480.0L378.3 499.7L388.2 512.6L408.0 517.5L437.6 517.0L462.2 524.4L486.9 532.3L520.0 539.2M457.3 484.9L472.1 499.7L496.8 512.1L520.0 517.0M346.3 608.3L363.5 599.0L388.2 589.1L422.8 596.0L442.5 608.3L472.1 618.2L501.7 628.1L520.0 625.6M510.0 512.1L547.0 509.6L584.0 494.8L608.7 480.0M510.0 549.1L539.6 546.6L584.0 524.4L603.8 494.8L613.7 480.0M697.6 480.0L705.0 504.7L714.8 512.1L744.5 517.0L772.6 504.7M707.4 517.0L714.8 541.7L732.1 561.4L756.8 573.8L772.6 578.7M593.9 536.8L603.8 566.4L616.1 605.9L626.0 628.1L648.2 657.7L658.1 672.5M459.8 618.2L462.2 640.4L450.4 650.3L451.1 672.5M462.2 640.4L468.4 652.8L467.2 672.5" fill="none" stroke="#c2c2be" stroke-width="2.2" stroke-linejoin="round" stroke-linecap="round" opacity="0.97"/><path d="M350.0 288.7L351.2 304.7L345.0 309.7L346.3 319.6L341.3 322.5L333.9 321.5L324.0 323.7L317.9 319.6L316.1 312.6L320.1 308.9L315.4 308.9L309.2 324.5L300.6 328.9L296.9 335.6L299.4 343.0L296.9 349.7L274.7 352.9L259.4 359.5M259.4 596.5L267.3 588.6L276.7 579.2L279.6 575.0L283.3 577.5L282.1 583.7L287.0 588.6L292.0 585.6L293.4 591.1L296.4 594.8L289.5 600.4L288.3 603.4L293.4 608.3L290.7 613.3L299.4 628.1L309.2 647.8L314.7 654.7L311.7 660.2L319.1 662.1L323.3 667.6L316.6 672.0M539.1 672.0L547.0 665.1L553.2 663.9L555.9 657.7L553.2 651.3L568.0 649.3L571.7 660.2L578.4 672.0M616.9 672.0L623.5 663.9L623.5 655.7L628.5 654.7L633.4 657.7L633.4 665.1L636.4 672.0" fill="none" stroke="#1f7ae0" stroke-width="1.8" stroke-linejoin="round"/><radialGradient id="dotg" cx="0.5" cy="0.45" r="0.5"><stop offset="0" stop-color="#b4245e"/><stop offset="0.45" stop-color="#8a1640"/><stop offset="1" stop-color="#4e0822"/></radialGradient><g fill="url(#dotg)" stroke="#4a0a20" stroke-width="0.35"><circle cx="367.2" cy="302.8" r="1.7"/><circle cx="377.8" cy="303.8" r="1.7"/><circle cx="376.9" cy="308.2" r="1.7"/><circle cx="388.5" cy="300.5" r="1.7"/><circle cx="384.5" cy="317.1" r="1.7"/><circle cx="374.1" cy="320.8" r="1.7"/><circle cx="381.1" cy="327.7" r="1.7"/><circle cx="397.6" cy="332.4" r="1.7"/><circle cx="403.5" cy="339.8" r="1.7"/><circle cx="363.5" cy="339.5" r="1.7"/><circle cx="373.6" cy="340.8" r="1.7"/><circle cx="342.1" cy="343.0" r="1.7"/><circle cx="350.0" cy="348.9" r="1.7"/><circle cx="351.2" cy="350.2" r="1.7"/><circle cx="355.6" cy="357.3" r="1.7"/><circle cx="328.5" cy="335.3" r="1.7"/><circle cx="320.6" cy="326.7" r="1.7"/><circle cx="424.7" cy="291.2" r="1.7"/><circle cx="431.9" cy="304.3" r="1.7"/><circle cx="450.4" cy="304.3" r="1.7"/><circle cx="473.6" cy="294.1" r="1.7"/><circle cx="484.2" cy="302.0" r="1.7"/><circle cx="440.0" cy="322.0" r="1.7"/><circle cx="452.9" cy="334.9" r="1.7"/><circle cx="454.1" cy="336.3" r="1.7"/><circle cx="424.7" cy="344.2" r="1.7"/><circle cx="402.0" cy="357.6" r="1.7"/><circle cx="395.1" cy="364.5" r="1.7"/><circle cx="423.7" cy="364.0" r="1.7"/><circle cx="417.8" cy="373.1" r="1.7"/><circle cx="416.3" cy="375.1" r="1.7"/><circle cx="367.7" cy="379.8" r="1.7"/><circle cx="387.2" cy="379.3" r="1.7"/><circle cx="400.3" cy="383.5" r="1.7"/><circle cx="410.7" cy="386.2" r="1.7"/><circle cx="367.5" cy="387.9" r="1.7"/><circle cx="375.4" cy="391.4" r="1.7"/><circle cx="384.0" cy="400.5" r="1.7"/><circle cx="382.5" cy="402.0" r="1.7"/><circle cx="362.8" cy="403.2" r="1.7"/><circle cx="404.5" cy="400.5" r="1.7"/><circle cx="435.8" cy="397.3" r="1.7"/><circle cx="489.4" cy="361.0" r="1.7"/><circle cx="518.3" cy="358.1" r="1.7"/><circle cx="500.7" cy="404.7" r="1.7"/><circle cx="506.2" cy="407.7" r="1.7"/><circle cx="512.8" cy="415.1" r="1.7"/><circle cx="494.1" cy="420.2" r="1.7"/><circle cx="501.5" cy="426.2" r="1.7"/><circle cx="496.1" cy="433.6" r="1.7"/><circle cx="501.2" cy="434.8" r="1.7"/><circle cx="466.2" cy="424.4" r="1.7"/><circle cx="416.8" cy="426.9" r="1.7"/><circle cx="408.0" cy="434.1" r="1.7"/><circle cx="443.0" cy="436.5" r="1.7"/><circle cx="429.7" cy="445.9" r="1.7"/><circle cx="450.9" cy="448.1" r="1.7"/><circle cx="476.6" cy="454.1" r="1.7"/><circle cx="481.0" cy="465.9" r="1.7"/><circle cx="473.6" cy="468.4" r="1.7"/><circle cx="445.0" cy="468.1" r="1.7"/><circle cx="462.7" cy="480.0" r="1.7"/><circle cx="371.7" cy="416.5" r="1.7"/><circle cx="373.9" cy="428.4" r="1.7"/><circle cx="369.5" cy="430.4" r="1.7"/><circle cx="267.8" cy="408.6" r="1.7"/><circle cx="273.4" cy="423.9" r="1.7"/><circle cx="268.3" cy="430.4" r="1.7"/><circle cx="267.0" cy="435.3" r="1.7"/><circle cx="286.5" cy="433.3" r="1.7"/><circle cx="294.7" cy="427.2" r="1.7"/><circle cx="295.7" cy="428.9" r="1.7"/><circle cx="298.6" cy="433.6" r="1.7"/><circle cx="297.6" cy="435.3" r="1.7"/><circle cx="307.3" cy="437.8" r="1.7"/><circle cx="308.7" cy="439.5" r="1.7"/><circle cx="268.8" cy="446.7" r="1.7"/><circle cx="292.7" cy="454.8" r="1.7"/><circle cx="268.5" cy="465.4" r="1.7"/><circle cx="294.7" cy="474.8" r="1.7"/><circle cx="330.5" cy="458.3" r="1.7"/><circle cx="344.0" cy="463.2" r="1.7"/><circle cx="342.8" cy="465.9" r="1.7"/><circle cx="333.2" cy="477.8" r="1.7"/><circle cx="261.4" cy="481.7" r="1.7"/><circle cx="268.0" cy="480.7" r="1.7"/><circle cx="273.7" cy="480.2" r="1.7"/><circle cx="390.2" cy="478.5" r="1.7"/><circle cx="401.5" cy="479.7" r="1.7"/><circle cx="590.7" cy="291.2" r="1.7"/><circle cx="606.5" cy="289.4" r="1.7"/><circle cx="637.3" cy="304.0" r="1.7"/><circle cx="637.3" cy="313.9" r="1.7"/><circle cx="639.3" cy="314.6" r="1.7"/><circle cx="637.3" cy="321.3" r="1.7"/><circle cx="651.4" cy="324.7" r="1.7"/><circle cx="628.5" cy="331.2" r="1.7"/><circle cx="620.3" cy="342.3" r="1.7"/><circle cx="612.7" cy="346.7" r="1.7"/><circle cx="609.2" cy="351.6" r="1.7"/><circle cx="599.8" cy="325.7" r="1.7"/><circle cx="603.8" cy="337.8" r="1.7"/><circle cx="572.2" cy="324.2" r="1.7"/><circle cx="562.8" cy="329.4" r="1.7"/><circle cx="518.1" cy="358.1" r="1.7"/><circle cx="530.0" cy="355.8" r="1.7"/><circle cx="541.6" cy="386.9" r="1.7"/><circle cx="547.0" cy="397.5" r="1.7"/><circle cx="554.4" cy="395.3" r="1.7"/><circle cx="575.4" cy="392.6" r="1.7"/><circle cx="594.4" cy="388.7" r="1.7"/><circle cx="595.6" cy="387.2" r="1.7"/><circle cx="614.6" cy="386.9" r="1.7"/><circle cx="588.0" cy="402.5" r="1.7"/><circle cx="579.8" cy="410.1" r="1.7"/><circle cx="513.0" cy="415.1" r="1.7"/><circle cx="566.8" cy="437.3" r="1.7"/><circle cx="584.8" cy="451.6" r="1.7"/><circle cx="614.1" cy="434.3" r="1.7"/><circle cx="573.4" cy="465.2" r="1.7"/><circle cx="573.4" cy="467.9" r="1.7"/><circle cx="576.4" cy="473.6" r="1.7"/><circle cx="633.4" cy="483.2" r="1.7"/><circle cx="614.6" cy="368.9" r="1.7"/><circle cx="618.6" cy="372.6" r="1.7"/><circle cx="640.8" cy="357.3" r="1.7"/><circle cx="641.8" cy="371.4" r="1.7"/><circle cx="638.6" cy="380.3" r="1.7"/><circle cx="637.3" cy="388.7" r="1.7"/><circle cx="649.9" cy="390.1" r="1.7"/><circle cx="653.6" cy="381.0" r="1.7"/><circle cx="654.6" cy="433.8" r="1.7"/><circle cx="659.6" cy="423.2" r="1.7"/><circle cx="668.2" cy="424.2" r="1.7"/><circle cx="683.7" cy="431.1" r="1.7"/><circle cx="667.0" cy="453.8" r="1.7"/><circle cx="696.1" cy="448.4" r="1.7"/><circle cx="698.6" cy="443.0" r="1.7"/><circle cx="691.9" cy="461.0" r="1.7"/><circle cx="709.4" cy="457.0" r="1.7"/><circle cx="722.5" cy="459.0" r="1.7"/><circle cx="737.8" cy="462.0" r="1.7"/><circle cx="755.3" cy="459.7" r="1.7"/><circle cx="758.0" cy="443.7" r="1.7"/><circle cx="732.6" cy="440.0" r="1.7"/><circle cx="743.7" cy="477.0" r="1.7"/><circle cx="754.6" cy="427.9" r="1.7"/><circle cx="746.4" cy="416.5" r="1.7"/><circle cx="736.3" cy="412.3" r="1.7"/><circle cx="747.9" cy="400.5" r="1.7"/><circle cx="745.9" cy="387.7" r="1.7"/><circle cx="712.9" cy="413.8" r="1.7"/><circle cx="710.6" cy="416.5" r="1.7"/><circle cx="720.3" cy="395.1" r="1.7"/><circle cx="708.4" cy="397.3" r="1.7"/><circle cx="693.4" cy="396.1" r="1.7"/><circle cx="691.6" cy="396.1" r="1.7"/><circle cx="701.3" cy="388.7" r="1.7"/><circle cx="679.3" cy="388.2" r="1.7"/><circle cx="695.6" cy="375.8" r="1.7"/><circle cx="699.0" cy="372.9" r="1.7"/><circle cx="699.3" cy="365.0" r="1.7"/><circle cx="707.4" cy="366.7" r="1.7"/><circle cx="681.0" cy="354.4" r="1.7"/><circle cx="679.3" cy="357.3" r="1.7"/><circle cx="683.0" cy="357.8" r="1.7"/><circle cx="669.4" cy="346.0" r="1.7"/><circle cx="670.7" cy="328.7" r="1.7"/><circle cx="683.3" cy="323.3" r="1.7"/><circle cx="694.9" cy="318.8" r="1.7"/><circle cx="703.7" cy="315.9" r="1.7"/><circle cx="705.7" cy="299.1" r="1.7"/><circle cx="714.1" cy="312.4" r="1.7"/><circle cx="726.9" cy="306.7" r="1.7"/><circle cx="742.0" cy="311.9" r="1.7"/><circle cx="746.2" cy="300.1" r="1.7"/><circle cx="766.7" cy="295.4" r="1.7"/><circle cx="760.7" cy="316.3" r="1.7"/><circle cx="764.2" cy="325.2" r="1.7"/><circle cx="757.5" cy="346.5" r="1.7"/><circle cx="736.6" cy="342.3" r="1.7"/><circle cx="729.7" cy="348.4" r="1.7"/><circle cx="731.4" cy="335.3" r="1.7"/><circle cx="730.1" cy="328.7" r="1.7"/><circle cx="731.4" cy="326.5" r="1.7"/><circle cx="731.4" cy="322.0" r="1.7"/><circle cx="728.7" cy="374.6" r="1.7"/><circle cx="726.9" cy="379.8" r="1.7"/><circle cx="726.0" cy="384.7" r="1.7"/><circle cx="705.0" cy="334.4" r="1.7"/><circle cx="771.6" cy="306.7" r="1.7"/><circle cx="363.8" cy="486.2" r="1.7"/><circle cx="364.3" cy="493.1" r="1.7"/><circle cx="381.5" cy="486.7" r="1.7"/><circle cx="462.7" cy="480.7" r="1.7"/><circle cx="327.2" cy="497.3" r="1.7"/><circle cx="335.1" cy="503.0" r="1.7"/><circle cx="347.0" cy="506.4" r="1.7"/><circle cx="287.0" cy="508.9" r="1.7"/><circle cx="325.5" cy="516.0" r="1.7"/><circle cx="267.8" cy="519.0" r="1.7"/><circle cx="376.4" cy="512.1" r="1.7"/><circle cx="383.5" cy="519.5" r="1.7"/><circle cx="386.0" cy="526.2" r="1.7"/><circle cx="395.4" cy="525.4" r="1.7"/><circle cx="405.2" cy="514.1" r="1.7"/><circle cx="421.0" cy="526.9" r="1.7"/><circle cx="443.0" cy="524.9" r="1.7"/><circle cx="483.0" cy="494.8" r="1.7"/><circle cx="484.5" cy="494.3" r="1.7"/><circle cx="486.9" cy="504.2" r="1.7"/><circle cx="486.4" cy="540.2" r="1.7"/><circle cx="339.3" cy="525.9" r="1.7"/><circle cx="348.7" cy="522.2" r="1.7"/><circle cx="356.1" cy="520.5" r="1.7"/><circle cx="285.3" cy="533.1" r="1.7"/><circle cx="275.4" cy="536.3" r="1.7"/><circle cx="285.3" cy="540.5" r="1.7"/><circle cx="285.3" cy="545.9" r="1.7"/><circle cx="261.4" cy="543.7" r="1.7"/><circle cx="319.6" cy="540.2" r="1.7"/><circle cx="347.7" cy="541.0" r="1.7"/><circle cx="360.3" cy="538.7" r="1.7"/><circle cx="364.8" cy="534.5" r="1.7"/><circle cx="304.0" cy="554.8" r="1.7"/><circle cx="353.4" cy="551.6" r="1.7"/><circle cx="345.8" cy="555.8" r="1.7"/><circle cx="344.5" cy="557.7" r="1.7"/><circle cx="341.8" cy="560.2" r="1.7"/><circle cx="337.6" cy="565.4" r="1.7"/><circle cx="331.0" cy="568.1" r="1.7"/><circle cx="322.6" cy="571.8" r="1.7"/><circle cx="309.2" cy="574.5" r="1.7"/><circle cx="271.5" cy="566.1" r="1.7"/><circle cx="288.3" cy="579.0" r="1.7"/><circle cx="312.2" cy="586.4" r="1.7"/><circle cx="332.2" cy="586.4" r="1.7"/><circle cx="358.3" cy="564.4" r="1.7"/><circle cx="365.7" cy="564.7" r="1.7"/><circle cx="365.0" cy="574.3" r="1.7"/><circle cx="387.2" cy="551.1" r="1.7"/><circle cx="389.7" cy="561.0" r="1.7"/><circle cx="389.4" cy="566.4" r="1.7"/><circle cx="395.6" cy="542.4" r="1.7"/><circle cx="395.6" cy="546.1" r="1.7"/><circle cx="422.0" cy="554.3" r="1.7"/><circle cx="404.3" cy="579.7" r="1.7"/><circle cx="405.0" cy="583.9" r="1.7"/><circle cx="456.8" cy="566.1" r="1.7"/><circle cx="477.6" cy="575.3" r="1.7"/><circle cx="467.7" cy="579.7" r="1.7"/><circle cx="470.6" cy="596.2" r="1.7"/><circle cx="364.8" cy="594.0" r="1.7"/><circle cx="319.1" cy="605.9" r="1.7"/><circle cx="293.7" cy="610.3" r="1.7"/><circle cx="346.7" cy="611.5" r="1.7"/><circle cx="345.3" cy="613.3" r="1.7"/><circle cx="363.0" cy="615.0" r="1.7"/><circle cx="378.8" cy="611.3" r="1.7"/><circle cx="387.5" cy="607.8" r="1.7"/><circle cx="388.5" cy="609.1" r="1.7"/><circle cx="378.1" cy="621.4" r="1.7"/><circle cx="411.7" cy="614.8" r="1.7"/><circle cx="429.4" cy="604.6" r="1.7"/><circle cx="443.5" cy="609.1" r="1.7"/><circle cx="471.4" cy="618.9" r="1.7"/><circle cx="473.6" cy="618.0" r="1.7"/><circle cx="480.3" cy="623.1" r="1.7"/><circle cx="501.7" cy="627.3" r="1.7"/><circle cx="331.4" cy="619.2" r="1.7"/><circle cx="345.3" cy="624.1" r="1.7"/><circle cx="342.8" cy="634.5" r="1.7"/><circle cx="352.4" cy="643.1" r="1.7"/><circle cx="325.5" cy="651.0" r="1.7"/><circle cx="340.8" cy="650.3" r="1.7"/><circle cx="386.7" cy="633.5" r="1.7"/><circle cx="422.0" cy="629.6" r="1.7"/><circle cx="421.0" cy="632.3" r="1.7"/><circle cx="388.9" cy="656.0" r="1.7"/><circle cx="354.4" cy="660.9" r="1.7"/><circle cx="356.6" cy="668.1" r="1.7"/><circle cx="345.8" cy="672.0" r="1.7"/><circle cx="633.2" cy="483.9" r="1.7"/><circle cx="632.9" cy="493.3" r="1.7"/><circle cx="616.9" cy="491.8" r="1.7"/><circle cx="653.1" cy="489.6" r="1.7"/><circle cx="651.4" cy="499.0" r="1.7"/><circle cx="681.3" cy="502.5" r="1.7"/><circle cx="558.9" cy="501.2" r="1.7"/><circle cx="601.8" cy="510.9" r="1.7"/><circle cx="600.8" cy="518.0" r="1.7"/><circle cx="616.9" cy="509.4" r="1.7"/><circle cx="620.8" cy="511.6" r="1.7"/><circle cx="636.9" cy="514.1" r="1.7"/><circle cx="632.9" cy="520.2" r="1.7"/><circle cx="688.2" cy="519.2" r="1.7"/><circle cx="674.6" cy="525.7" r="1.7"/><circle cx="661.0" cy="530.6" r="1.7"/><circle cx="647.5" cy="535.8" r="1.7"/><circle cx="630.2" cy="532.6" r="1.7"/><circle cx="638.3" cy="540.5" r="1.7"/><circle cx="644.3" cy="542.4" r="1.7"/><circle cx="678.6" cy="538.7" r="1.7"/><circle cx="699.3" cy="534.8" r="1.7"/><circle cx="733.1" cy="543.9" r="1.7"/><circle cx="725.5" cy="549.4" r="1.7"/><circle cx="749.9" cy="550.1" r="1.7"/><circle cx="757.5" cy="552.1" r="1.7"/><circle cx="761.7" cy="555.3" r="1.7"/><circle cx="767.9" cy="553.1" r="1.7"/><circle cx="770.4" cy="554.0" r="1.7"/><circle cx="768.2" cy="557.5" r="1.7"/><circle cx="767.4" cy="563.7" r="1.7"/><circle cx="725.7" cy="565.9" r="1.7"/><circle cx="710.4" cy="569.1" r="1.7"/><circle cx="704.0" cy="561.4" r="1.7"/><circle cx="686.5" cy="558.0" r="1.7"/><circle cx="740.3" cy="575.0" r="1.7"/><circle cx="747.7" cy="585.9" r="1.7"/><circle cx="764.0" cy="604.6" r="1.7"/><circle cx="689.9" cy="608.1" r="1.7"/><circle cx="579.1" cy="543.7" r="1.7"/><circle cx="564.3" cy="549.4" r="1.7"/><circle cx="583.5" cy="552.8" r="1.7"/><circle cx="609.7" cy="551.3" r="1.7"/><circle cx="558.9" cy="561.4" r="1.7"/><circle cx="549.5" cy="566.1" r="1.7"/><circle cx="530.0" cy="565.4" r="1.7"/><circle cx="524.8" cy="575.0" r="1.7"/><circle cx="524.8" cy="580.9" r="1.7"/><circle cx="541.1" cy="581.4" r="1.7"/><circle cx="522.3" cy="592.3" r="1.7"/><circle cx="534.7" cy="599.7" r="1.7"/><circle cx="546.8" cy="596.2" r="1.7"/><circle cx="521.1" cy="607.3" r="1.7"/><circle cx="557.4" cy="614.0" r="1.7"/><circle cx="534.2" cy="620.7" r="1.7"/><circle cx="522.6" cy="634.7" r="1.7"/><circle cx="534.2" cy="650.8" r="1.7"/><circle cx="576.4" cy="581.4" r="1.7"/><circle cx="590.5" cy="588.6" r="1.7"/><circle cx="608.5" cy="586.9" r="1.7"/><circle cx="581.3" cy="598.0" r="1.7"/><circle cx="583.1" cy="599.2" r="1.7"/><circle cx="603.5" cy="598.7" r="1.7"/><circle cx="607.2" cy="598.7" r="1.7"/><circle cx="609.7" cy="598.5" r="1.7"/><circle cx="584.5" cy="606.4" r="1.7"/><circle cx="600.1" cy="608.6" r="1.7"/><circle cx="586.0" cy="614.0" r="1.7"/><circle cx="637.8" cy="554.8" r="1.7"/><circle cx="652.4" cy="559.2" r="1.7"/><circle cx="642.5" cy="566.4" r="1.7"/><circle cx="645.0" cy="571.3" r="1.7"/><circle cx="635.4" cy="576.7" r="1.7"/><circle cx="658.3" cy="574.8" r="1.7"/><circle cx="657.3" cy="576.5" r="1.7"/><circle cx="649.9" cy="582.2" r="1.7"/><circle cx="640.6" cy="585.4" r="1.7"/><circle cx="645.2" cy="600.2" r="1.7"/><circle cx="647.5" cy="601.9" r="1.7"/><circle cx="652.7" cy="600.9" r="1.7"/><circle cx="651.2" cy="606.9" r="1.7"/><circle cx="638.6" cy="608.6" r="1.7"/><circle cx="650.2" cy="611.5" r="1.7"/><circle cx="644.8" cy="620.7" r="1.7"/><circle cx="634.6" cy="628.1" r="1.7"/><circle cx="645.2" cy="632.8" r="1.7"/><circle cx="670.9" cy="636.0" r="1.7"/><circle cx="620.3" cy="647.1" r="1.7"/><circle cx="634.6" cy="650.3" r="1.7"/><circle cx="641.1" cy="662.1" r="1.7"/><circle cx="661.0" cy="663.6" r="1.7"/><circle cx="650.4" cy="669.3" r="1.7"/></g></g></svg>
<div style="left:682px;top:45px;width:220px;height:417px;background:#f4f5f7;border:1px solid #b9bec8;box-sizing:border-box;border-radius:3px 3px 0 0;"></div>
<div style="left:683px;top:60px;width:218px;height:1px;background:#b9bec8;"></div>
<div class="tab" style="left:682px;top:45px;width:101px;height:16px;background:#fff;"></div>
<div style="left:683px;top:61px;width:218px;height:400px;background:#fff;"></div>
<svg style="left:685px;top:48px;" width="10" height="9" viewBox="0 0 10 9"><circle cx="3" cy="3" r="2" fill="#f0c64a" stroke="#a8841c" stroke-width="0.7"/><circle cx="6.6" cy="5.6" r="2.4" fill="#7ea3dc" stroke="#365b9b" stroke-width="0.7"/><path d="M0.5 1.5H5M0.5 4.5H4" stroke="#555" stroke-width="0.6"/></svg>
<span class="tt" style="left:697px;top:49.4px;">Processing Toolbox</span>
<svg style="left:770.5px;top:50px;" width="7" height="7" viewBox="0 0 7 7"><path d="M0.6 1.4L1.4 0.6L3.5 2.7L5.6 0.6L6.4 1.4L4.3 3.5L6.4 5.6L5.6 6.4L3.5 4.3L1.4 6.4L0.6 5.6L2.7 3.5Z" fill="#fbfbfb" stroke="#7d7d7d" stroke-width="0.7" stroke-linejoin="round"/></svg>
<svg style="left:861.5px;top:48px;" width="9" height="9" viewBox="0 0 9 9"><circle cx="4.5" cy="4.5" r="3.2" fill="#5f8fd8" stroke="#3767b6" stroke-width="1.6" stroke-dasharray="1.3 0.9"/><circle cx="4.5" cy="4.5" r="1.2" fill="#dbe7fa"/></svg>
<svg style="left:877.5px;top:48.5px;" width="18" height="8" viewBox="0 0 18 8"><rect x="0.5" y="0.5" width="5" height="2" fill="#fff" stroke="#858585" stroke-width="0.8"/><rect x="11.5" y="0.5" width="6" height="6.5" fill="#fff" stroke="#858585" stroke-width="0.8"/><path d="M11.5 2.3H17.5" stroke="#858585" stroke-width="0.8"/></svg>
<div style="left:683px;top:62px;width:216px;height:14px;background:#fff;border:1px solid #abadb3;box-sizing:border-box;"></div>
<span class="tt" style="left:685px;top:64.7px;color:#3a3a3a;font-size:7.85px;">type filter text</span>
<div style="left:683px;top:79px;width:217px;height:382px;background:#fff;border:1px solid #8f949c;box-sizing:border-box;"></div>
<svg style="left:699.5px;top:82.9px;" width="10" height="8" viewBox="0 0 10 8"><path d="M0.6 7.4 L0.6 1.3 Q0.6 0.6 1.3 0.6 L3.3 0.6 L4.2 1.7 L7.6 1.7 L7.6 3" fill="#fdf3c4" stroke="#d9a830" stroke-width="0.9"/><path d="M0.7 7.4 L2.4 3.1 L9.6 3.1 L7.7 7.4 Z" fill="#fbe187" stroke="#d8a327" stroke-width="0.9" stroke-linejoin="round"/></svg>
<span class="row" style="left:713px;top:82.3px;">General Tools</span>
<svg style="left:712px;top:93.23px;" width="10" height="10" viewBox="0 0 10 10"><rect x="0.5" y="0.5" width="9" height="9" fill="#fdfdff" stroke="#3d5f94" stroke-width="1"/><rect x="0.5" y="0.3" width="9" height="1.6" fill="#34588f"/><rect x="3.9" y="3" width="2.4" height="1.8" fill="#4f82c4"/><rect x="1.8" y="6.2" width="2.4" height="1.8" fill="#3b6db5"/><rect x="5.8" y="6.2" width="2.4" height="1.8" fill="#3b6db5"/><path d="M5.1 4.8V5.6M3 6.2V5.6H7V6.2" stroke="#5a7fb5" stroke-width="0.5" fill="none"/></svg>
<span class="row" style="left:725.5px;top:94.23px;">Thematic Mapping Tool</span>
<svg style="left:712px;top:105.16px;" width="10" height="10" viewBox="0 0 10 10"><rect x="0.5" y="0.5" width="9" height="9" fill="#fdfdff" stroke="#3d5f94" stroke-width="1"/><rect x="0.5" y="0.3" width="9" height="1.6" fill="#34588f"/><rect x="3.9" y="3" width="2.4" height="1.8" fill="#4f82c4"/><rect x="1.8" y="6.2" width="2.4" height="1.8" fill="#3b6db5"/><rect x="5.8" y="6.2" width="2.4" height="1.8" fill="#3b6db5"/><path d="M5.1 4.8V5.6M3 6.2V5.6H7V6.2" stroke="#5a7fb5" stroke-width="0.5" fill="none"/></svg>
<span class="row" style="left:725.5px;top:106.16px;">Field Calculator</span>
<svg style="left:712px;top:118.69px;" width="10" height="8" viewBox="0 0 10 8"><path d="M0.6 7.4 L0.6 1.3 Q0.6 0.6 1.3 0.6 L3.3 0.6 L4.2 1.7 L7.6 1.7 L7.6 3" fill="#fdf3c4" stroke="#d9a830" stroke-width="0.9"/><path d="M0.7 7.4 L2.4 3.1 L9.6 3.1 L7.7 7.4 Z" fill="#fbe187" stroke="#d8a327" stroke-width="0.9" stroke-linejoin="round"/></svg>
<span class="row" style="left:725.5px;top:118.09px;">Import</span>
<svg style="left:712px;top:130.62px;" width="10" height="8" viewBox="0 0 10 8"><path d="M0.6 7.4 L0.6 1.3 Q0.6 0.6 1.3 0.6 L3.3 0.6 L4.2 1.7 L7.6 1.7 L7.6 3" fill="#fdf3c4" stroke="#d9a830" stroke-width="0.9"/><path d="M0.7 7.4 L2.4 3.1 L9.6 3.1 L7.7 7.4 Z" fill="#fbe187" stroke="#d8a327" stroke-width="0.9" stroke-linejoin="round"/></svg>
<span class="row" style="left:725.5px;top:130.02px;">Export</span>
<svg style="left:712px;top:142.55px;" width="10" height="8" viewBox="0 0 10 8"><path d="M0.6 7.4 L0.6 1.3 Q0.6 0.6 1.3 0.6 L3.3 0.6 L4.2 1.7 L7.6 1.7 L7.6 3" fill="#fdf3c4" stroke="#d9a830" stroke-width="0.9"/><path d="M0.7 7.4 L2.4 3.1 L9.6 3.1 L7.7 7.4 Z" fill="#fbe187" stroke="#d8a327" stroke-width="0.9" stroke-linejoin="round"/></svg>
<span class="row" style="left:725.5px;top:141.95px;">Data Creation</span>
<svg style="left:712px;top:154.48px;" width="10" height="8" viewBox="0 0 10 8"><path d="M0.6 7.4 L0.6 1.3 Q0.6 0.6 1.3 0.6 L3.3 0.6 L4.2 1.7 L7.6 1.7 L7.6 3" fill="#fdf3c4" stroke="#d9a830" stroke-width="0.9"/><path d="M0.7 7.4 L2.4 3.1 L9.6 3.1 L7.7 7.4 Z" fill="#fbe187" stroke="#d8a327" stroke-width="0.9" stroke-linejoin="round"/></svg>
<span class="row" style="left:725.5px;top:153.88px;">Calculation</span>
<svg style="left:712px;top:166.41px;" width="10" height="8" viewBox="0 0 10 8"><path d="M0.6 7.4 L0.6 1.3 Q0.6 0.6 1.3 0.6 L3.3 0.6 L4.2 1.7 L7.6 1.7 L7.6 3" fill="#fdf3c4" stroke="#d9a830" stroke-width="0.9"/><path d="M0.7 7.4 L2.4 3.1 L9.6 3.1 L7.7 7.4 Z" fill="#fbe187" stroke="#d8a327" stroke-width="0.9" stroke-linejoin="round"/></svg>
<span class="row" style="left:725.5px;top:165.81px;">Graph</span>
<svg style="left:712px;top:178.34px;" width="10" height="8" viewBox="0 0 10 8"><path d="M0.6 7.4 L0.6 1.3 Q0.6 0.6 1.3 0.6 L3.3 0.6 L4.2 1.7 L7.6 1.7 L7.6 3" fill="#fdf3c4" stroke="#d9a830" stroke-width="0.9"/><path d="M0.7 7.4 L2.4 3.1 L9.6 3.1 L7.7 7.4 Z" fill="#fbe187" stroke="#d8a327" stroke-width="0.9" stroke-linejoin="round"/></svg>
<span class="row" style="left:725.5px;top:177.74px;">Proximity Analysis</span>
<svg style="left:712px;top:190.27px;" width="10" height="8" viewBox="0 0 10 8"><path d="M0.6 7.4 L0.6 1.3 Q0.6 0.6 1.3 0.6 L3.3 0.6 L4.2 1.7 L7.6 1.7 L7.6 3" fill="#fdf3c4" stroke="#d9a830" stroke-width="0.9"/><path d="M0.7 7.4 L2.4 3.1 L9.6 3.1 L7.7 7.4 Z" fill="#fbe187" stroke="#d8a327" stroke-width="0.9" stroke-linejoin="round"/></svg>
<span class="row" style="left:725.5px;top:189.67px;">Aggregation</span>
<svg style="left:712px;top:202.2px;" width="10" height="8" viewBox="0 0 10 8"><path d="M0.6 7.4 L0.6 1.3 Q0.6 0.6 1.3 0.6 L3.3 0.6 L4.2 1.7 L7.6 1.7 L7.6 3" fill="#fdf3c4" stroke="#d9a830" stroke-width="0.9"/><path d="M0.7 7.4 L2.4 3.1 L9.6 3.1 L7.7 7.4 Z" fill="#fbe187" stroke="#d8a327" stroke-width="0.9" stroke-linejoin="round"/></svg>
<span class="row" style="left:725.5px;top:201.6px;">Extract</span>
<svg style="left:712px;top:214.13px;" width="10" height="8" viewBox="0 0 10 8"><path d="M0.6 7.4 L0.6 1.3 Q0.6 0.6 1.3 0.6 L3.3 0.6 L4.2 1.7 L7.6 1.7 L7.6 3" fill="#fdf3c4" stroke="#d9a830" stroke-width="0.9"/><path d="M0.7 7.4 L2.4 3.1 L9.6 3.1 L7.7 7.4 Z" fill="#fbe187" stroke="#d8a327" stroke-width="0.9" stroke-linejoin="round"/></svg>
<span class="row" style="left:725.5px;top:213.53px;">Overlay Analysis</span>
<svg style="left:712px;top:226.06px;" width="10" height="8" viewBox="0 0 10 8"><path d="M0.6 7.4 L0.6 1.3 Q0.6 0.6 1.3 0.6 L3.3 0.6 L4.2 1.7 L7.6 1.7 L7.6 3" fill="#fdf3c4" stroke="#d9a830" stroke-width="0.9"/><path d="M0.7 7.4 L2.4 3.1 L9.6 3.1 L7.7 7.4 Z" fill="#fbe187" stroke="#d8a327" stroke-width="0.9" stroke-linejoin="round"/></svg>
<span class="row" style="left:725.5px;top:225.46px;">Utilities</span>
<svg style="left:699.5px;top:237.99px;" width="10" height="8" viewBox="0 0 10 8"><path d="M0.6 7.4 L0.6 1.3 Q0.6 0.6 1.3 0.6 L3.3 0.6 L4.2 1.7 L7.6 1.7 L7.6 3" fill="#fdf3c4" stroke="#d9a830" stroke-width="0.9"/><path d="M0.7 7.4 L2.4 3.1 L9.6 3.1 L7.7 7.4 Z" fill="#fbe187" stroke="#d8a327" stroke-width="0.9" stroke-linejoin="round"/></svg>
<span class="row" style="left:713px;top:237.39px;">Spatial Statistics</span>
<svg style="left:712px;top:248.32px;" width="10" height="10" viewBox="0 0 10 10"><rect x="0.5" y="0.5" width="9" height="9" fill="#fdfdff" stroke="#3d5f94" stroke-width="1"/><rect x="0.5" y="0.3" width="9" height="1.6" fill="#34588f"/><rect x="3.9" y="3" width="2.4" height="1.8" fill="#4f82c4"/><rect x="1.8" y="6.2" width="2.4" height="1.8" fill="#3b6db5"/><rect x="5.8" y="6.2" width="2.4" height="1.8" fill="#3b6db5"/><path d="M5.1 4.8V5.6M3 6.2V5.6H7V6.2" stroke="#5a7fb5" stroke-width="0.5" fill="none"/></svg>
<span class="row" style="left:725.5px;top:249.32px;">Generate Spatial Weights Matrix</span>
<svg style="left:712px;top:261.85px;" width="10" height="8" viewBox="0 0 10 8"><path d="M0.6 7.4 L0.6 1.3 Q0.6 0.6 1.3 0.6 L3.3 0.6 L4.2 1.7 L7.6 1.7 L7.6 3" fill="#fdf3c4" stroke="#d9a830" stroke-width="0.9"/><path d="M0.7 7.4 L2.4 3.1 L9.6 3.1 L7.7 7.4 Z" fill="#fbe187" stroke="#d8a327" stroke-width="0.9" stroke-linejoin="round"/></svg>
<span class="row" style="left:725.5px;top:261.25px;">Descriptive Statistics</span>
<svg style="left:712px;top:273.78px;" width="10" height="8" viewBox="0 0 10 8"><path d="M0.6 7.4 L0.6 1.3 Q0.6 0.6 1.3 0.6 L3.3 0.6 L4.2 1.7 L7.6 1.7 L7.6 3" fill="#fdf3c4" stroke="#d9a830" stroke-width="0.9"/><path d="M0.7 7.4 L2.4 3.1 L9.6 3.1 L7.7 7.4 Z" fill="#fbe187" stroke="#d8a327" stroke-width="0.9" stroke-linejoin="round"/></svg>
<span class="row" style="left:725.5px;top:273.18px;">Point Pattern Analysis</span>
<svg style="left:712px;top:285.71px;" width="10" height="8" viewBox="0 0 10 8"><path d="M0.6 7.4 L0.6 1.3 Q0.6 0.6 1.3 0.6 L3.3 0.6 L4.2 1.7 L7.6 1.7 L7.6 3" fill="#fdf3c4" stroke="#d9a830" stroke-width="0.9"/><path d="M0.7 7.4 L2.4 3.1 L9.6 3.1 L7.7 7.4 Z" fill="#fbe187" stroke="#d8a327" stroke-width="0.9" stroke-linejoin="round"/></svg>
<span class="row" style="left:725.5px;top:285.11px;">Global Spatial Autocorrelation</span>
<svg style="left:712px;top:297.64px;" width="10" height="8" viewBox="0 0 10 8"><path d="M0.6 7.4 L0.6 1.3 Q0.6 0.6 1.3 0.6 L3.3 0.6 L4.2 1.7 L7.6 1.7 L7.6 3" fill="#fdf3c4" stroke="#d9a830" stroke-width="0.9"/><path d="M0.7 7.4 L2.4 3.1 L9.6 3.1 L7.7 7.4 Z" fill="#fbe187" stroke="#d8a327" stroke-width="0.9" stroke-linejoin="round"/></svg>
<span class="row" style="left:725.5px;top:297.04px;">Local Spatial Autocorrelation</span>
<svg style="left:712px;top:309.57px;" width="10" height="8" viewBox="0 0 10 8"><path d="M0.6 7.4 L0.6 1.3 Q0.6 0.6 1.3 0.6 L3.3 0.6 L4.2 1.7 L7.6 1.7 L7.6 3" fill="#fdf3c4" stroke="#d9a830" stroke-width="0.9"/><path d="M0.7 7.4 L2.4 3.1 L9.6 3.1 L7.7 7.4 Z" fill="#fbe187" stroke="#d8a327" stroke-width="0.9" stroke-linejoin="round"/></svg>
<span class="row" style="left:725.5px;top:308.97px;">Spatial Distribution</span>
<svg style="left:699.5px;top:321.5px;" width="10" height="8" viewBox="0 0 10 8"><path d="M0.6 7.4 L0.6 1.3 Q0.6 0.6 1.3 0.6 L3.3 0.6 L4.2 1.7 L7.6 1.7 L7.6 3" fill="#fdf3c4" stroke="#d9a830" stroke-width="0.9"/><path d="M0.7 7.4 L2.4 3.1 L9.6 3.1 L7.7 7.4 Z" fill="#fbe187" stroke="#d8a327" stroke-width="0.9" stroke-linejoin="round"/></svg>
<span class="row" style="left:713px;top:320.9px;">Raster Tools</span>
<svg style="left:712px;top:333.43px;" width="10" height="8" viewBox="0 0 10 8"><path d="M0.6 7.4 L0.6 1.3 Q0.6 0.6 1.3 0.6 L3.3 0.6 L4.2 1.7 L7.6 1.7 L7.6 3" fill="#fdf3c4" stroke="#d9a830" stroke-width="0.9"/><path d="M0.7 7.4 L2.4 3.1 L9.6 3.1 L7.7 7.4 Z" fill="#fbe187" stroke="#d8a327" stroke-width="0.9" stroke-linejoin="round"/></svg>
<span class="row" style="left:725.5px;top:332.83px;">Density</span>
<svg style="left:712px;top:345.36px;" width="10" height="8" viewBox="0 0 10 8"><path d="M0.6 7.4 L0.6 1.3 Q0.6 0.6 1.3 0.6 L3.3 0.6 L4.2 1.7 L7.6 1.7 L7.6 3" fill="#fdf3c4" stroke="#d9a830" stroke-width="0.9"/><path d="M0.7 7.4 L2.4 3.1 L9.6 3.1 L7.7 7.4 Z" fill="#fbe187" stroke="#d8a327" stroke-width="0.9" stroke-linejoin="round"/></svg>
<span class="row" style="left:725.5px;top:344.76px;">Interpolation</span>
<svg style="left:724.5px;top:355.69px;" width="10" height="10" viewBox="0 0 10 10"><rect x="0.5" y="0.5" width="9" height="9" fill="#fdfdff" stroke="#3d5f94" stroke-width="1"/><rect x="0.5" y="0.3" width="9" height="1.6" fill="#34588f"/><rect x="3.9" y="3" width="2.4" height="1.8" fill="#4f82c4"/><rect x="1.8" y="6.2" width="2.4" height="1.8" fill="#3b6db5"/><rect x="5.8" y="6.2" width="2.4" height="1.8" fill="#3b6db5"/><path d="M5.1 4.8V5.6M3 6.2V5.6H7V6.2" stroke="#5a7fb5" stroke-width="0.5" fill="none"/></svg>
<span class="row" style="left:738px;top:356.69px;">IDW Interpolation</span>
<div style="left:723px;top:366.82px;width:142px;height:11.8px;background:#f0f0f0;border:1px solid #dcdcdc;border-radius:2px;box-sizing:border-box;"></div>
<svg style="left:724.5px;top:367.62px;" width="10" height="10" viewBox="0 0 10 10"><rect x="0.5" y="0.5" width="9" height="9" fill="#fdfdff" stroke="#3d5f94" stroke-width="1"/><rect x="0.5" y="0.3" width="9" height="1.6" fill="#34588f"/><rect x="3.9" y="3" width="2.4" height="1.8" fill="#4f82c4"/><rect x="1.8" y="6.2" width="2.4" height="1.8" fill="#3b6db5"/><rect x="5.8" y="6.2" width="2.4" height="1.8" fill="#3b6db5"/><path d="M5.1 4.8V5.6M3 6.2V5.6H7V6.2" stroke="#5a7fb5" stroke-width="0.5" fill="none"/></svg>
<span class="row" style="left:738px;top:368.62px;">Thin Plate Spline(TPS) Interpolation</span>
<svg style="left:712px;top:381.15px;" width="10" height="8" viewBox="0 0 10 8"><path d="M0.6 7.4 L0.6 1.3 Q0.6 0.6 1.3 0.6 L3.3 0.6 L4.2 1.7 L7.6 1.7 L7.6 3" fill="#fdf3c4" stroke="#d9a830" stroke-width="0.9"/><path d="M0.7 7.4 L2.4 3.1 L9.6 3.1 L7.7 7.4 Z" fill="#fbe187" stroke="#d8a327" stroke-width="0.9" stroke-linejoin="round"/></svg>
<span class="row" style="left:725.5px;top:380.55px;">Extract</span>
<svg style="left:699.5px;top:393.08px;" width="10" height="8" viewBox="0 0 10 8"><path d="M0.6 7.4 L0.6 1.3 Q0.6 0.6 1.3 0.6 L3.3 0.6 L4.2 1.7 L7.6 1.7 L7.6 3" fill="#fdf3c4" stroke="#d9a830" stroke-width="0.9"/><path d="M0.7 7.4 L2.4 3.1 L9.6 3.1 L7.7 7.4 Z" fill="#fbe187" stroke="#d8a327" stroke-width="0.9" stroke-linejoin="round"/></svg>
<span class="row" style="left:713px;top:392.48px;">GeoTools Processes</span>
<svg style="left:712px;top:405.01px;" width="10" height="8" viewBox="0 0 10 8"><path d="M0.6 7.4 L0.6 1.3 Q0.6 0.6 1.3 0.6 L3.3 0.6 L4.2 1.7 L7.6 1.7 L7.6 3" fill="#fdf3c4" stroke="#d9a830" stroke-width="0.9"/><path d="M0.7 7.4 L2.4 3.1 L9.6 3.1 L7.7 7.4 Z" fill="#fbe187" stroke="#d8a327" stroke-width="0.9" stroke-linejoin="round"/></svg>
<span class="row" style="left:725.5px;top:404.41px;">Raster processes</span>
<svg style="left:712px;top:416.94px;" width="10" height="8" viewBox="0 0 10 8"><path d="M0.6 7.4 L0.6 1.3 Q0.6 0.6 1.3 0.6 L3.3 0.6 L4.2 1.7 L7.6 1.7 L7.6 3" fill="#fdf3c4" stroke="#d9a830" stroke-width="0.9"/><path d="M0.7 7.4 L2.4 3.1 L9.6 3.1 L7.7 7.4 Z" fill="#fbe187" stroke="#d8a327" stroke-width="0.9" stroke-linejoin="round"/></svg>
<span class="row" style="left:725.5px;top:416.34px;">Vector processes</span>
<svg style="left:712px;top:428.87px;" width="10" height="8" viewBox="0 0 10 8"><path d="M0.6 7.4 L0.6 1.3 Q0.6 0.6 1.3 0.6 L3.3 0.6 L4.2 1.7 L7.6 1.7 L7.6 3" fill="#fdf3c4" stroke="#d9a830" stroke-width="0.9"/><path d="M0.7 7.4 L2.4 3.1 L9.6 3.1 L7.7 7.4 Z" fill="#fbe187" stroke="#d8a327" stroke-width="0.9" stroke-linejoin="round"/></svg>
<span class="row" style="left:725.5px;top:428.27px;">Geometry processes</span>
<div style="left:0px;top:462px;width:903px;height:20px;background:#f0f0f0;"></div>
<svg style="left:4px;top:464px;" width="3" height="16" viewBox="0 0 3 16"><path d="M1 0V16" stroke="#b8b8b8" stroke-width="1" stroke-dasharray="1 1"/></svg>
<svg style="left:11.5px;top:467px;" width="10" height="10" viewBox="0 0 10 10"><rect x="0.5" y="1.5" width="3.4" height="7.5" fill="#fff" stroke="#4a4a4a" stroke-width="0.8"/><rect x="0.5" y="1.2" width="3.4" height="1.5" fill="#3d6fc4"/><path d="M5.2 2.6L7 0.6L8.8 2.6L7 4.4Z" fill="#f0c030" stroke="#b98a10" stroke-width="0.5"/></svg>
<div style="left:447px;top:464px;width:140px;height:17px;background:#fff;border:1px solid #e2e2e2;box-sizing:border-box;"></div>
<span class="tt" style="left:480.5px;top:468.2px;font-size:7.85px;">14137960, 4514233</span>
<svg style="left:591px;top:464px;" width="3" height="16" viewBox="0 0 3 16"><path d="M1 0V16" stroke="#b0b0b0" stroke-width="1" stroke-dasharray="1 1"/></svg>
<div style="left:783px;top:464px;width:119px;height:17px;background:#f2f2f2;border:1px solid #e3e3e3;border-radius:3px;box-sizing:border-box;"></div>
<svg style="left:786px;top:465px;" width="3" height="15" viewBox="0 0 3 15"><path d="M1 0V15" stroke="#b0b0b0" stroke-width="1" stroke-dasharray="1 1"/></svg>
<svg style="left:794px;top:469px;" width="8" height="7" viewBox="0 0 8 7"><rect x="2.5" y="0.8" width="4.5" height="3" fill="#fff" stroke="#555" stroke-width="0.8"/><rect x="0.8" y="3" width="4.5" height="3" fill="#fff" stroke="#555" stroke-width="0.8"/></svg>
<svg style="left:808px;top:467px;" width="10" height="10" viewBox="0 0 10 10"><rect x="0.6" y="0.6" width="5" height="8" fill="#eaf1fc" stroke="#2f5fb3" stroke-width="1.1"/><rect x="3.6" y="3.2" width="5.6" height="6" fill="#4f86d9" stroke="#244f9c" stroke-width="1"/><rect x="4.8" y="5" width="2" height="3" fill="#f3e08a"/></svg>
<svg style="left:823.8px;top:467px;" width="10" height="10" viewBox="0 0 10 10"><rect x="0.6" y="0.8" width="8.6" height="8.4" fill="#f4f8ff" stroke="#5b84c4" stroke-width="0.9"/><rect x="0.6" y="0.8" width="8.6" height="2.2" fill="#4a7fd0"/></svg>
<svg style="left:838px;top:467px;" width="11" height="10" viewBox="0 0 11 10"><path d="M1 9L3.4 4.6L8.4 0.8L10 2.6L5.6 7L1 9Z" fill="#f1b33c" stroke="#b77a12" stroke-width="0.8"/><path d="M1 9L2.6 5.8L4.4 7.6Z" fill="#d24a2a"/><path d="M7 2L8.8 3.8" stroke="#6a4" stroke-width="1"/></svg>
<svg style="left:854px;top:466.5px;" width="11" height="11" viewBox="0 0 11 11"><rect x="0.6" y="2.6" width="4.2" height="3.4" fill="#b9d27a" stroke="#5d7d2a" stroke-width="0.7"/><rect x="5.6" y="2.6" width="4.4" height="3.4" fill="#e8d06a" stroke="#8a6f1e" stroke-width="0.7"/><rect x="0.6" y="6.8" width="4.2" height="3.4" fill="#c9a0dc" stroke="#6d3f8f" stroke-width="0.7"/><rect x="5.6" y="6.8" width="4.4" height="3.4" fill="#9ec1ee" stroke="#3d63a3" stroke-width="0.7"/><path d="M5.2 0.2V2.4M3 1H7.6" stroke="#c78a1b" stroke-width="0.9"/></svg>
<svg style="left:869.5px;top:467px;" width="10" height="10" viewBox="0 0 10 10"><rect x="0.8" y="0.8" width="8.4" height="6" rx="0.6" fill="#3a73c9" stroke="#1f4a94" stroke-width="1"/><rect x="2.2" y="2" width="5.6" height="3.2" fill="#e9f1fd"/><path d="M5 7V8.6M2.4 9.2H7.6" stroke="#1f4a94" stroke-width="1.1"/></svg>
<svg style="left:884.5px;top:467.5px;" width="10" height="9" viewBox="0 0 10 9"><rect x="0.6" y="0.6" width="8.8" height="7.8" fill="#d5dae2" stroke="#9aa3b2" stroke-width="0.8"/><path d="M3.6 0.6V8.4M6.4 0.6V8.4" stroke="#9aa3b2" stroke-width="0.7"/><rect x="0.6" y="0.6" width="8.8" height="1.6" fill="#aab3c2"/></svg>
</div>
</body>
</html>
